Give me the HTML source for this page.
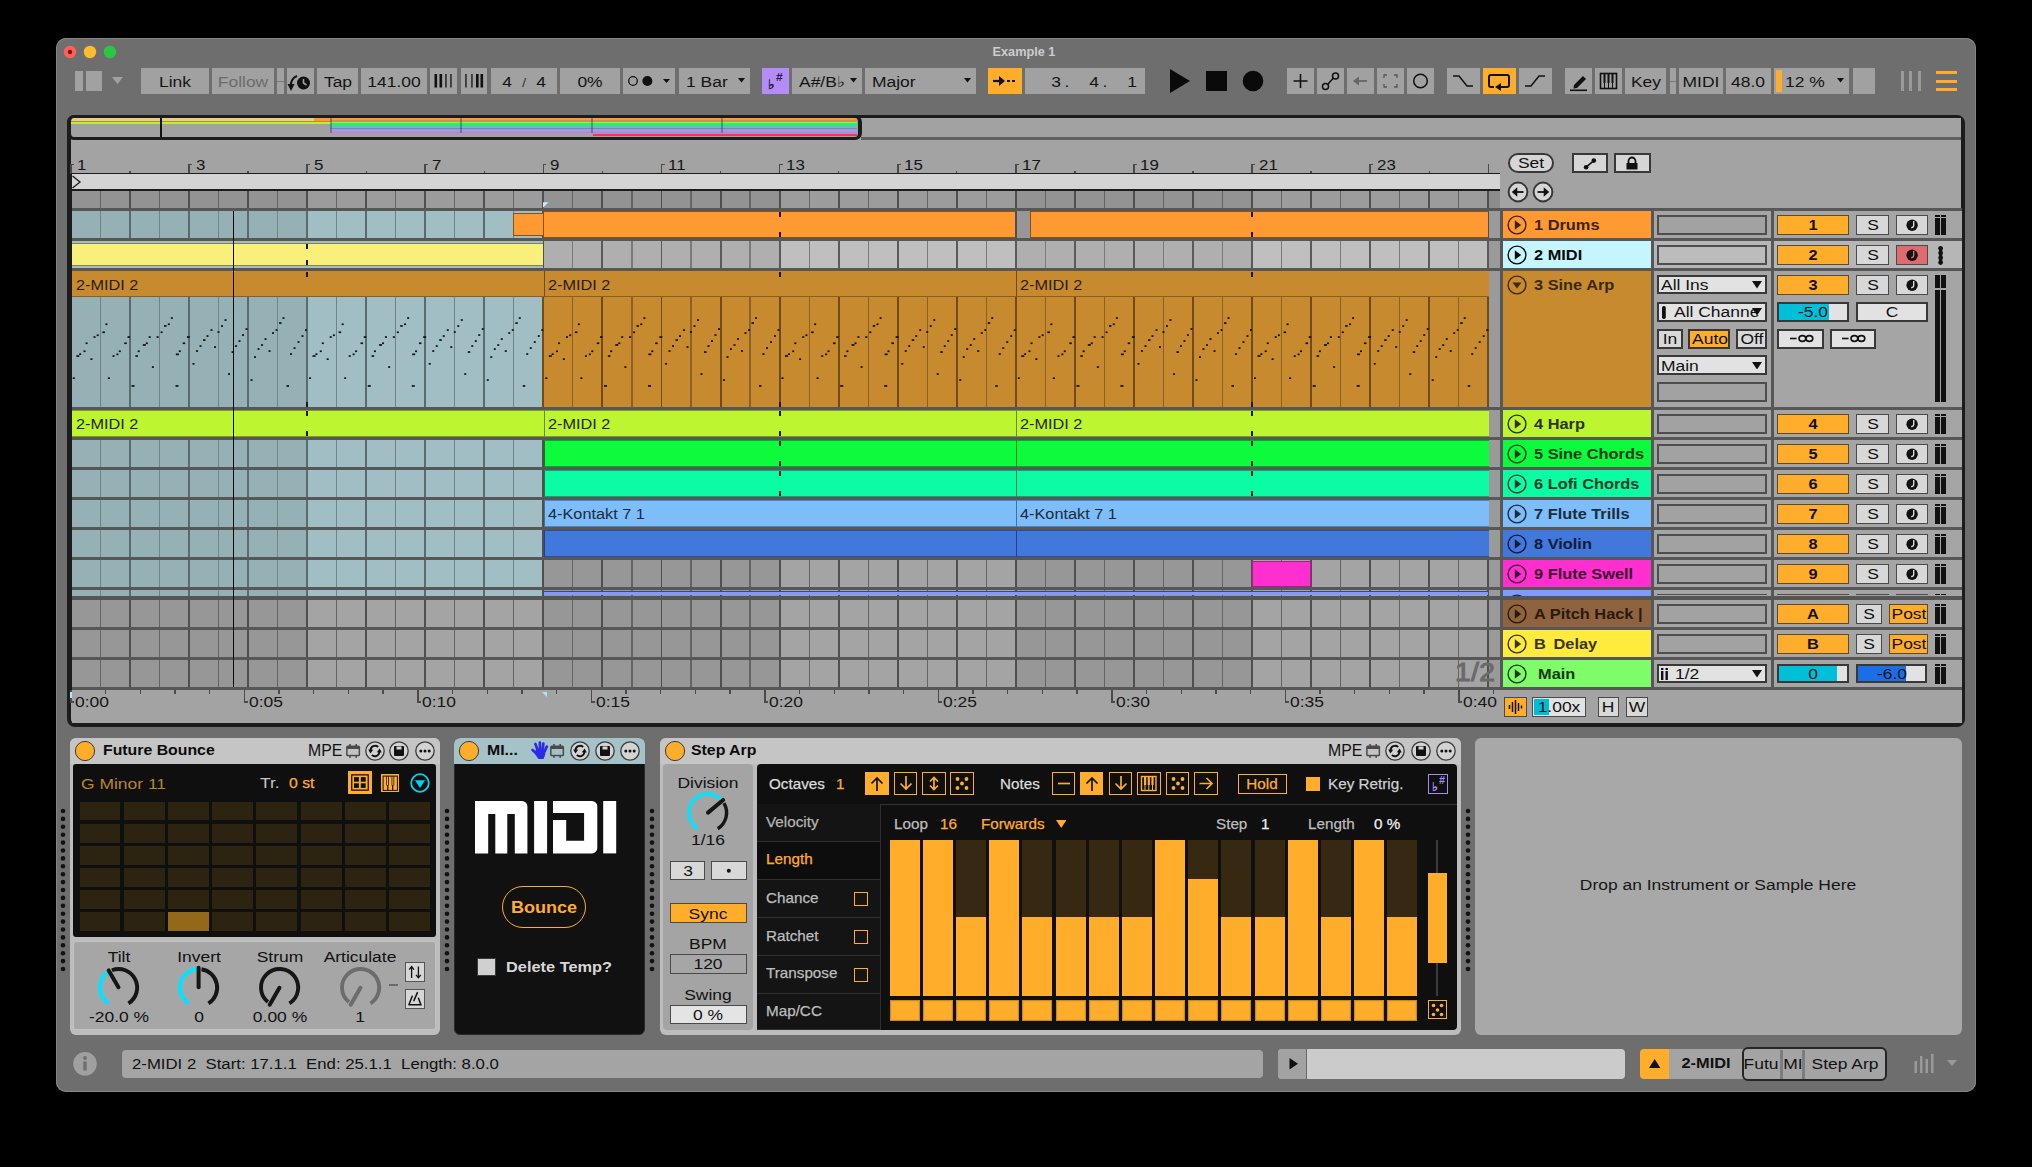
<!DOCTYPE html><html><head><meta charset="utf-8"><style>html,body{margin:0;padding:0;background:#000;width:2032px;height:1167px;overflow:hidden;}
body{position:relative;font-family:"Liberation Sans",sans-serif;}
div{position:absolute;box-sizing:border-box;}
.t{white-space:pre;}</style></head><body><div style="left:56px;top:38px;width:1920px;height:1054px;background:#6e6e6e;border-radius:10px;box-shadow:inset 0 0 0 1px #858585;"></div>
<div class="t" style="left:724.0px;top:45.17px;width:600px;font-size:13.39px;line-height:13.39px;color:#cdcdcd;font-weight:700;text-align:center;transform:scaleX(0.95);transform-origin:center 50%;">Example 1</div>
<svg style="position:absolute;left:62px;top:44px;" width="56" height="16" viewBox="0 0 56 16"><circle cx="8" cy="8" r="6.2" fill="#fe5f57"/><circle cx="8" cy="8" r="2.2" fill="#8a0b06"/><circle cx="28" cy="8" r="6.2" fill="#febc2e"/><circle cx="48" cy="8" r="6.2" fill="#28c840"/></svg>
<div style="left:75px;top:71px;width:8px;height:20px;background:#a1a1a1;"></div>
<div style="left:86px;top:71px;width:16px;height:20px;background:#a1a1a1;"></div>
<svg style="position:absolute;left:111.5px;top:77.0px;" width="11" height="7" viewBox="0 0 11 7"><polygon points="0,0 11,0 5.5,7" fill="#a1a1a1"/></svg>
<div style="left:141px;top:68px;width:68px;height:26px;background:#a1a1a1;"></div>
<div class="t" style="left:-125.0px;top:74.42px;width:600px;font-size:15.45px;line-height:15.45px;color:#141414;font-weight:400;text-align:center;transform:scaleX(1.13);transform-origin:center 50%;">Link</div>
<div style="left:212px;top:68px;width:62px;height:26px;background:#a1a1a1;"></div>
<div class="t" style="left:-57.0px;top:74.42px;width:600px;font-size:15.45px;line-height:15.45px;color:#6c6c6c;font-weight:400;text-align:center;transform:scaleX(1.13);transform-origin:center 50%;">Follow</div>
<div style="left:277px;top:68px;width:6.6px;height:26px;background:#a1a1a1;"></div>
<div style="left:277px;top:81px;width:6.6px;height:1px;background:#7a7a7a;"></div>
<div style="left:287px;top:68px;width:26.6px;height:26px;background:#a1a1a1;"></div>
<svg style="position:absolute;left:287px;top:68px;" width="27" height="26" viewBox="0 0 27 26"><path d="M10,8 A9,9 0 0 0 4,18" stroke="#111" stroke-width="2" fill="none"/><polygon points="0.5,16 7.5,16 4,23" fill="#111"/><circle cx="16.5" cy="15" r="6.5" fill="#111"/><path d="M16.5,11 L16.5,15 L19.5,17" stroke="#a1a1a1" stroke-width="1.6" fill="none"/></svg>
<div style="left:317px;top:68px;width:41px;height:26px;background:#a1a1a1;"></div>
<div class="t" style="left:37.5px;top:74.42px;width:600px;font-size:15.45px;line-height:15.45px;color:#141414;font-weight:400;text-align:center;transform:scaleX(1.13);transform-origin:center 50%;">Tap</div>
<div style="left:361px;top:68px;width:66px;height:26px;background:#a1a1a1;"></div>
<div class="t" style="left:94.0px;top:74.42px;width:600px;font-size:15.45px;line-height:15.45px;color:#141414;font-weight:400;text-align:center;transform:scaleX(1.13);transform-origin:center 50%;">141.00</div>
<div style="left:430.4px;top:68px;width:26.6px;height:26px;background:#a1a1a1;"></div>
<svg style="position:absolute;left:430.4px;top:68px;" width="27" height="26" viewBox="0 0 27 26"><rect x="4.5" y="6" width="2.6" height="13.5" fill="#111"/><rect x="9.5" y="6" width="2.6" height="13.5" fill="#111"/><rect x="15.3" y="6" width="1.3" height="13.5" fill="#111"/><rect x="20.3" y="6" width="1.3" height="13.5" fill="#111"/></svg>
<div style="left:460.5px;top:68px;width:26.8px;height:26px;background:#a1a1a1;"></div>
<svg style="position:absolute;left:460.5px;top:68px;" width="27" height="26" viewBox="0 0 27 26"><rect x="4.3" y="6" width="1.3" height="13.5" fill="#111"/><rect x="10.3" y="6" width="1.3" height="13.5" fill="#111"/><rect x="15" y="6" width="2.6" height="13.5" fill="#111"/><rect x="19.5" y="6" width="2.6" height="13.5" fill="#111"/></svg>
<div style="left:490.8px;top:68px;width:66.2px;height:26px;background:#a1a1a1;"></div>
<div class="t" style="left:206.5px;top:74.42px;width:600px;font-size:15.45px;line-height:15.45px;color:#141414;font-weight:400;text-align:center;transform:scaleX(1.13);transform-origin:center 50%;">4</div>
<div class="t" style="left:224.0px;top:76.17px;width:600px;font-size:13.39px;line-height:13.39px;color:#3a3a3a;font-weight:400;text-align:center;transform:scaleX(1.13);transform-origin:center 50%;">/</div>
<div class="t" style="left:241.0px;top:74.42px;width:600px;font-size:15.45px;line-height:15.45px;color:#141414;font-weight:400;text-align:center;transform:scaleX(1.13);transform-origin:center 50%;">4</div>
<div style="left:560px;top:68px;width:60px;height:26px;background:#a1a1a1;"></div>
<div class="t" style="left:290.0px;top:74.42px;width:600px;font-size:15.45px;line-height:15.45px;color:#141414;font-weight:400;text-align:center;transform:scaleX(1.13);transform-origin:center 50%;">0%</div>
<div style="left:623.3px;top:68px;width:51.7px;height:26px;background:#a1a1a1;"></div>
<svg style="position:absolute;left:623.3px;top:68px;" width="52" height="26" viewBox="0 0 52 26"><circle cx="10" cy="13" r="4.3" stroke="#111" stroke-width="1.3" fill="none"/><circle cx="24.4" cy="13" r="5" fill="#111"/><polygon points="40,11 47,11 43.5,15" fill="#111"/></svg>
<div style="left:679px;top:68px;width:70.6px;height:26px;background:#a1a1a1;"></div>
<div class="t" style="left:686px;top:74.42px;width:600px;font-size:15.45px;line-height:15.45px;color:#141414;font-weight:400;text-align:left;transform:scaleX(1.13);transform-origin:left 50%;">1 Bar</div>
<svg style="position:absolute;left:737.5px;top:78.25px;" width="7" height="4.5" viewBox="0 0 7 4.5"><polygon points="0,0 7,0 3.5,4.5" fill="#111"/></svg>
<div style="left:762px;top:68px;width:27px;height:26px;background:#b48cf7;"></div>
<div class="t" style="left:768px;top:77.67px;width:600px;font-size:13.39px;line-height:13.39px;color:#2a1a3a;font-weight:700;text-align:left;transform:scaleX(1.06);transform-origin:left 50%;">&#9837;</div>
<div class="t" style="left:776px;top:72.41px;width:600px;font-size:11.33px;line-height:11.33px;color:#2a1a3a;font-weight:700;text-align:left;transform:scaleX(1.06);transform-origin:left 50%;">#</div>
<div style="left:792px;top:68px;width:70px;height:26px;background:#a1a1a1;"></div>
<div class="t" style="left:799px;top:74.42px;width:600px;font-size:15.45px;line-height:15.45px;color:#141414;font-weight:400;text-align:left;transform:scaleX(1.13);transform-origin:left 50%;">A#/B&#9837;</div>
<svg style="position:absolute;left:849.5px;top:78.25px;" width="7" height="4.5" viewBox="0 0 7 4.5"><polygon points="0,0 7,0 3.5,4.5" fill="#111"/></svg>
<div style="left:865px;top:68px;width:111px;height:26px;background:#a1a1a1;"></div>
<div class="t" style="left:871.5px;top:74.42px;width:600px;font-size:15.45px;line-height:15.45px;color:#141414;font-weight:400;text-align:left;transform:scaleX(1.13);transform-origin:left 50%;">Major</div>
<svg style="position:absolute;left:963.5px;top:78.25px;" width="7" height="4.5" viewBox="0 0 7 4.5"><polygon points="0,0 7,0 3.5,4.5" fill="#111"/></svg>
<div style="left:988px;top:68px;width:34px;height:26px;background:#ffad2a;"></div>
<svg style="position:absolute;left:988px;top:68px;" width="34" height="26" viewBox="0 0 34 26"><path d="M5,13 L15,13" stroke="#111" stroke-width="2.2"/><polygon points="11,8 17,13 11,18" fill="#111"/><rect x="19" y="12" width="3" height="2" fill="#111"/><rect x="24" y="12" width="3" height="2" fill="#111"/></svg>
<div style="left:1025px;top:68px;width:120px;height:26px;background:#a1a1a1;"></div>
<div class="t" style="left:756.0px;top:74.42px;width:600px;font-size:15.45px;line-height:15.45px;color:#141414;font-weight:400;text-align:center;transform:scaleX(1.13);transform-origin:center 50%;">3</div>
<div class="t" style="left:767.0px;top:74.42px;width:600px;font-size:15.45px;line-height:15.45px;color:#141414;font-weight:400;text-align:center;transform:scaleX(1.13);transform-origin:center 50%;">.</div>
<div class="t" style="left:794.0px;top:74.42px;width:600px;font-size:15.45px;line-height:15.45px;color:#141414;font-weight:400;text-align:center;transform:scaleX(1.13);transform-origin:center 50%;">4</div>
<div class="t" style="left:805.0px;top:74.42px;width:600px;font-size:15.45px;line-height:15.45px;color:#141414;font-weight:400;text-align:center;transform:scaleX(1.13);transform-origin:center 50%;">.</div>
<div class="t" style="left:832.0px;top:74.42px;width:600px;font-size:15.45px;line-height:15.45px;color:#141414;font-weight:400;text-align:center;transform:scaleX(1.13);transform-origin:center 50%;">1</div>
<svg style="position:absolute;left:1168px;top:66px;" width="100" height="30" viewBox="0 0 100 30"><polygon points="2,3 22,15 2,27" fill="#0a0a0a"/><rect x="38" y="5" width="21" height="20" fill="#0a0a0a"/><circle cx="85" cy="15" r="10.3" fill="#0a0a0a"/></svg>
<div style="left:1287px;top:68px;width:27px;height:26px;background:#a1a1a1;"></div>
<svg style="position:absolute;left:1287px;top:68px;" width="27" height="26" viewBox="0 0 27 26"><path d="M13.5,6 V20 M6.5,13 H20.5" stroke="#111" stroke-width="1.6"/></svg>
<div style="left:1317px;top:68px;width:27px;height:26px;background:#a1a1a1;"></div>
<svg style="position:absolute;left:1317px;top:68px;" width="27" height="26" viewBox="0 0 27 26"><circle cx="8.5" cy="18.5" r="3" stroke="#111" stroke-width="1.5" fill="none"/><circle cx="18.5" cy="8" r="3" stroke="#111" stroke-width="1.5" fill="none"/><path d="M10.6,16.4 L16.4,10.1" stroke="#111" stroke-width="1.5"/></svg>
<div style="left:1347px;top:68px;width:27px;height:26px;background:#a1a1a1;"></div>
<svg style="position:absolute;left:1347px;top:68px;" width="27" height="26" viewBox="0 0 27 26"><path d="M8,13 H20" stroke="#666" stroke-width="1.8"/><polygon points="6,13 12,8.5 12,17.5" fill="#666"/></svg>
<div style="left:1377px;top:68px;width:27px;height:26px;background:#a1a1a1;"></div>
<svg style="position:absolute;left:1377px;top:68px;" width="27" height="26" viewBox="0 0 27 26"><path d="M7,10 V7 H10 M17,7 H20 V10 M20,16 V19 H17 M10,19 H7 V16" stroke="#555" stroke-width="1.3" fill="none"/></svg>
<div style="left:1407px;top:68px;width:27px;height:26px;background:#a1a1a1;"></div>
<svg style="position:absolute;left:1407px;top:68px;" width="27" height="26" viewBox="0 0 27 26"><circle cx="13.5" cy="13" r="6.8" stroke="#111" stroke-width="1.5" fill="none"/></svg>
<div style="left:1446.7px;top:68px;width:33.3px;height:26px;background:#a1a1a1;"></div>
<svg style="position:absolute;left:1446.7px;top:68px;" width="33.3" height="26" viewBox="0 0 33.3 26"><path d="M6,8 H12 L20,18 H26" stroke="#111" stroke-width="1.5" fill="none"/></svg>
<div style="left:1483px;top:68px;width:33px;height:26px;background:#ffad2a;"></div>
<svg style="position:absolute;left:1483px;top:68px;" width="33" height="26" viewBox="0 0 33 26"><path d="M11,19 H8 A2,2 0 0 1 6,17 V9 A2,2 0 0 1 8,7 H24 A2,2 0 0 1 26,9 V17 A2,2 0 0 1 24,19 H17" stroke="#111" stroke-width="2" fill="none"/><polygon points="18,15 12,19 18,23" fill="#111"/></svg>
<div style="left:1519px;top:68px;width:33px;height:26px;background:#a1a1a1;"></div>
<svg style="position:absolute;left:1519px;top:68px;" width="33" height="26" viewBox="0 0 33 26"><path d="M6,18 H12 L20,8 H26" stroke="#111" stroke-width="1.5" fill="none"/></svg>
<div style="left:1564.8px;top:68px;width:26.9px;height:26px;background:#a1a1a1;"></div>
<svg style="position:absolute;left:1564.8px;top:68px;" width="27" height="26" viewBox="0 0 27 26"><polygon points="9,17 18,8 21,11 12,20 8.5,20.5" fill="#111"/><rect x="5" y="21.5" width="17" height="1.6" fill="#111"/></svg>
<div style="left:1595px;top:68px;width:27px;height:26px;background:#a1a1a1;"></div>
<svg style="position:absolute;left:1595px;top:68px;" width="27" height="26" viewBox="0 0 27 26"><rect x="5.5" y="5.5" width="16" height="15" stroke="#111" stroke-width="1.6" fill="none"/><rect x="8.5" y="6" width="2" height="9" fill="#111"/><rect x="12.5" y="6" width="2" height="9" fill="#111"/><rect x="16.5" y="6" width="2" height="9" fill="#111"/><path d="M9.5,15 V20 M13.5,15 V20 M17.5,15 V20" stroke="#111" stroke-width="1"/></svg>
<div style="left:1625px;top:68px;width:41px;height:26px;background:#a1a1a1;"></div>
<div class="t" style="left:1345.5px;top:74.42px;width:600px;font-size:15.45px;line-height:15.45px;color:#141414;font-weight:400;text-align:center;transform:scaleX(1.13);transform-origin:center 50%;">Key</div>
<div style="left:1669.5px;top:68px;width:6.5px;height:26px;background:#a1a1a1;"></div>
<div style="left:1669.5px;top:81px;width:6.5px;height:1px;background:#7a7a7a;"></div>
<div style="left:1679px;top:68px;width:43.9px;height:26px;background:#a1a1a1;"></div>
<div class="t" style="left:1401.0px;top:74.42px;width:600px;font-size:15.45px;line-height:15.45px;color:#141414;font-weight:400;text-align:center;transform:scaleX(1.13);transform-origin:center 50%;">MIDI</div>
<div style="left:1726px;top:68px;width:44.5px;height:26px;background:#a1a1a1;"></div>
<div class="t" style="left:1448.3px;top:74.42px;width:600px;font-size:15.45px;line-height:15.45px;color:#141414;font-weight:400;text-align:center;transform:scaleX(1.13);transform-origin:center 50%;">48.0</div>
<div style="left:1774px;top:68px;width:75.4px;height:26px;background:#a1a1a1;"></div>
<div style="left:1776px;top:70px;width:6px;height:22px;background:#ffad2a;"></div>
<div class="t" style="left:1785px;top:74.42px;width:600px;font-size:15.45px;line-height:15.45px;color:#141414;font-weight:400;text-align:left;transform:scaleX(1.13);transform-origin:left 50%;">12 %</div>
<svg style="position:absolute;left:1837.0px;top:78.25px;" width="7" height="4.5" viewBox="0 0 7 4.5"><polygon points="0,0 7,0 3.5,4.5" fill="#111"/></svg>
<div style="left:1853px;top:68px;width:21.8px;height:26px;background:#a1a1a1;"></div>
<div style="left:1901px;top:71px;width:3px;height:20px;background:#9a9a9a;"></div>
<div style="left:1909.3px;top:71px;width:3.0px;height:20px;background:#9a9a9a;"></div>
<div style="left:1918px;top:71px;width:3px;height:20px;background:#9a9a9a;"></div>
<div style="left:1936px;top:70.5px;width:21px;height:3.0px;background:#ffad2a;"></div>
<div style="left:1936px;top:79.5px;width:21px;height:3.0px;background:#ffad2a;"></div>
<div style="left:1936px;top:88px;width:21px;height:3px;background:#ffad2a;"></div>
<div style="left:67px;top:115px;width:1898px;height:612px;background:#a3a3a3;border:4px solid #1c1c1c;border-top-width:3px;border-radius:8px;"></div>
<div style="left:71px;top:118px;width:1890px;height:19.5px;background:#a2a2a2;"></div>
<div style="left:861px;top:137px;width:1100px;height:2.5px;background:#5f5f5f;"></div>
<div style="left:71px;top:118px;width:260px;height:3px;background:#e4d084;"></div>
<div style="left:313.6px;top:118px;width:17.4px;height:3px;background:#ff9a32;"></div>
<div style="left:71px;top:121px;width:260px;height:0.8px;background:#c08a3a;"></div>
<div style="left:71px;top:121.8px;width:260px;height:2.3px;background:#b8f236;"></div>
<div style="left:331px;top:118px;width:526px;height:1.7px;background:#ff9a32;"></div>
<div style="left:331px;top:119.7px;width:526px;height:2.0px;background:#c49466;"></div>
<div style="left:331px;top:121.7px;width:526px;height:4.8px;background:linear-gradient(#b0f536, #20f050 50%, #18f0a0);"></div>
<div style="left:331px;top:126.5px;width:526px;height:2.6px;background:linear-gradient(#7cc0fa, #4a7ee0);"></div>
<div style="left:331px;top:130px;width:526px;height:3px;background:linear-gradient(#98a4ea, #d070e6);"></div>
<div style="left:593px;top:133.5px;width:264px;height:2.3px;background:#ff3056;"></div>
<div style="left:330.4px;top:118px;width:1.2px;height:15px;background:rgba(20,20,60,0.3);"></div>
<div style="left:460.4px;top:118px;width:1.2px;height:15px;background:rgba(20,20,60,0.3);"></div>
<div style="left:591.4px;top:118px;width:1.2px;height:15px;background:rgba(20,20,60,0.3);"></div>
<div style="left:721.4px;top:118px;width:1.2px;height:15px;background:rgba(20,20,60,0.3);"></div>
<div style="left:160px;top:118px;width:2px;height:19.5px;background:#111;"></div>
<div style="left:67px;top:115px;width:795px;height:25px;background:transparent;border:3px solid #1c1c1c;border-left-width:4px;border-right-width:4px;border-radius:7px;"></div>
<div style="left:70.1px;top:163.5px;width:1.6px;height:10.5px;background:#4a4a4a;"></div>
<div style="left:70.9px;top:163.5px;width:3.0px;height:1.5px;background:#4a4a4a;"></div>
<div class="t" style="left:77.4px;top:157.86px;width:600px;font-size:14.94px;line-height:14.94px;color:#161616;font-weight:400;text-align:left;transform:scaleX(1.13);transform-origin:left 50%;">1</div>
<div style="left:129.26px;top:170.5px;width:1.4px;height:3.5px;background:#4a4a4a;"></div>
<div style="left:188.22px;top:163.5px;width:1.6px;height:10.5px;background:#4a4a4a;"></div>
<div style="left:189.02px;top:163.5px;width:3.0px;height:1.5px;background:#4a4a4a;"></div>
<div class="t" style="left:195.52px;top:157.86px;width:600px;font-size:14.94px;line-height:14.94px;color:#161616;font-weight:400;text-align:left;transform:scaleX(1.13);transform-origin:left 50%;">3</div>
<div style="left:247.38px;top:170.5px;width:1.4px;height:3.5px;background:#4a4a4a;"></div>
<div style="left:306.34px;top:163.5px;width:1.6px;height:10.5px;background:#4a4a4a;"></div>
<div style="left:307.14px;top:163.5px;width:3.0px;height:1.5px;background:#4a4a4a;"></div>
<div class="t" style="left:313.64px;top:157.86px;width:600px;font-size:14.94px;line-height:14.94px;color:#161616;font-weight:400;text-align:left;transform:scaleX(1.13);transform-origin:left 50%;">5</div>
<div style="left:365.5px;top:170.5px;width:1.4px;height:3.5px;background:#4a4a4a;"></div>
<div style="left:424.46px;top:163.5px;width:1.6px;height:10.5px;background:#4a4a4a;"></div>
<div style="left:425.26px;top:163.5px;width:3.0px;height:1.5px;background:#4a4a4a;"></div>
<div class="t" style="left:431.76px;top:157.86px;width:600px;font-size:14.94px;line-height:14.94px;color:#161616;font-weight:400;text-align:left;transform:scaleX(1.13);transform-origin:left 50%;">7</div>
<div style="left:483.62px;top:170.5px;width:1.4px;height:3.5px;background:#4a4a4a;"></div>
<div style="left:542.58px;top:163.5px;width:1.6px;height:10.5px;background:#4a4a4a;"></div>
<div style="left:543.38px;top:163.5px;width:3.0px;height:1.5px;background:#4a4a4a;"></div>
<div class="t" style="left:549.88px;top:157.86px;width:600px;font-size:14.94px;line-height:14.94px;color:#161616;font-weight:400;text-align:left;transform:scaleX(1.13);transform-origin:left 50%;">9</div>
<div style="left:601.74px;top:170.5px;width:1.4px;height:3.5px;background:#4a4a4a;"></div>
<div style="left:660.7px;top:163.5px;width:1.6px;height:10.5px;background:#4a4a4a;"></div>
<div style="left:661.5px;top:163.5px;width:3.0px;height:1.5px;background:#4a4a4a;"></div>
<div class="t" style="left:668.0px;top:157.86px;width:600px;font-size:14.94px;line-height:14.94px;color:#161616;font-weight:400;text-align:left;transform:scaleX(1.13);transform-origin:left 50%;">11</div>
<div style="left:719.86px;top:170.5px;width:1.4px;height:3.5px;background:#4a4a4a;"></div>
<div style="left:778.82px;top:163.5px;width:1.6px;height:10.5px;background:#4a4a4a;"></div>
<div style="left:779.62px;top:163.5px;width:3.0px;height:1.5px;background:#4a4a4a;"></div>
<div class="t" style="left:786.12px;top:157.86px;width:600px;font-size:14.94px;line-height:14.94px;color:#161616;font-weight:400;text-align:left;transform:scaleX(1.13);transform-origin:left 50%;">13</div>
<div style="left:837.98px;top:170.5px;width:1.4px;height:3.5px;background:#4a4a4a;"></div>
<div style="left:896.94px;top:163.5px;width:1.6px;height:10.5px;background:#4a4a4a;"></div>
<div style="left:897.74px;top:163.5px;width:3.0px;height:1.5px;background:#4a4a4a;"></div>
<div class="t" style="left:904.24px;top:157.86px;width:600px;font-size:14.94px;line-height:14.94px;color:#161616;font-weight:400;text-align:left;transform:scaleX(1.13);transform-origin:left 50%;">15</div>
<div style="left:956.1px;top:170.5px;width:1.4px;height:3.5px;background:#4a4a4a;"></div>
<div style="left:1015.06px;top:163.5px;width:1.6px;height:10.5px;background:#4a4a4a;"></div>
<div style="left:1015.86px;top:163.5px;width:3.0px;height:1.5px;background:#4a4a4a;"></div>
<div class="t" style="left:1022.36px;top:157.86px;width:600px;font-size:14.94px;line-height:14.94px;color:#161616;font-weight:400;text-align:left;transform:scaleX(1.13);transform-origin:left 50%;">17</div>
<div style="left:1074.22px;top:170.5px;width:1.4px;height:3.5px;background:#4a4a4a;"></div>
<div style="left:1133.18px;top:163.5px;width:1.6px;height:10.5px;background:#4a4a4a;"></div>
<div style="left:1133.98px;top:163.5px;width:3.0px;height:1.5px;background:#4a4a4a;"></div>
<div class="t" style="left:1140.48px;top:157.86px;width:600px;font-size:14.94px;line-height:14.94px;color:#161616;font-weight:400;text-align:left;transform:scaleX(1.13);transform-origin:left 50%;">19</div>
<div style="left:1192.34px;top:170.5px;width:1.4px;height:3.5px;background:#4a4a4a;"></div>
<div style="left:1251.3px;top:163.5px;width:1.6px;height:10.5px;background:#4a4a4a;"></div>
<div style="left:1252.1px;top:163.5px;width:3.0px;height:1.5px;background:#4a4a4a;"></div>
<div class="t" style="left:1258.6px;top:157.86px;width:600px;font-size:14.94px;line-height:14.94px;color:#161616;font-weight:400;text-align:left;transform:scaleX(1.13);transform-origin:left 50%;">21</div>
<div style="left:1310.46px;top:170.5px;width:1.4px;height:3.5px;background:#4a4a4a;"></div>
<div style="left:1369.42px;top:163.5px;width:1.6px;height:10.5px;background:#4a4a4a;"></div>
<div style="left:1370.22px;top:163.5px;width:3.0px;height:1.5px;background:#4a4a4a;"></div>
<div class="t" style="left:1376.72px;top:157.86px;width:600px;font-size:14.94px;line-height:14.94px;color:#161616;font-weight:400;text-align:left;transform:scaleX(1.13);transform-origin:left 50%;">23</div>
<div style="left:1428.58px;top:170.5px;width:1.4px;height:3.5px;background:#4a4a4a;"></div>
<div style="left:1487.54px;top:163.5px;width:1.6px;height:10.5px;background:#4a4a4a;"></div>
<div style="left:71px;top:173.3px;width:1429px;height:17.7px;background:#d4d4d4;border-top:1.8px solid #1c1c1c;border-bottom:2px solid #1c1c1c;"></div>
<svg style="position:absolute;left:71px;top:175px;" width="12" height="15" viewBox="0 0 12 15"><polyline points="1.5,1 9,7 1.5,13" stroke="#222" stroke-width="1.4" fill="none"/></svg>
<div style="left:71.5px;top:208px;width:1890.0px;height:482px;background:#575757;"></div>
<div style="left:71.5px;top:191px;width:235.64px;height:17px;background:#939393;"></div>
<div style="left:307.14px;top:191px;width:236.24px;height:17px;background:#9c9c9c;"></div>
<div style="left:543.38px;top:191px;width:236.24px;height:17px;background:#939393;"></div>
<div style="left:779.62px;top:191px;width:236.24px;height:17px;background:#9c9c9c;"></div>
<div style="left:1015.86px;top:191px;width:236.24px;height:17px;background:#939393;"></div>
<div style="left:1252.1px;top:191px;width:236.24px;height:17px;background:#9c9c9c;"></div>
<div style="left:69.95px;top:191px;width:1.9px;height:17px;background:#4f4f4f;"></div>
<div style="left:99.83px;top:191px;width:1.2px;height:17px;background:#646464;"></div>
<div style="left:129.01px;top:191px;width:1.9px;height:17px;background:#4f4f4f;"></div>
<div style="left:158.89px;top:191px;width:1.2px;height:17px;background:#646464;"></div>
<div style="left:188.07px;top:191px;width:1.9px;height:17px;background:#4f4f4f;"></div>
<div style="left:217.95px;top:191px;width:1.2px;height:17px;background:#646464;"></div>
<div style="left:247.13px;top:191px;width:1.9px;height:17px;background:#4f4f4f;"></div>
<div style="left:277.01px;top:191px;width:1.2px;height:17px;background:#646464;"></div>
<div style="left:306.19px;top:191px;width:1.9px;height:17px;background:#4f4f4f;"></div>
<div style="left:336.07px;top:191px;width:1.2px;height:17px;background:#646464;"></div>
<div style="left:365.25px;top:191px;width:1.9px;height:17px;background:#4f4f4f;"></div>
<div style="left:395.13px;top:191px;width:1.2px;height:17px;background:#646464;"></div>
<div style="left:424.31px;top:191px;width:1.9px;height:17px;background:#4f4f4f;"></div>
<div style="left:454.19px;top:191px;width:1.2px;height:17px;background:#646464;"></div>
<div style="left:483.37px;top:191px;width:1.9px;height:17px;background:#4f4f4f;"></div>
<div style="left:513.25px;top:191px;width:1.2px;height:17px;background:#646464;"></div>
<div style="left:542.43px;top:191px;width:1.9px;height:17px;background:#4f4f4f;"></div>
<div style="left:572.31px;top:191px;width:1.2px;height:17px;background:#646464;"></div>
<div style="left:601.49px;top:191px;width:1.9px;height:17px;background:#4f4f4f;"></div>
<div style="left:631.37px;top:191px;width:1.2px;height:17px;background:#646464;"></div>
<div style="left:660.55px;top:191px;width:1.9px;height:17px;background:#4f4f4f;"></div>
<div style="left:690.43px;top:191px;width:1.2px;height:17px;background:#646464;"></div>
<div style="left:719.61px;top:191px;width:1.9px;height:17px;background:#4f4f4f;"></div>
<div style="left:749.49px;top:191px;width:1.2px;height:17px;background:#646464;"></div>
<div style="left:778.67px;top:191px;width:1.9px;height:17px;background:#4f4f4f;"></div>
<div style="left:808.55px;top:191px;width:1.2px;height:17px;background:#646464;"></div>
<div style="left:837.73px;top:191px;width:1.9px;height:17px;background:#4f4f4f;"></div>
<div style="left:867.61px;top:191px;width:1.2px;height:17px;background:#646464;"></div>
<div style="left:896.79px;top:191px;width:1.9px;height:17px;background:#4f4f4f;"></div>
<div style="left:926.67px;top:191px;width:1.2px;height:17px;background:#646464;"></div>
<div style="left:955.85px;top:191px;width:1.9px;height:17px;background:#4f4f4f;"></div>
<div style="left:985.73px;top:191px;width:1.2px;height:17px;background:#646464;"></div>
<div style="left:1014.91px;top:191px;width:1.9px;height:17px;background:#4f4f4f;"></div>
<div style="left:1044.79px;top:191px;width:1.2px;height:17px;background:#646464;"></div>
<div style="left:1073.97px;top:191px;width:1.9px;height:17px;background:#4f4f4f;"></div>
<div style="left:1103.85px;top:191px;width:1.2px;height:17px;background:#646464;"></div>
<div style="left:1133.03px;top:191px;width:1.9px;height:17px;background:#4f4f4f;"></div>
<div style="left:1162.91px;top:191px;width:1.2px;height:17px;background:#646464;"></div>
<div style="left:1192.09px;top:191px;width:1.9px;height:17px;background:#4f4f4f;"></div>
<div style="left:1221.97px;top:191px;width:1.2px;height:17px;background:#646464;"></div>
<div style="left:1251.15px;top:191px;width:1.9px;height:17px;background:#4f4f4f;"></div>
<div style="left:1281.03px;top:191px;width:1.2px;height:17px;background:#646464;"></div>
<div style="left:1310.21px;top:191px;width:1.9px;height:17px;background:#4f4f4f;"></div>
<div style="left:1340.09px;top:191px;width:1.2px;height:17px;background:#646464;"></div>
<div style="left:1369.27px;top:191px;width:1.9px;height:17px;background:#4f4f4f;"></div>
<div style="left:1399.15px;top:191px;width:1.2px;height:17px;background:#646464;"></div>
<div style="left:1428.33px;top:191px;width:1.9px;height:17px;background:#4f4f4f;"></div>
<div style="left:1458.21px;top:191px;width:1.2px;height:17px;background:#646464;"></div>
<div style="left:1487.39px;top:191px;width:1.9px;height:17px;background:#4f4f4f;"></div>
<div style="left:1489.2px;top:191px;width:11.3px;height:17px;background:#8c8c8c;"></div>
<div style="left:71.5px;top:211px;width:235.64px;height:27px;background:#95b1b6;"></div>
<div style="left:307.14px;top:211px;width:236.24px;height:27px;background:#a0bec3;"></div>
<div style="left:543.38px;top:211px;width:236.24px;height:27px;background:#979797;"></div>
<div style="left:779.62px;top:211px;width:236.24px;height:27px;background:#a4a4a4;"></div>
<div style="left:1015.86px;top:211px;width:236.24px;height:27px;background:#979797;"></div>
<div style="left:1252.1px;top:211px;width:236.24px;height:27px;background:#a4a4a4;"></div>
<div style="left:69.95px;top:211px;width:1.9px;height:27px;background:#586c6f;"></div>
<div style="left:99.83px;top:211px;width:1.2px;height:27px;background:#6d8588;"></div>
<div style="left:129.01px;top:211px;width:1.9px;height:27px;background:#586c6f;"></div>
<div style="left:158.89px;top:211px;width:1.2px;height:27px;background:#6d8588;"></div>
<div style="left:188.07px;top:211px;width:1.9px;height:27px;background:#586c6f;"></div>
<div style="left:217.95px;top:211px;width:1.2px;height:27px;background:#6d8588;"></div>
<div style="left:247.13px;top:211px;width:1.9px;height:27px;background:#586c6f;"></div>
<div style="left:277.01px;top:211px;width:1.2px;height:27px;background:#6d8588;"></div>
<div style="left:306.19px;top:211px;width:1.9px;height:27px;background:#586c6f;"></div>
<div style="left:336.07px;top:211px;width:1.2px;height:27px;background:#6d8588;"></div>
<div style="left:365.25px;top:211px;width:1.9px;height:27px;background:#586c6f;"></div>
<div style="left:395.13px;top:211px;width:1.2px;height:27px;background:#6d8588;"></div>
<div style="left:424.31px;top:211px;width:1.9px;height:27px;background:#586c6f;"></div>
<div style="left:454.19px;top:211px;width:1.2px;height:27px;background:#6d8588;"></div>
<div style="left:483.37px;top:211px;width:1.9px;height:27px;background:#586c6f;"></div>
<div style="left:513.25px;top:211px;width:1.2px;height:27px;background:#6d8588;"></div>
<div style="left:542.43px;top:211px;width:1.9px;height:27px;background:#4f4f4f;"></div>
<div style="left:572.31px;top:211px;width:1.2px;height:27px;background:#646464;"></div>
<div style="left:601.49px;top:211px;width:1.9px;height:27px;background:#4f4f4f;"></div>
<div style="left:631.37px;top:211px;width:1.2px;height:27px;background:#646464;"></div>
<div style="left:660.55px;top:211px;width:1.9px;height:27px;background:#4f4f4f;"></div>
<div style="left:690.43px;top:211px;width:1.2px;height:27px;background:#646464;"></div>
<div style="left:719.61px;top:211px;width:1.9px;height:27px;background:#4f4f4f;"></div>
<div style="left:749.49px;top:211px;width:1.2px;height:27px;background:#646464;"></div>
<div style="left:778.67px;top:211px;width:1.9px;height:27px;background:#4f4f4f;"></div>
<div style="left:808.55px;top:211px;width:1.2px;height:27px;background:#646464;"></div>
<div style="left:837.73px;top:211px;width:1.9px;height:27px;background:#4f4f4f;"></div>
<div style="left:867.61px;top:211px;width:1.2px;height:27px;background:#646464;"></div>
<div style="left:896.79px;top:211px;width:1.9px;height:27px;background:#4f4f4f;"></div>
<div style="left:926.67px;top:211px;width:1.2px;height:27px;background:#646464;"></div>
<div style="left:955.85px;top:211px;width:1.9px;height:27px;background:#4f4f4f;"></div>
<div style="left:985.73px;top:211px;width:1.2px;height:27px;background:#646464;"></div>
<div style="left:1014.91px;top:211px;width:1.9px;height:27px;background:#4f4f4f;"></div>
<div style="left:1044.79px;top:211px;width:1.2px;height:27px;background:#646464;"></div>
<div style="left:1073.97px;top:211px;width:1.9px;height:27px;background:#4f4f4f;"></div>
<div style="left:1103.85px;top:211px;width:1.2px;height:27px;background:#646464;"></div>
<div style="left:1133.03px;top:211px;width:1.9px;height:27px;background:#4f4f4f;"></div>
<div style="left:1162.91px;top:211px;width:1.2px;height:27px;background:#646464;"></div>
<div style="left:1192.09px;top:211px;width:1.9px;height:27px;background:#4f4f4f;"></div>
<div style="left:1221.97px;top:211px;width:1.2px;height:27px;background:#646464;"></div>
<div style="left:1251.15px;top:211px;width:1.9px;height:27px;background:#4f4f4f;"></div>
<div style="left:1281.03px;top:211px;width:1.2px;height:27px;background:#646464;"></div>
<div style="left:1310.21px;top:211px;width:1.9px;height:27px;background:#4f4f4f;"></div>
<div style="left:1340.09px;top:211px;width:1.2px;height:27px;background:#646464;"></div>
<div style="left:1369.27px;top:211px;width:1.9px;height:27px;background:#4f4f4f;"></div>
<div style="left:1399.15px;top:211px;width:1.2px;height:27px;background:#646464;"></div>
<div style="left:1428.33px;top:211px;width:1.9px;height:27px;background:#4f4f4f;"></div>
<div style="left:1458.21px;top:211px;width:1.2px;height:27px;background:#646464;"></div>
<div style="left:1487.39px;top:211px;width:1.9px;height:27px;background:#4f4f4f;"></div>
<div style="left:513px;top:213.2px;width:31.6px;height:23.3px;background:#ff9a32;border:1.4px solid #8a5016;"></div>
<div style="left:543.2px;top:211px;width:472.0px;height:27px;background:#ff9a32;border-top:1px solid #8a5016;border-bottom:1px solid #8a5016;border-left:1px solid #8a5016;"></div>
<div style="left:778.62px;top:212px;width:2.0px;height:5px;background:#1a1a1a;"></div>
<div style="left:778.62px;top:232px;width:2.0px;height:5px;background:#1a1a1a;"></div>
<div style="left:1029.5px;top:211px;width:458.7px;height:27px;background:#ff9a32;border-top:1px solid #8a5016;border-bottom:1px solid #8a5016;border-left:1px solid #8a5016;"></div>
<div style="left:1251.1px;top:212px;width:2.0px;height:5px;background:#1a1a1a;"></div>
<div style="left:1251.1px;top:232px;width:2.0px;height:5px;background:#1a1a1a;"></div>
<div style="left:71.5px;top:241px;width:235.64px;height:27px;background:#afafaf;"></div>
<div style="left:307.14px;top:241px;width:236.24px;height:27px;background:#bfbfbf;"></div>
<div style="left:543.38px;top:241px;width:236.24px;height:27px;background:#afafaf;"></div>
<div style="left:779.62px;top:241px;width:236.24px;height:27px;background:#bfbfbf;"></div>
<div style="left:1015.86px;top:241px;width:236.24px;height:27px;background:#afafaf;"></div>
<div style="left:1252.1px;top:241px;width:236.24px;height:27px;background:#bfbfbf;"></div>
<div style="left:69.95px;top:241px;width:1.9px;height:27px;background:#5a5a5a;"></div>
<div style="left:99.83px;top:241px;width:1.2px;height:27px;background:#7a7a7a;"></div>
<div style="left:129.01px;top:241px;width:1.9px;height:27px;background:#5a5a5a;"></div>
<div style="left:158.89px;top:241px;width:1.2px;height:27px;background:#7a7a7a;"></div>
<div style="left:188.07px;top:241px;width:1.9px;height:27px;background:#5a5a5a;"></div>
<div style="left:217.95px;top:241px;width:1.2px;height:27px;background:#7a7a7a;"></div>
<div style="left:247.13px;top:241px;width:1.9px;height:27px;background:#5a5a5a;"></div>
<div style="left:277.01px;top:241px;width:1.2px;height:27px;background:#7a7a7a;"></div>
<div style="left:306.19px;top:241px;width:1.9px;height:27px;background:#5a5a5a;"></div>
<div style="left:336.07px;top:241px;width:1.2px;height:27px;background:#7a7a7a;"></div>
<div style="left:365.25px;top:241px;width:1.9px;height:27px;background:#5a5a5a;"></div>
<div style="left:395.13px;top:241px;width:1.2px;height:27px;background:#7a7a7a;"></div>
<div style="left:424.31px;top:241px;width:1.9px;height:27px;background:#5a5a5a;"></div>
<div style="left:454.19px;top:241px;width:1.2px;height:27px;background:#7a7a7a;"></div>
<div style="left:483.37px;top:241px;width:1.9px;height:27px;background:#5a5a5a;"></div>
<div style="left:513.25px;top:241px;width:1.2px;height:27px;background:#7a7a7a;"></div>
<div style="left:542.43px;top:241px;width:1.9px;height:27px;background:#5a5a5a;"></div>
<div style="left:572.31px;top:241px;width:1.2px;height:27px;background:#7a7a7a;"></div>
<div style="left:601.49px;top:241px;width:1.9px;height:27px;background:#5a5a5a;"></div>
<div style="left:631.37px;top:241px;width:1.2px;height:27px;background:#7a7a7a;"></div>
<div style="left:660.55px;top:241px;width:1.9px;height:27px;background:#5a5a5a;"></div>
<div style="left:690.43px;top:241px;width:1.2px;height:27px;background:#7a7a7a;"></div>
<div style="left:719.61px;top:241px;width:1.9px;height:27px;background:#5a5a5a;"></div>
<div style="left:749.49px;top:241px;width:1.2px;height:27px;background:#7a7a7a;"></div>
<div style="left:778.67px;top:241px;width:1.9px;height:27px;background:#5a5a5a;"></div>
<div style="left:808.55px;top:241px;width:1.2px;height:27px;background:#7a7a7a;"></div>
<div style="left:837.73px;top:241px;width:1.9px;height:27px;background:#5a5a5a;"></div>
<div style="left:867.61px;top:241px;width:1.2px;height:27px;background:#7a7a7a;"></div>
<div style="left:896.79px;top:241px;width:1.9px;height:27px;background:#5a5a5a;"></div>
<div style="left:926.67px;top:241px;width:1.2px;height:27px;background:#7a7a7a;"></div>
<div style="left:955.85px;top:241px;width:1.9px;height:27px;background:#5a5a5a;"></div>
<div style="left:985.73px;top:241px;width:1.2px;height:27px;background:#7a7a7a;"></div>
<div style="left:1014.91px;top:241px;width:1.9px;height:27px;background:#5a5a5a;"></div>
<div style="left:1044.79px;top:241px;width:1.2px;height:27px;background:#7a7a7a;"></div>
<div style="left:1073.97px;top:241px;width:1.9px;height:27px;background:#5a5a5a;"></div>
<div style="left:1103.85px;top:241px;width:1.2px;height:27px;background:#7a7a7a;"></div>
<div style="left:1133.03px;top:241px;width:1.9px;height:27px;background:#5a5a5a;"></div>
<div style="left:1162.91px;top:241px;width:1.2px;height:27px;background:#7a7a7a;"></div>
<div style="left:1192.09px;top:241px;width:1.9px;height:27px;background:#5a5a5a;"></div>
<div style="left:1221.97px;top:241px;width:1.2px;height:27px;background:#7a7a7a;"></div>
<div style="left:1251.15px;top:241px;width:1.9px;height:27px;background:#5a5a5a;"></div>
<div style="left:1281.03px;top:241px;width:1.2px;height:27px;background:#7a7a7a;"></div>
<div style="left:1310.21px;top:241px;width:1.9px;height:27px;background:#5a5a5a;"></div>
<div style="left:1340.09px;top:241px;width:1.2px;height:27px;background:#7a7a7a;"></div>
<div style="left:1369.27px;top:241px;width:1.9px;height:27px;background:#5a5a5a;"></div>
<div style="left:1399.15px;top:241px;width:1.2px;height:27px;background:#7a7a7a;"></div>
<div style="left:1428.33px;top:241px;width:1.9px;height:27px;background:#5a5a5a;"></div>
<div style="left:1458.21px;top:241px;width:1.2px;height:27px;background:#7a7a7a;"></div>
<div style="left:1487.39px;top:241px;width:1.9px;height:27px;background:#5a5a5a;"></div>
<div style="left:71.5px;top:241px;width:471.3px;height:27px;background:#a0bec3;"></div>
<div style="left:71.5px;top:243px;width:471.8px;height:23.3px;background:#f9ef7b;border-top:1.2px solid #8a8248;border-bottom:1.2px solid #8a8248;"></div>
<div style="left:542.6px;top:241px;width:1.7px;height:27px;background:#4f4f4f;"></div>
<div style="left:306.14px;top:244px;width:2.0px;height:5px;background:#1a1a1a;"></div>
<div style="left:306.14px;top:260px;width:2.0px;height:5px;background:#1a1a1a;"></div>
<div style="left:71.5px;top:271px;width:472.0px;height:26px;background:#c88a2f;border-bottom:1px solid #8a5f22;"></div>
<div class="t" style="left:75.5px;top:277.79px;width:600px;font-size:14.42px;line-height:14.42px;color:#2a1e0c;font-weight:400;text-align:left;transform:scaleX(1.13);transform-origin:left 50%;">2-MIDI 2</div>
<div style="left:306.14px;top:272px;width:2.0px;height:5px;background:#1a1a1a;"></div>
<div style="left:543.5px;top:271px;width:472.5px;height:26px;background:#c88a2f;border-bottom:1px solid #8a5f22;border-left:1.5px solid #6d4a1a;"></div>
<div class="t" style="left:547.5px;top:277.79px;width:600px;font-size:14.42px;line-height:14.42px;color:#2a1e0c;font-weight:400;text-align:left;transform:scaleX(1.13);transform-origin:left 50%;">2-MIDI 2</div>
<div style="left:778.62px;top:272px;width:2.0px;height:5px;background:#1a1a1a;"></div>
<div style="left:1016px;top:271px;width:472.5px;height:26px;background:#c88a2f;border-bottom:1px solid #8a5f22;border-left:1.5px solid #6d4a1a;"></div>
<div class="t" style="left:1020px;top:277.79px;width:600px;font-size:14.42px;line-height:14.42px;color:#2a1e0c;font-weight:400;text-align:left;transform:scaleX(1.13);transform-origin:left 50%;">2-MIDI 2</div>
<div style="left:1251.1px;top:272px;width:2.0px;height:5px;background:#1a1a1a;"></div>
<div style="left:71.5px;top:297px;width:235.64px;height:110px;background:#95b1b6;"></div>
<div style="left:307.14px;top:297px;width:236.24px;height:110px;background:#a0bec3;"></div>
<div style="left:543.38px;top:297px;width:236.24px;height:110px;background:#979797;"></div>
<div style="left:779.62px;top:297px;width:236.24px;height:110px;background:#a4a4a4;"></div>
<div style="left:1015.86px;top:297px;width:236.24px;height:110px;background:#979797;"></div>
<div style="left:1252.1px;top:297px;width:236.24px;height:110px;background:#a4a4a4;"></div>
<div style="left:543.5px;top:297px;width:945.0px;height:110px;background:#c88a2f;"></div>
<div style="left:69.95px;top:297px;width:1.9px;height:110px;background:#586c6f;"></div>
<div style="left:99.83px;top:297px;width:1.2px;height:110px;background:#6d8588;"></div>
<div style="left:129.01px;top:297px;width:1.9px;height:110px;background:#586c6f;"></div>
<div style="left:158.89px;top:297px;width:1.2px;height:110px;background:#6d8588;"></div>
<div style="left:188.07px;top:297px;width:1.9px;height:110px;background:#586c6f;"></div>
<div style="left:217.95px;top:297px;width:1.2px;height:110px;background:#6d8588;"></div>
<div style="left:247.13px;top:297px;width:1.9px;height:110px;background:#586c6f;"></div>
<div style="left:277.01px;top:297px;width:1.2px;height:110px;background:#6d8588;"></div>
<div style="left:306.19px;top:297px;width:1.9px;height:110px;background:#586c6f;"></div>
<div style="left:336.07px;top:297px;width:1.2px;height:110px;background:#6d8588;"></div>
<div style="left:365.25px;top:297px;width:1.9px;height:110px;background:#586c6f;"></div>
<div style="left:395.13px;top:297px;width:1.2px;height:110px;background:#6d8588;"></div>
<div style="left:424.31px;top:297px;width:1.9px;height:110px;background:#586c6f;"></div>
<div style="left:454.19px;top:297px;width:1.2px;height:110px;background:#6d8588;"></div>
<div style="left:483.37px;top:297px;width:1.9px;height:110px;background:#586c6f;"></div>
<div style="left:513.25px;top:297px;width:1.2px;height:110px;background:#6d8588;"></div>
<div style="left:542.43px;top:297px;width:1.9px;height:110px;background:#6e4c1d;"></div>
<div style="left:572.31px;top:297px;width:1.2px;height:110px;background:#8a6128;"></div>
<div style="left:601.49px;top:297px;width:1.9px;height:110px;background:#6e4c1d;"></div>
<div style="left:631.37px;top:297px;width:1.2px;height:110px;background:#8a6128;"></div>
<div style="left:660.55px;top:297px;width:1.9px;height:110px;background:#6e4c1d;"></div>
<div style="left:690.43px;top:297px;width:1.2px;height:110px;background:#8a6128;"></div>
<div style="left:719.61px;top:297px;width:1.9px;height:110px;background:#6e4c1d;"></div>
<div style="left:749.49px;top:297px;width:1.2px;height:110px;background:#8a6128;"></div>
<div style="left:778.67px;top:297px;width:1.9px;height:110px;background:#6e4c1d;"></div>
<div style="left:808.55px;top:297px;width:1.2px;height:110px;background:#8a6128;"></div>
<div style="left:837.73px;top:297px;width:1.9px;height:110px;background:#6e4c1d;"></div>
<div style="left:867.61px;top:297px;width:1.2px;height:110px;background:#8a6128;"></div>
<div style="left:896.79px;top:297px;width:1.9px;height:110px;background:#6e4c1d;"></div>
<div style="left:926.67px;top:297px;width:1.2px;height:110px;background:#8a6128;"></div>
<div style="left:955.85px;top:297px;width:1.9px;height:110px;background:#6e4c1d;"></div>
<div style="left:985.73px;top:297px;width:1.2px;height:110px;background:#8a6128;"></div>
<div style="left:1014.91px;top:297px;width:1.9px;height:110px;background:#6e4c1d;"></div>
<div style="left:1044.79px;top:297px;width:1.2px;height:110px;background:#8a6128;"></div>
<div style="left:1073.97px;top:297px;width:1.9px;height:110px;background:#6e4c1d;"></div>
<div style="left:1103.85px;top:297px;width:1.2px;height:110px;background:#8a6128;"></div>
<div style="left:1133.03px;top:297px;width:1.9px;height:110px;background:#6e4c1d;"></div>
<div style="left:1162.91px;top:297px;width:1.2px;height:110px;background:#8a6128;"></div>
<div style="left:1192.09px;top:297px;width:1.9px;height:110px;background:#6e4c1d;"></div>
<div style="left:1221.97px;top:297px;width:1.2px;height:110px;background:#8a6128;"></div>
<div style="left:1251.15px;top:297px;width:1.9px;height:110px;background:#6e4c1d;"></div>
<div style="left:1281.03px;top:297px;width:1.2px;height:110px;background:#8a6128;"></div>
<div style="left:1310.21px;top:297px;width:1.9px;height:110px;background:#6e4c1d;"></div>
<div style="left:1340.09px;top:297px;width:1.2px;height:110px;background:#8a6128;"></div>
<div style="left:1369.27px;top:297px;width:1.9px;height:110px;background:#6e4c1d;"></div>
<div style="left:1399.15px;top:297px;width:1.2px;height:110px;background:#8a6128;"></div>
<div style="left:1428.33px;top:297px;width:1.9px;height:110px;background:#6e4c1d;"></div>
<div style="left:1458.21px;top:297px;width:1.2px;height:110px;background:#8a6128;"></div>
<div style="left:1487.39px;top:297px;width:1.9px;height:110px;background:#6e4c1d;"></div>
<div style="left:306.14px;top:402px;width:2.0px;height:5px;background:#1a1a1a;"></div>
<div style="left:778.62px;top:402px;width:2.0px;height:5px;background:#1a1a1a;"></div>
<div style="left:1251.1px;top:402px;width:2.0px;height:5px;background:#1a1a1a;"></div>
<svg style="position:absolute;left:71.5px;top:297px;" width="1417" height="110" viewBox="0 0 1417 110"><g fill="#111"><rect x="0.8" y="80.3" width="2" height="1.7"/><rect x="4.3" y="58.2" width="3" height="1.7"/><rect x="7.2" y="56.3" width="2" height="1.7"/><rect x="11.5" y="53.4" width="2" height="1.7"/><rect x="13.6" y="45.4" width="2" height="1.7"/><rect x="18.4" y="61.3" width="2" height="1.7"/><rect x="21.5" y="39.2" width="2" height="1.7"/><rect x="24.7" y="37.4" width="2" height="1.7"/><rect x="30.4" y="34.4" width="2.5" height="1.7"/><rect x="33.4" y="26.4" width="2" height="1.7"/><rect x="35.9" y="80.3" width="2" height="1.7"/><rect x="40.5" y="58.2" width="2" height="1.7"/><rect x="44.4" y="56.5" width="2" height="1.7"/><rect x="46.8" y="53.4" width="2" height="1.7"/><rect x="52.3" y="45.4" width="2.5" height="1.7"/><rect x="55.5" y="39.2" width="2.5" height="1.7"/><rect x="59.5" y="88.1" width="3" height="1.7"/><rect x="63.4" y="58.2" width="2.5" height="1.7"/><rect x="65.7" y="53.4" width="2" height="1.7"/><rect x="70.8" y="47.1" width="3" height="1.7"/><rect x="73.8" y="45.4" width="2" height="1.7"/><rect x="76.7" y="39.2" width="2" height="1.7"/><rect x="79.9" y="69.2" width="2" height="1.7"/><rect x="84.6" y="39.2" width="2" height="1.7"/><rect x="88.6" y="34.4" width="2" height="1.7"/><rect x="92.0" y="28.1" width="2.5" height="1.7"/><rect x="95.8" y="26.4" width="2" height="1.7"/><rect x="98.9" y="20.2" width="2" height="1.7"/><rect x="103.5" y="88.1" width="3" height="1.7"/><rect x="103.9" y="56.5" width="3" height="1.7"/><rect x="106.8" y="53.4" width="2" height="1.7"/><rect x="110.7" y="45.4" width="2.5" height="1.7"/><rect x="114.9" y="39.2" width="3" height="1.7"/><rect x="120.52" y="66.0" width="2" height="1.7"/><rect x="124.02" y="53.2" width="2" height="1.7"/><rect x="127.52" y="48.2" width="2" height="1.7"/><rect x="131.02" y="42.2" width="2.5" height="1.7"/><rect x="134.52" y="38.2" width="2" height="1.7"/><rect x="138.52" y="32.2" width="2" height="1.7"/><rect x="142.02" y="49.2" width="2" height="1.7"/><rect x="145.52" y="34.2" width="2" height="1.7"/><rect x="149.02" y="28.2" width="2" height="1.7"/><rect x="152.52" y="22.2" width="2" height="1.7"/><rect x="156.02" y="76.2" width="2" height="1.7"/><rect x="159.52" y="54.2" width="2.5" height="1.7"/><rect x="163.02" y="48.2" width="2" height="1.7"/><rect x="166.52" y="43.2" width="2" height="1.7"/><rect x="170.02" y="37.2" width="2" height="1.7"/><rect x="173.52" y="31.2" width="2" height="1.7"/><rect x="178.52" y="82.2" width="2" height="1.7"/><rect x="182.02" y="59.2" width="2" height="1.7"/><rect x="185.52" y="51.2" width="2" height="1.7"/><rect x="189.02" y="47.2" width="2" height="1.7"/><rect x="192.52" y="41.2" width="2" height="1.7"/><rect x="196.52" y="53.2" width="2" height="1.7"/><rect x="200.02" y="35.2" width="2" height="1.7"/><rect x="203.52" y="32.2" width="2" height="1.7"/><rect x="207.02" y="25.2" width="2.5" height="1.7"/><rect x="210.52" y="20.2" width="2" height="1.7"/><rect x="214.52" y="88.1" width="2.5" height="1.7"/><rect x="218.02" y="56.2" width="2" height="1.7"/><rect x="221.52" y="50.2" width="2" height="1.7"/><rect x="225.52" y="44.2" width="2" height="1.7"/><rect x="229.52" y="38.2" width="2" height="1.7"/><rect x="233.02" y="32.2" width="2" height="1.7"/><rect x="237.04" y="80.3" width="2" height="1.7"/><rect x="240.54" y="58.2" width="3" height="1.7"/><rect x="243.44" y="56.3" width="2" height="1.7"/><rect x="247.74" y="53.4" width="2" height="1.7"/><rect x="249.84" y="45.4" width="2" height="1.7"/><rect x="254.64" y="61.3" width="2" height="1.7"/><rect x="257.74" y="39.2" width="2" height="1.7"/><rect x="260.94" y="37.4" width="2" height="1.7"/><rect x="266.64" y="34.4" width="2.5" height="1.7"/><rect x="269.64" y="26.4" width="2" height="1.7"/><rect x="272.14" y="80.3" width="2" height="1.7"/><rect x="276.74" y="58.2" width="2" height="1.7"/><rect x="280.64" y="56.5" width="2" height="1.7"/><rect x="283.04" y="53.4" width="2" height="1.7"/><rect x="288.54" y="45.4" width="2.5" height="1.7"/><rect x="291.74" y="39.2" width="2.5" height="1.7"/><rect x="295.74" y="88.1" width="3" height="1.7"/><rect x="299.64" y="58.2" width="2.5" height="1.7"/><rect x="301.94" y="53.4" width="2" height="1.7"/><rect x="307.04" y="47.1" width="3" height="1.7"/><rect x="310.04" y="45.4" width="2" height="1.7"/><rect x="312.94" y="39.2" width="2" height="1.7"/><rect x="316.14" y="69.2" width="2" height="1.7"/><rect x="320.84" y="39.2" width="2" height="1.7"/><rect x="324.84" y="34.4" width="2" height="1.7"/><rect x="328.24" y="28.1" width="2.5" height="1.7"/><rect x="332.04" y="26.4" width="2" height="1.7"/><rect x="335.14" y="20.2" width="2" height="1.7"/><rect x="339.74" y="88.1" width="3" height="1.7"/><rect x="340.14" y="56.5" width="3" height="1.7"/><rect x="343.04" y="53.4" width="2" height="1.7"/><rect x="346.94" y="45.4" width="2.5" height="1.7"/><rect x="351.14" y="39.2" width="3" height="1.7"/><rect x="356.76" y="66.0" width="2" height="1.7"/><rect x="360.26" y="53.2" width="2" height="1.7"/><rect x="363.76" y="48.2" width="2" height="1.7"/><rect x="367.26" y="42.2" width="2.5" height="1.7"/><rect x="370.76" y="38.2" width="2" height="1.7"/><rect x="374.76" y="32.2" width="2" height="1.7"/><rect x="378.26" y="49.2" width="2" height="1.7"/><rect x="381.76" y="34.2" width="2" height="1.7"/><rect x="385.26" y="28.2" width="2" height="1.7"/><rect x="388.76" y="22.2" width="2" height="1.7"/><rect x="392.26" y="76.2" width="2" height="1.7"/><rect x="395.76" y="54.2" width="2.5" height="1.7"/><rect x="399.26" y="48.2" width="2" height="1.7"/><rect x="402.76" y="43.2" width="2" height="1.7"/><rect x="406.26" y="37.2" width="2" height="1.7"/><rect x="409.76" y="31.2" width="2" height="1.7"/><rect x="414.76" y="82.2" width="2" height="1.7"/><rect x="418.26" y="59.2" width="2" height="1.7"/><rect x="421.76" y="51.2" width="2" height="1.7"/><rect x="425.26" y="47.2" width="2" height="1.7"/><rect x="428.76" y="41.2" width="2" height="1.7"/><rect x="432.76" y="53.2" width="2" height="1.7"/><rect x="436.26" y="35.2" width="2" height="1.7"/><rect x="439.76" y="32.2" width="2" height="1.7"/><rect x="443.26" y="25.2" width="2.5" height="1.7"/><rect x="446.76" y="20.2" width="2" height="1.7"/><rect x="450.76" y="88.1" width="2.5" height="1.7"/><rect x="454.26" y="56.2" width="2" height="1.7"/><rect x="457.76" y="50.2" width="2" height="1.7"/><rect x="461.76" y="44.2" width="2" height="1.7"/><rect x="465.76" y="38.2" width="2" height="1.7"/><rect x="469.26" y="32.2" width="2" height="1.7"/><rect x="473.28" y="80.3" width="2" height="1.7"/><rect x="476.78" y="58.2" width="3" height="1.7"/><rect x="479.68" y="56.3" width="2" height="1.7"/><rect x="483.98" y="53.4" width="2" height="1.7"/><rect x="486.08" y="45.4" width="2" height="1.7"/><rect x="490.88" y="61.3" width="2" height="1.7"/><rect x="493.98" y="39.2" width="2" height="1.7"/><rect x="497.18" y="37.4" width="2" height="1.7"/><rect x="502.88" y="34.4" width="2.5" height="1.7"/><rect x="505.88" y="26.4" width="2" height="1.7"/><rect x="508.38" y="80.3" width="2" height="1.7"/><rect x="512.98" y="58.2" width="2" height="1.7"/><rect x="516.88" y="56.5" width="2" height="1.7"/><rect x="519.28" y="53.4" width="2" height="1.7"/><rect x="524.78" y="45.4" width="2.5" height="1.7"/><rect x="527.98" y="39.2" width="2.5" height="1.7"/><rect x="531.98" y="88.1" width="3" height="1.7"/><rect x="535.88" y="58.2" width="2.5" height="1.7"/><rect x="538.18" y="53.4" width="2" height="1.7"/><rect x="543.28" y="47.1" width="3" height="1.7"/><rect x="546.28" y="45.4" width="2" height="1.7"/><rect x="549.18" y="39.2" width="2" height="1.7"/><rect x="552.38" y="69.2" width="2" height="1.7"/><rect x="557.08" y="39.2" width="2" height="1.7"/><rect x="561.08" y="34.4" width="2" height="1.7"/><rect x="564.48" y="28.1" width="2.5" height="1.7"/><rect x="568.28" y="26.4" width="2" height="1.7"/><rect x="571.38" y="20.2" width="2" height="1.7"/><rect x="575.98" y="88.1" width="3" height="1.7"/><rect x="576.38" y="56.5" width="3" height="1.7"/><rect x="579.28" y="53.4" width="2" height="1.7"/><rect x="583.18" y="45.4" width="2.5" height="1.7"/><rect x="587.38" y="39.2" width="3" height="1.7"/><rect x="593.0" y="66.0" width="2" height="1.7"/><rect x="596.5" y="53.2" width="2" height="1.7"/><rect x="600.0" y="48.2" width="2" height="1.7"/><rect x="603.5" y="42.2" width="2.5" height="1.7"/><rect x="607.0" y="38.2" width="2" height="1.7"/><rect x="611.0" y="32.2" width="2" height="1.7"/><rect x="614.5" y="49.2" width="2" height="1.7"/><rect x="618.0" y="34.2" width="2" height="1.7"/><rect x="621.5" y="28.2" width="2" height="1.7"/><rect x="625.0" y="22.2" width="2" height="1.7"/><rect x="628.5" y="76.2" width="2" height="1.7"/><rect x="632.0" y="54.2" width="2.5" height="1.7"/><rect x="635.5" y="48.2" width="2" height="1.7"/><rect x="639.0" y="43.2" width="2" height="1.7"/><rect x="642.5" y="37.2" width="2" height="1.7"/><rect x="646.0" y="31.2" width="2" height="1.7"/><rect x="651.0" y="82.2" width="2" height="1.7"/><rect x="654.5" y="59.2" width="2" height="1.7"/><rect x="658.0" y="51.2" width="2" height="1.7"/><rect x="661.5" y="47.2" width="2" height="1.7"/><rect x="665.0" y="41.2" width="2" height="1.7"/><rect x="669.0" y="53.2" width="2" height="1.7"/><rect x="672.5" y="35.2" width="2" height="1.7"/><rect x="676.0" y="32.2" width="2" height="1.7"/><rect x="679.5" y="25.2" width="2.5" height="1.7"/><rect x="683.0" y="20.2" width="2" height="1.7"/><rect x="687.0" y="88.1" width="2.5" height="1.7"/><rect x="690.5" y="56.2" width="2" height="1.7"/><rect x="694.0" y="50.2" width="2" height="1.7"/><rect x="698.0" y="44.2" width="2" height="1.7"/><rect x="702.0" y="38.2" width="2" height="1.7"/><rect x="705.5" y="32.2" width="2" height="1.7"/><rect x="709.52" y="80.3" width="2" height="1.7"/><rect x="713.02" y="58.2" width="3" height="1.7"/><rect x="715.92" y="56.3" width="2" height="1.7"/><rect x="720.22" y="53.4" width="2" height="1.7"/><rect x="722.32" y="45.4" width="2" height="1.7"/><rect x="727.12" y="61.3" width="2" height="1.7"/><rect x="730.22" y="39.2" width="2" height="1.7"/><rect x="733.42" y="37.4" width="2" height="1.7"/><rect x="739.12" y="34.4" width="2.5" height="1.7"/><rect x="742.12" y="26.4" width="2" height="1.7"/><rect x="744.62" y="80.3" width="2" height="1.7"/><rect x="749.22" y="58.2" width="2" height="1.7"/><rect x="753.12" y="56.5" width="2" height="1.7"/><rect x="755.52" y="53.4" width="2" height="1.7"/><rect x="761.02" y="45.4" width="2.5" height="1.7"/><rect x="764.22" y="39.2" width="2.5" height="1.7"/><rect x="768.22" y="88.1" width="3" height="1.7"/><rect x="772.12" y="58.2" width="2.5" height="1.7"/><rect x="774.42" y="53.4" width="2" height="1.7"/><rect x="779.52" y="47.1" width="3" height="1.7"/><rect x="782.52" y="45.4" width="2" height="1.7"/><rect x="785.42" y="39.2" width="2" height="1.7"/><rect x="788.62" y="69.2" width="2" height="1.7"/><rect x="793.32" y="39.2" width="2" height="1.7"/><rect x="797.32" y="34.4" width="2" height="1.7"/><rect x="800.72" y="28.1" width="2.5" height="1.7"/><rect x="804.52" y="26.4" width="2" height="1.7"/><rect x="807.62" y="20.2" width="2" height="1.7"/><rect x="812.22" y="88.1" width="3" height="1.7"/><rect x="812.62" y="56.5" width="3" height="1.7"/><rect x="815.52" y="53.4" width="2" height="1.7"/><rect x="819.42" y="45.4" width="2.5" height="1.7"/><rect x="823.62" y="39.2" width="3" height="1.7"/><rect x="829.24" y="66.0" width="2" height="1.7"/><rect x="832.74" y="53.2" width="2" height="1.7"/><rect x="836.24" y="48.2" width="2" height="1.7"/><rect x="839.74" y="42.2" width="2.5" height="1.7"/><rect x="843.24" y="38.2" width="2" height="1.7"/><rect x="847.24" y="32.2" width="2" height="1.7"/><rect x="850.74" y="49.2" width="2" height="1.7"/><rect x="854.24" y="34.2" width="2" height="1.7"/><rect x="857.74" y="28.2" width="2" height="1.7"/><rect x="861.24" y="22.2" width="2" height="1.7"/><rect x="864.74" y="76.2" width="2" height="1.7"/><rect x="868.24" y="54.2" width="2.5" height="1.7"/><rect x="871.74" y="48.2" width="2" height="1.7"/><rect x="875.24" y="43.2" width="2" height="1.7"/><rect x="878.74" y="37.2" width="2" height="1.7"/><rect x="882.24" y="31.2" width="2" height="1.7"/><rect x="887.24" y="82.2" width="2" height="1.7"/><rect x="890.74" y="59.2" width="2" height="1.7"/><rect x="894.24" y="51.2" width="2" height="1.7"/><rect x="897.74" y="47.2" width="2" height="1.7"/><rect x="901.24" y="41.2" width="2" height="1.7"/><rect x="905.24" y="53.2" width="2" height="1.7"/><rect x="908.74" y="35.2" width="2" height="1.7"/><rect x="912.24" y="32.2" width="2" height="1.7"/><rect x="915.74" y="25.2" width="2.5" height="1.7"/><rect x="919.24" y="20.2" width="2" height="1.7"/><rect x="923.24" y="88.1" width="2.5" height="1.7"/><rect x="926.74" y="56.2" width="2" height="1.7"/><rect x="930.24" y="50.2" width="2" height="1.7"/><rect x="934.24" y="44.2" width="2" height="1.7"/><rect x="938.24" y="38.2" width="2" height="1.7"/><rect x="941.74" y="32.2" width="2" height="1.7"/><rect x="945.76" y="80.3" width="2" height="1.7"/><rect x="949.26" y="58.2" width="3" height="1.7"/><rect x="952.16" y="56.3" width="2" height="1.7"/><rect x="956.46" y="53.4" width="2" height="1.7"/><rect x="958.56" y="45.4" width="2" height="1.7"/><rect x="963.36" y="61.3" width="2" height="1.7"/><rect x="966.46" y="39.2" width="2" height="1.7"/><rect x="969.66" y="37.4" width="2" height="1.7"/><rect x="975.36" y="34.4" width="2.5" height="1.7"/><rect x="978.36" y="26.4" width="2" height="1.7"/><rect x="980.86" y="80.3" width="2" height="1.7"/><rect x="985.46" y="58.2" width="2" height="1.7"/><rect x="989.36" y="56.5" width="2" height="1.7"/><rect x="991.76" y="53.4" width="2" height="1.7"/><rect x="997.26" y="45.4" width="2.5" height="1.7"/><rect x="1000.46" y="39.2" width="2.5" height="1.7"/><rect x="1004.46" y="88.1" width="3" height="1.7"/><rect x="1008.36" y="58.2" width="2.5" height="1.7"/><rect x="1010.66" y="53.4" width="2" height="1.7"/><rect x="1015.76" y="47.1" width="3" height="1.7"/><rect x="1018.76" y="45.4" width="2" height="1.7"/><rect x="1021.66" y="39.2" width="2" height="1.7"/><rect x="1024.86" y="69.2" width="2" height="1.7"/><rect x="1029.56" y="39.2" width="2" height="1.7"/><rect x="1033.56" y="34.4" width="2" height="1.7"/><rect x="1036.96" y="28.1" width="2.5" height="1.7"/><rect x="1040.76" y="26.4" width="2" height="1.7"/><rect x="1043.86" y="20.2" width="2" height="1.7"/><rect x="1048.46" y="88.1" width="3" height="1.7"/><rect x="1048.86" y="56.5" width="3" height="1.7"/><rect x="1051.76" y="53.4" width="2" height="1.7"/><rect x="1055.66" y="45.4" width="2.5" height="1.7"/><rect x="1059.86" y="39.2" width="3" height="1.7"/><rect x="1065.48" y="66.0" width="2" height="1.7"/><rect x="1068.98" y="53.2" width="2" height="1.7"/><rect x="1072.48" y="48.2" width="2" height="1.7"/><rect x="1075.98" y="42.2" width="2.5" height="1.7"/><rect x="1079.48" y="38.2" width="2" height="1.7"/><rect x="1083.48" y="32.2" width="2" height="1.7"/><rect x="1086.98" y="49.2" width="2" height="1.7"/><rect x="1090.48" y="34.2" width="2" height="1.7"/><rect x="1093.98" y="28.2" width="2" height="1.7"/><rect x="1097.48" y="22.2" width="2" height="1.7"/><rect x="1100.98" y="76.2" width="2" height="1.7"/><rect x="1104.48" y="54.2" width="2.5" height="1.7"/><rect x="1107.98" y="48.2" width="2" height="1.7"/><rect x="1111.48" y="43.2" width="2" height="1.7"/><rect x="1114.98" y="37.2" width="2" height="1.7"/><rect x="1118.48" y="31.2" width="2" height="1.7"/><rect x="1123.48" y="82.2" width="2" height="1.7"/><rect x="1126.98" y="59.2" width="2" height="1.7"/><rect x="1130.48" y="51.2" width="2" height="1.7"/><rect x="1133.98" y="47.2" width="2" height="1.7"/><rect x="1137.48" y="41.2" width="2" height="1.7"/><rect x="1141.48" y="53.2" width="2" height="1.7"/><rect x="1144.98" y="35.2" width="2" height="1.7"/><rect x="1148.48" y="32.2" width="2" height="1.7"/><rect x="1151.98" y="25.2" width="2.5" height="1.7"/><rect x="1155.48" y="20.2" width="2" height="1.7"/><rect x="1159.48" y="88.1" width="2.5" height="1.7"/><rect x="1162.98" y="56.2" width="2" height="1.7"/><rect x="1166.48" y="50.2" width="2" height="1.7"/><rect x="1170.48" y="44.2" width="2" height="1.7"/><rect x="1174.48" y="38.2" width="2" height="1.7"/><rect x="1177.98" y="32.2" width="2" height="1.7"/><rect x="1182.0" y="80.3" width="2" height="1.7"/><rect x="1185.5" y="58.2" width="3" height="1.7"/><rect x="1188.4" y="56.3" width="2" height="1.7"/><rect x="1192.7" y="53.4" width="2" height="1.7"/><rect x="1194.8" y="45.4" width="2" height="1.7"/><rect x="1199.6" y="61.3" width="2" height="1.7"/><rect x="1202.7" y="39.2" width="2" height="1.7"/><rect x="1205.9" y="37.4" width="2" height="1.7"/><rect x="1211.6" y="34.4" width="2.5" height="1.7"/><rect x="1214.6" y="26.4" width="2" height="1.7"/><rect x="1217.1" y="80.3" width="2" height="1.7"/><rect x="1221.7" y="58.2" width="2" height="1.7"/><rect x="1225.6" y="56.5" width="2" height="1.7"/><rect x="1228.0" y="53.4" width="2" height="1.7"/><rect x="1233.5" y="45.4" width="2.5" height="1.7"/><rect x="1236.7" y="39.2" width="2.5" height="1.7"/><rect x="1240.7" y="88.1" width="3" height="1.7"/><rect x="1244.6" y="58.2" width="2.5" height="1.7"/><rect x="1246.9" y="53.4" width="2" height="1.7"/><rect x="1252.0" y="47.1" width="3" height="1.7"/><rect x="1255.0" y="45.4" width="2" height="1.7"/><rect x="1257.9" y="39.2" width="2" height="1.7"/><rect x="1261.1" y="69.2" width="2" height="1.7"/><rect x="1265.8" y="39.2" width="2" height="1.7"/><rect x="1269.8" y="34.4" width="2" height="1.7"/><rect x="1273.2" y="28.1" width="2.5" height="1.7"/><rect x="1277.0" y="26.4" width="2" height="1.7"/><rect x="1280.1" y="20.2" width="2" height="1.7"/><rect x="1284.7" y="88.1" width="3" height="1.7"/><rect x="1285.1" y="56.5" width="3" height="1.7"/><rect x="1288.0" y="53.4" width="2" height="1.7"/><rect x="1291.9" y="45.4" width="2.5" height="1.7"/><rect x="1296.1" y="39.2" width="3" height="1.7"/><rect x="1301.72" y="66.0" width="2" height="1.7"/><rect x="1305.22" y="53.2" width="2" height="1.7"/><rect x="1308.72" y="48.2" width="2" height="1.7"/><rect x="1312.22" y="42.2" width="2.5" height="1.7"/><rect x="1315.72" y="38.2" width="2" height="1.7"/><rect x="1319.72" y="32.2" width="2" height="1.7"/><rect x="1323.22" y="49.2" width="2" height="1.7"/><rect x="1326.72" y="34.2" width="2" height="1.7"/><rect x="1330.22" y="28.2" width="2" height="1.7"/><rect x="1333.72" y="22.2" width="2" height="1.7"/><rect x="1337.22" y="76.2" width="2" height="1.7"/><rect x="1340.72" y="54.2" width="2.5" height="1.7"/><rect x="1344.22" y="48.2" width="2" height="1.7"/><rect x="1347.72" y="43.2" width="2" height="1.7"/><rect x="1351.22" y="37.2" width="2" height="1.7"/><rect x="1354.72" y="31.2" width="2" height="1.7"/><rect x="1359.72" y="82.2" width="2" height="1.7"/><rect x="1363.22" y="59.2" width="2" height="1.7"/><rect x="1366.72" y="51.2" width="2" height="1.7"/><rect x="1370.22" y="47.2" width="2" height="1.7"/><rect x="1373.72" y="41.2" width="2" height="1.7"/><rect x="1377.72" y="53.2" width="2" height="1.7"/><rect x="1381.22" y="35.2" width="2" height="1.7"/><rect x="1384.72" y="32.2" width="2" height="1.7"/><rect x="1388.22" y="25.2" width="2.5" height="1.7"/><rect x="1391.72" y="20.2" width="2" height="1.7"/><rect x="1395.72" y="88.1" width="2.5" height="1.7"/><rect x="1399.22" y="56.2" width="2" height="1.7"/><rect x="1402.72" y="50.2" width="2" height="1.7"/><rect x="1406.72" y="44.2" width="2" height="1.7"/><rect x="1410.72" y="38.2" width="2" height="1.7"/><rect x="1414.22" y="32.2" width="2" height="1.7"/></g></svg>
<div style="left:71.5px;top:410px;width:235.64px;height:27px;background:#95b1b6;"></div>
<div style="left:307.14px;top:410px;width:236.24px;height:27px;background:#a0bec3;"></div>
<div style="left:543.38px;top:410px;width:236.24px;height:27px;background:#979797;"></div>
<div style="left:779.62px;top:410px;width:236.24px;height:27px;background:#a4a4a4;"></div>
<div style="left:1015.86px;top:410px;width:236.24px;height:27px;background:#979797;"></div>
<div style="left:1252.1px;top:410px;width:236.24px;height:27px;background:#a4a4a4;"></div>
<div style="left:69.95px;top:410px;width:1.9px;height:27px;background:#586c6f;"></div>
<div style="left:99.83px;top:410px;width:1.2px;height:27px;background:#6d8588;"></div>
<div style="left:129.01px;top:410px;width:1.9px;height:27px;background:#586c6f;"></div>
<div style="left:158.89px;top:410px;width:1.2px;height:27px;background:#6d8588;"></div>
<div style="left:188.07px;top:410px;width:1.9px;height:27px;background:#586c6f;"></div>
<div style="left:217.95px;top:410px;width:1.2px;height:27px;background:#6d8588;"></div>
<div style="left:247.13px;top:410px;width:1.9px;height:27px;background:#586c6f;"></div>
<div style="left:277.01px;top:410px;width:1.2px;height:27px;background:#6d8588;"></div>
<div style="left:306.19px;top:410px;width:1.9px;height:27px;background:#586c6f;"></div>
<div style="left:336.07px;top:410px;width:1.2px;height:27px;background:#6d8588;"></div>
<div style="left:365.25px;top:410px;width:1.9px;height:27px;background:#586c6f;"></div>
<div style="left:395.13px;top:410px;width:1.2px;height:27px;background:#6d8588;"></div>
<div style="left:424.31px;top:410px;width:1.9px;height:27px;background:#586c6f;"></div>
<div style="left:454.19px;top:410px;width:1.2px;height:27px;background:#6d8588;"></div>
<div style="left:483.37px;top:410px;width:1.9px;height:27px;background:#586c6f;"></div>
<div style="left:513.25px;top:410px;width:1.2px;height:27px;background:#6d8588;"></div>
<div style="left:542.43px;top:410px;width:1.9px;height:27px;background:#4f4f4f;"></div>
<div style="left:572.31px;top:410px;width:1.2px;height:27px;background:#646464;"></div>
<div style="left:601.49px;top:410px;width:1.9px;height:27px;background:#4f4f4f;"></div>
<div style="left:631.37px;top:410px;width:1.2px;height:27px;background:#646464;"></div>
<div style="left:660.55px;top:410px;width:1.9px;height:27px;background:#4f4f4f;"></div>
<div style="left:690.43px;top:410px;width:1.2px;height:27px;background:#646464;"></div>
<div style="left:719.61px;top:410px;width:1.9px;height:27px;background:#4f4f4f;"></div>
<div style="left:749.49px;top:410px;width:1.2px;height:27px;background:#646464;"></div>
<div style="left:778.67px;top:410px;width:1.9px;height:27px;background:#4f4f4f;"></div>
<div style="left:808.55px;top:410px;width:1.2px;height:27px;background:#646464;"></div>
<div style="left:837.73px;top:410px;width:1.9px;height:27px;background:#4f4f4f;"></div>
<div style="left:867.61px;top:410px;width:1.2px;height:27px;background:#646464;"></div>
<div style="left:896.79px;top:410px;width:1.9px;height:27px;background:#4f4f4f;"></div>
<div style="left:926.67px;top:410px;width:1.2px;height:27px;background:#646464;"></div>
<div style="left:955.85px;top:410px;width:1.9px;height:27px;background:#4f4f4f;"></div>
<div style="left:985.73px;top:410px;width:1.2px;height:27px;background:#646464;"></div>
<div style="left:1014.91px;top:410px;width:1.9px;height:27px;background:#4f4f4f;"></div>
<div style="left:1044.79px;top:410px;width:1.2px;height:27px;background:#646464;"></div>
<div style="left:1073.97px;top:410px;width:1.9px;height:27px;background:#4f4f4f;"></div>
<div style="left:1103.85px;top:410px;width:1.2px;height:27px;background:#646464;"></div>
<div style="left:1133.03px;top:410px;width:1.9px;height:27px;background:#4f4f4f;"></div>
<div style="left:1162.91px;top:410px;width:1.2px;height:27px;background:#646464;"></div>
<div style="left:1192.09px;top:410px;width:1.9px;height:27px;background:#4f4f4f;"></div>
<div style="left:1221.97px;top:410px;width:1.2px;height:27px;background:#646464;"></div>
<div style="left:1251.15px;top:410px;width:1.9px;height:27px;background:#4f4f4f;"></div>
<div style="left:1281.03px;top:410px;width:1.2px;height:27px;background:#646464;"></div>
<div style="left:1310.21px;top:410px;width:1.9px;height:27px;background:#4f4f4f;"></div>
<div style="left:1340.09px;top:410px;width:1.2px;height:27px;background:#646464;"></div>
<div style="left:1369.27px;top:410px;width:1.9px;height:27px;background:#4f4f4f;"></div>
<div style="left:1399.15px;top:410px;width:1.2px;height:27px;background:#646464;"></div>
<div style="left:1428.33px;top:410px;width:1.9px;height:27px;background:#4f4f4f;"></div>
<div style="left:1458.21px;top:410px;width:1.2px;height:27px;background:#646464;"></div>
<div style="left:1487.39px;top:410px;width:1.9px;height:27px;background:#4f4f4f;"></div>
<div style="left:71.5px;top:410px;width:472.0px;height:27px;background:#bdf531;border-top:1px solid #7d9e20;border-bottom:1px solid #7d9e20;"></div>
<div class="t" style="left:75.5px;top:416.79px;width:600px;font-size:14.42px;line-height:14.42px;color:#22280c;font-weight:400;text-align:left;transform:scaleX(1.13);transform-origin:left 50%;">2-MIDI 2</div>
<div style="left:543.5px;top:410px;width:472.5px;height:27px;background:#bdf531;border-top:1px solid #7d9e20;border-bottom:1px solid #7d9e20;border-left:1.5px solid #6a8a1a;"></div>
<div class="t" style="left:547.5px;top:416.79px;width:600px;font-size:14.42px;line-height:14.42px;color:#22280c;font-weight:400;text-align:left;transform:scaleX(1.13);transform-origin:left 50%;">2-MIDI 2</div>
<div style="left:1016px;top:410px;width:472.5px;height:27px;background:#bdf531;border-top:1px solid #7d9e20;border-bottom:1px solid #7d9e20;border-left:1.5px solid #6a8a1a;"></div>
<div class="t" style="left:1020px;top:416.79px;width:600px;font-size:14.42px;line-height:14.42px;color:#22280c;font-weight:400;text-align:left;transform:scaleX(1.13);transform-origin:left 50%;">2-MIDI 2</div>
<div style="left:306.14px;top:411px;width:2.0px;height:5px;background:#1a1a1a;"></div>
<div style="left:306.14px;top:431px;width:2.0px;height:5px;background:#1a1a1a;"></div>
<div style="left:778.62px;top:411px;width:2.0px;height:5px;background:#1a1a1a;"></div>
<div style="left:778.62px;top:431px;width:2.0px;height:5px;background:#1a1a1a;"></div>
<div style="left:1251.1px;top:411px;width:2.0px;height:5px;background:#1a1a1a;"></div>
<div style="left:1251.1px;top:431px;width:2.0px;height:5px;background:#1a1a1a;"></div>
<div style="left:71.5px;top:440px;width:235.64px;height:27px;background:#95b1b6;"></div>
<div style="left:307.14px;top:440px;width:236.24px;height:27px;background:#a0bec3;"></div>
<div style="left:543.38px;top:440px;width:236.24px;height:27px;background:#979797;"></div>
<div style="left:779.62px;top:440px;width:236.24px;height:27px;background:#a4a4a4;"></div>
<div style="left:1015.86px;top:440px;width:236.24px;height:27px;background:#979797;"></div>
<div style="left:1252.1px;top:440px;width:236.24px;height:27px;background:#a4a4a4;"></div>
<div style="left:69.95px;top:440px;width:1.9px;height:27px;background:#586c6f;"></div>
<div style="left:99.83px;top:440px;width:1.2px;height:27px;background:#6d8588;"></div>
<div style="left:129.01px;top:440px;width:1.9px;height:27px;background:#586c6f;"></div>
<div style="left:158.89px;top:440px;width:1.2px;height:27px;background:#6d8588;"></div>
<div style="left:188.07px;top:440px;width:1.9px;height:27px;background:#586c6f;"></div>
<div style="left:217.95px;top:440px;width:1.2px;height:27px;background:#6d8588;"></div>
<div style="left:247.13px;top:440px;width:1.9px;height:27px;background:#586c6f;"></div>
<div style="left:277.01px;top:440px;width:1.2px;height:27px;background:#6d8588;"></div>
<div style="left:306.19px;top:440px;width:1.9px;height:27px;background:#586c6f;"></div>
<div style="left:336.07px;top:440px;width:1.2px;height:27px;background:#6d8588;"></div>
<div style="left:365.25px;top:440px;width:1.9px;height:27px;background:#586c6f;"></div>
<div style="left:395.13px;top:440px;width:1.2px;height:27px;background:#6d8588;"></div>
<div style="left:424.31px;top:440px;width:1.9px;height:27px;background:#586c6f;"></div>
<div style="left:454.19px;top:440px;width:1.2px;height:27px;background:#6d8588;"></div>
<div style="left:483.37px;top:440px;width:1.9px;height:27px;background:#586c6f;"></div>
<div style="left:513.25px;top:440px;width:1.2px;height:27px;background:#6d8588;"></div>
<div style="left:542.43px;top:440px;width:1.9px;height:27px;background:#4f4f4f;"></div>
<div style="left:572.31px;top:440px;width:1.2px;height:27px;background:#646464;"></div>
<div style="left:601.49px;top:440px;width:1.9px;height:27px;background:#4f4f4f;"></div>
<div style="left:631.37px;top:440px;width:1.2px;height:27px;background:#646464;"></div>
<div style="left:660.55px;top:440px;width:1.9px;height:27px;background:#4f4f4f;"></div>
<div style="left:690.43px;top:440px;width:1.2px;height:27px;background:#646464;"></div>
<div style="left:719.61px;top:440px;width:1.9px;height:27px;background:#4f4f4f;"></div>
<div style="left:749.49px;top:440px;width:1.2px;height:27px;background:#646464;"></div>
<div style="left:778.67px;top:440px;width:1.9px;height:27px;background:#4f4f4f;"></div>
<div style="left:808.55px;top:440px;width:1.2px;height:27px;background:#646464;"></div>
<div style="left:837.73px;top:440px;width:1.9px;height:27px;background:#4f4f4f;"></div>
<div style="left:867.61px;top:440px;width:1.2px;height:27px;background:#646464;"></div>
<div style="left:896.79px;top:440px;width:1.9px;height:27px;background:#4f4f4f;"></div>
<div style="left:926.67px;top:440px;width:1.2px;height:27px;background:#646464;"></div>
<div style="left:955.85px;top:440px;width:1.9px;height:27px;background:#4f4f4f;"></div>
<div style="left:985.73px;top:440px;width:1.2px;height:27px;background:#646464;"></div>
<div style="left:1014.91px;top:440px;width:1.9px;height:27px;background:#4f4f4f;"></div>
<div style="left:1044.79px;top:440px;width:1.2px;height:27px;background:#646464;"></div>
<div style="left:1073.97px;top:440px;width:1.9px;height:27px;background:#4f4f4f;"></div>
<div style="left:1103.85px;top:440px;width:1.2px;height:27px;background:#646464;"></div>
<div style="left:1133.03px;top:440px;width:1.9px;height:27px;background:#4f4f4f;"></div>
<div style="left:1162.91px;top:440px;width:1.2px;height:27px;background:#646464;"></div>
<div style="left:1192.09px;top:440px;width:1.9px;height:27px;background:#4f4f4f;"></div>
<div style="left:1221.97px;top:440px;width:1.2px;height:27px;background:#646464;"></div>
<div style="left:1251.15px;top:440px;width:1.9px;height:27px;background:#4f4f4f;"></div>
<div style="left:1281.03px;top:440px;width:1.2px;height:27px;background:#646464;"></div>
<div style="left:1310.21px;top:440px;width:1.9px;height:27px;background:#4f4f4f;"></div>
<div style="left:1340.09px;top:440px;width:1.2px;height:27px;background:#646464;"></div>
<div style="left:1369.27px;top:440px;width:1.9px;height:27px;background:#4f4f4f;"></div>
<div style="left:1399.15px;top:440px;width:1.2px;height:27px;background:#646464;"></div>
<div style="left:1428.33px;top:440px;width:1.9px;height:27px;background:#4f4f4f;"></div>
<div style="left:1458.21px;top:440px;width:1.2px;height:27px;background:#646464;"></div>
<div style="left:1487.39px;top:440px;width:1.9px;height:27px;background:#4f4f4f;"></div>
<div style="left:543.5px;top:440px;width:472.5px;height:27px;background:#0cfb3c;border-top:1px solid #08a82a;border-bottom:1px solid #08a82a;border-left:1.5px solid #06801e;"></div>
<div style="left:1016px;top:440px;width:472.5px;height:27px;background:#0cfb3c;border-top:1px solid #08a82a;border-bottom:1px solid #08a82a;border-left:1.5px solid #06801e;"></div>
<div style="left:778.62px;top:441px;width:2.0px;height:5px;background:#1a1a1a;"></div>
<div style="left:778.62px;top:461px;width:2.0px;height:5px;background:#1a1a1a;"></div>
<div style="left:1251.1px;top:441px;width:2.0px;height:5px;background:#1a1a1a;"></div>
<div style="left:1251.1px;top:461px;width:2.0px;height:5px;background:#1a1a1a;"></div>
<div style="left:71.5px;top:470px;width:235.64px;height:27px;background:#95b1b6;"></div>
<div style="left:307.14px;top:470px;width:236.24px;height:27px;background:#a0bec3;"></div>
<div style="left:543.38px;top:470px;width:236.24px;height:27px;background:#979797;"></div>
<div style="left:779.62px;top:470px;width:236.24px;height:27px;background:#a4a4a4;"></div>
<div style="left:1015.86px;top:470px;width:236.24px;height:27px;background:#979797;"></div>
<div style="left:1252.1px;top:470px;width:236.24px;height:27px;background:#a4a4a4;"></div>
<div style="left:69.95px;top:470px;width:1.9px;height:27px;background:#586c6f;"></div>
<div style="left:99.83px;top:470px;width:1.2px;height:27px;background:#6d8588;"></div>
<div style="left:129.01px;top:470px;width:1.9px;height:27px;background:#586c6f;"></div>
<div style="left:158.89px;top:470px;width:1.2px;height:27px;background:#6d8588;"></div>
<div style="left:188.07px;top:470px;width:1.9px;height:27px;background:#586c6f;"></div>
<div style="left:217.95px;top:470px;width:1.2px;height:27px;background:#6d8588;"></div>
<div style="left:247.13px;top:470px;width:1.9px;height:27px;background:#586c6f;"></div>
<div style="left:277.01px;top:470px;width:1.2px;height:27px;background:#6d8588;"></div>
<div style="left:306.19px;top:470px;width:1.9px;height:27px;background:#586c6f;"></div>
<div style="left:336.07px;top:470px;width:1.2px;height:27px;background:#6d8588;"></div>
<div style="left:365.25px;top:470px;width:1.9px;height:27px;background:#586c6f;"></div>
<div style="left:395.13px;top:470px;width:1.2px;height:27px;background:#6d8588;"></div>
<div style="left:424.31px;top:470px;width:1.9px;height:27px;background:#586c6f;"></div>
<div style="left:454.19px;top:470px;width:1.2px;height:27px;background:#6d8588;"></div>
<div style="left:483.37px;top:470px;width:1.9px;height:27px;background:#586c6f;"></div>
<div style="left:513.25px;top:470px;width:1.2px;height:27px;background:#6d8588;"></div>
<div style="left:542.43px;top:470px;width:1.9px;height:27px;background:#4f4f4f;"></div>
<div style="left:572.31px;top:470px;width:1.2px;height:27px;background:#646464;"></div>
<div style="left:601.49px;top:470px;width:1.9px;height:27px;background:#4f4f4f;"></div>
<div style="left:631.37px;top:470px;width:1.2px;height:27px;background:#646464;"></div>
<div style="left:660.55px;top:470px;width:1.9px;height:27px;background:#4f4f4f;"></div>
<div style="left:690.43px;top:470px;width:1.2px;height:27px;background:#646464;"></div>
<div style="left:719.61px;top:470px;width:1.9px;height:27px;background:#4f4f4f;"></div>
<div style="left:749.49px;top:470px;width:1.2px;height:27px;background:#646464;"></div>
<div style="left:778.67px;top:470px;width:1.9px;height:27px;background:#4f4f4f;"></div>
<div style="left:808.55px;top:470px;width:1.2px;height:27px;background:#646464;"></div>
<div style="left:837.73px;top:470px;width:1.9px;height:27px;background:#4f4f4f;"></div>
<div style="left:867.61px;top:470px;width:1.2px;height:27px;background:#646464;"></div>
<div style="left:896.79px;top:470px;width:1.9px;height:27px;background:#4f4f4f;"></div>
<div style="left:926.67px;top:470px;width:1.2px;height:27px;background:#646464;"></div>
<div style="left:955.85px;top:470px;width:1.9px;height:27px;background:#4f4f4f;"></div>
<div style="left:985.73px;top:470px;width:1.2px;height:27px;background:#646464;"></div>
<div style="left:1014.91px;top:470px;width:1.9px;height:27px;background:#4f4f4f;"></div>
<div style="left:1044.79px;top:470px;width:1.2px;height:27px;background:#646464;"></div>
<div style="left:1073.97px;top:470px;width:1.9px;height:27px;background:#4f4f4f;"></div>
<div style="left:1103.85px;top:470px;width:1.2px;height:27px;background:#646464;"></div>
<div style="left:1133.03px;top:470px;width:1.9px;height:27px;background:#4f4f4f;"></div>
<div style="left:1162.91px;top:470px;width:1.2px;height:27px;background:#646464;"></div>
<div style="left:1192.09px;top:470px;width:1.9px;height:27px;background:#4f4f4f;"></div>
<div style="left:1221.97px;top:470px;width:1.2px;height:27px;background:#646464;"></div>
<div style="left:1251.15px;top:470px;width:1.9px;height:27px;background:#4f4f4f;"></div>
<div style="left:1281.03px;top:470px;width:1.2px;height:27px;background:#646464;"></div>
<div style="left:1310.21px;top:470px;width:1.9px;height:27px;background:#4f4f4f;"></div>
<div style="left:1340.09px;top:470px;width:1.2px;height:27px;background:#646464;"></div>
<div style="left:1369.27px;top:470px;width:1.9px;height:27px;background:#4f4f4f;"></div>
<div style="left:1399.15px;top:470px;width:1.2px;height:27px;background:#646464;"></div>
<div style="left:1428.33px;top:470px;width:1.9px;height:27px;background:#4f4f4f;"></div>
<div style="left:1458.21px;top:470px;width:1.2px;height:27px;background:#646464;"></div>
<div style="left:1487.39px;top:470px;width:1.9px;height:27px;background:#4f4f4f;"></div>
<div style="left:543.5px;top:470px;width:472.5px;height:27px;background:#0bfca3;border-top:1px solid #08a870;border-bottom:1px solid #08a870;border-left:1.5px solid #068055;"></div>
<div style="left:1016px;top:470px;width:472.5px;height:27px;background:#0bfca3;border-top:1px solid #08a870;border-bottom:1px solid #08a870;border-left:1.5px solid #068055;"></div>
<div style="left:778.62px;top:471px;width:2.0px;height:5px;background:#1a1a1a;"></div>
<div style="left:778.62px;top:491px;width:2.0px;height:5px;background:#1a1a1a;"></div>
<div style="left:1251.1px;top:471px;width:2.0px;height:5px;background:#1a1a1a;"></div>
<div style="left:1251.1px;top:491px;width:2.0px;height:5px;background:#1a1a1a;"></div>
<div style="left:71.5px;top:500px;width:235.64px;height:27px;background:#95b1b6;"></div>
<div style="left:307.14px;top:500px;width:236.24px;height:27px;background:#a0bec3;"></div>
<div style="left:543.38px;top:500px;width:236.24px;height:27px;background:#979797;"></div>
<div style="left:779.62px;top:500px;width:236.24px;height:27px;background:#a4a4a4;"></div>
<div style="left:1015.86px;top:500px;width:236.24px;height:27px;background:#979797;"></div>
<div style="left:1252.1px;top:500px;width:236.24px;height:27px;background:#a4a4a4;"></div>
<div style="left:69.95px;top:500px;width:1.9px;height:27px;background:#586c6f;"></div>
<div style="left:99.83px;top:500px;width:1.2px;height:27px;background:#6d8588;"></div>
<div style="left:129.01px;top:500px;width:1.9px;height:27px;background:#586c6f;"></div>
<div style="left:158.89px;top:500px;width:1.2px;height:27px;background:#6d8588;"></div>
<div style="left:188.07px;top:500px;width:1.9px;height:27px;background:#586c6f;"></div>
<div style="left:217.95px;top:500px;width:1.2px;height:27px;background:#6d8588;"></div>
<div style="left:247.13px;top:500px;width:1.9px;height:27px;background:#586c6f;"></div>
<div style="left:277.01px;top:500px;width:1.2px;height:27px;background:#6d8588;"></div>
<div style="left:306.19px;top:500px;width:1.9px;height:27px;background:#586c6f;"></div>
<div style="left:336.07px;top:500px;width:1.2px;height:27px;background:#6d8588;"></div>
<div style="left:365.25px;top:500px;width:1.9px;height:27px;background:#586c6f;"></div>
<div style="left:395.13px;top:500px;width:1.2px;height:27px;background:#6d8588;"></div>
<div style="left:424.31px;top:500px;width:1.9px;height:27px;background:#586c6f;"></div>
<div style="left:454.19px;top:500px;width:1.2px;height:27px;background:#6d8588;"></div>
<div style="left:483.37px;top:500px;width:1.9px;height:27px;background:#586c6f;"></div>
<div style="left:513.25px;top:500px;width:1.2px;height:27px;background:#6d8588;"></div>
<div style="left:542.43px;top:500px;width:1.9px;height:27px;background:#4f4f4f;"></div>
<div style="left:572.31px;top:500px;width:1.2px;height:27px;background:#646464;"></div>
<div style="left:601.49px;top:500px;width:1.9px;height:27px;background:#4f4f4f;"></div>
<div style="left:631.37px;top:500px;width:1.2px;height:27px;background:#646464;"></div>
<div style="left:660.55px;top:500px;width:1.9px;height:27px;background:#4f4f4f;"></div>
<div style="left:690.43px;top:500px;width:1.2px;height:27px;background:#646464;"></div>
<div style="left:719.61px;top:500px;width:1.9px;height:27px;background:#4f4f4f;"></div>
<div style="left:749.49px;top:500px;width:1.2px;height:27px;background:#646464;"></div>
<div style="left:778.67px;top:500px;width:1.9px;height:27px;background:#4f4f4f;"></div>
<div style="left:808.55px;top:500px;width:1.2px;height:27px;background:#646464;"></div>
<div style="left:837.73px;top:500px;width:1.9px;height:27px;background:#4f4f4f;"></div>
<div style="left:867.61px;top:500px;width:1.2px;height:27px;background:#646464;"></div>
<div style="left:896.79px;top:500px;width:1.9px;height:27px;background:#4f4f4f;"></div>
<div style="left:926.67px;top:500px;width:1.2px;height:27px;background:#646464;"></div>
<div style="left:955.85px;top:500px;width:1.9px;height:27px;background:#4f4f4f;"></div>
<div style="left:985.73px;top:500px;width:1.2px;height:27px;background:#646464;"></div>
<div style="left:1014.91px;top:500px;width:1.9px;height:27px;background:#4f4f4f;"></div>
<div style="left:1044.79px;top:500px;width:1.2px;height:27px;background:#646464;"></div>
<div style="left:1073.97px;top:500px;width:1.9px;height:27px;background:#4f4f4f;"></div>
<div style="left:1103.85px;top:500px;width:1.2px;height:27px;background:#646464;"></div>
<div style="left:1133.03px;top:500px;width:1.9px;height:27px;background:#4f4f4f;"></div>
<div style="left:1162.91px;top:500px;width:1.2px;height:27px;background:#646464;"></div>
<div style="left:1192.09px;top:500px;width:1.9px;height:27px;background:#4f4f4f;"></div>
<div style="left:1221.97px;top:500px;width:1.2px;height:27px;background:#646464;"></div>
<div style="left:1251.15px;top:500px;width:1.9px;height:27px;background:#4f4f4f;"></div>
<div style="left:1281.03px;top:500px;width:1.2px;height:27px;background:#646464;"></div>
<div style="left:1310.21px;top:500px;width:1.9px;height:27px;background:#4f4f4f;"></div>
<div style="left:1340.09px;top:500px;width:1.2px;height:27px;background:#646464;"></div>
<div style="left:1369.27px;top:500px;width:1.9px;height:27px;background:#4f4f4f;"></div>
<div style="left:1399.15px;top:500px;width:1.2px;height:27px;background:#646464;"></div>
<div style="left:1428.33px;top:500px;width:1.9px;height:27px;background:#4f4f4f;"></div>
<div style="left:1458.21px;top:500px;width:1.2px;height:27px;background:#646464;"></div>
<div style="left:1487.39px;top:500px;width:1.9px;height:27px;background:#4f4f4f;"></div>
<div style="left:543.5px;top:500px;width:472.5px;height:27px;background:#7dbdf9;border-top:1px solid #4e86bd;border-bottom:1px solid #4e86bd;border-left:1.5px solid #40709e;"></div>
<div class="t" style="left:547.5px;top:506.79px;width:600px;font-size:14.42px;line-height:14.42px;color:#1e2a36;font-weight:400;text-align:left;transform:scaleX(1.13);transform-origin:left 50%;">4-Kontakt 7 1</div>
<div style="left:1016px;top:500px;width:472.5px;height:27px;background:#7dbdf9;border-top:1px solid #4e86bd;border-bottom:1px solid #4e86bd;border-left:1.5px solid #40709e;"></div>
<div class="t" style="left:1020px;top:506.79px;width:600px;font-size:14.42px;line-height:14.42px;color:#1e2a36;font-weight:400;text-align:left;transform:scaleX(1.13);transform-origin:left 50%;">4-Kontakt 7 1</div>
<div style="left:71.5px;top:530px;width:235.64px;height:27px;background:#95b1b6;"></div>
<div style="left:307.14px;top:530px;width:236.24px;height:27px;background:#a0bec3;"></div>
<div style="left:543.38px;top:530px;width:236.24px;height:27px;background:#979797;"></div>
<div style="left:779.62px;top:530px;width:236.24px;height:27px;background:#a4a4a4;"></div>
<div style="left:1015.86px;top:530px;width:236.24px;height:27px;background:#979797;"></div>
<div style="left:1252.1px;top:530px;width:236.24px;height:27px;background:#a4a4a4;"></div>
<div style="left:69.95px;top:530px;width:1.9px;height:27px;background:#586c6f;"></div>
<div style="left:99.83px;top:530px;width:1.2px;height:27px;background:#6d8588;"></div>
<div style="left:129.01px;top:530px;width:1.9px;height:27px;background:#586c6f;"></div>
<div style="left:158.89px;top:530px;width:1.2px;height:27px;background:#6d8588;"></div>
<div style="left:188.07px;top:530px;width:1.9px;height:27px;background:#586c6f;"></div>
<div style="left:217.95px;top:530px;width:1.2px;height:27px;background:#6d8588;"></div>
<div style="left:247.13px;top:530px;width:1.9px;height:27px;background:#586c6f;"></div>
<div style="left:277.01px;top:530px;width:1.2px;height:27px;background:#6d8588;"></div>
<div style="left:306.19px;top:530px;width:1.9px;height:27px;background:#586c6f;"></div>
<div style="left:336.07px;top:530px;width:1.2px;height:27px;background:#6d8588;"></div>
<div style="left:365.25px;top:530px;width:1.9px;height:27px;background:#586c6f;"></div>
<div style="left:395.13px;top:530px;width:1.2px;height:27px;background:#6d8588;"></div>
<div style="left:424.31px;top:530px;width:1.9px;height:27px;background:#586c6f;"></div>
<div style="left:454.19px;top:530px;width:1.2px;height:27px;background:#6d8588;"></div>
<div style="left:483.37px;top:530px;width:1.9px;height:27px;background:#586c6f;"></div>
<div style="left:513.25px;top:530px;width:1.2px;height:27px;background:#6d8588;"></div>
<div style="left:542.43px;top:530px;width:1.9px;height:27px;background:#4f4f4f;"></div>
<div style="left:572.31px;top:530px;width:1.2px;height:27px;background:#646464;"></div>
<div style="left:601.49px;top:530px;width:1.9px;height:27px;background:#4f4f4f;"></div>
<div style="left:631.37px;top:530px;width:1.2px;height:27px;background:#646464;"></div>
<div style="left:660.55px;top:530px;width:1.9px;height:27px;background:#4f4f4f;"></div>
<div style="left:690.43px;top:530px;width:1.2px;height:27px;background:#646464;"></div>
<div style="left:719.61px;top:530px;width:1.9px;height:27px;background:#4f4f4f;"></div>
<div style="left:749.49px;top:530px;width:1.2px;height:27px;background:#646464;"></div>
<div style="left:778.67px;top:530px;width:1.9px;height:27px;background:#4f4f4f;"></div>
<div style="left:808.55px;top:530px;width:1.2px;height:27px;background:#646464;"></div>
<div style="left:837.73px;top:530px;width:1.9px;height:27px;background:#4f4f4f;"></div>
<div style="left:867.61px;top:530px;width:1.2px;height:27px;background:#646464;"></div>
<div style="left:896.79px;top:530px;width:1.9px;height:27px;background:#4f4f4f;"></div>
<div style="left:926.67px;top:530px;width:1.2px;height:27px;background:#646464;"></div>
<div style="left:955.85px;top:530px;width:1.9px;height:27px;background:#4f4f4f;"></div>
<div style="left:985.73px;top:530px;width:1.2px;height:27px;background:#646464;"></div>
<div style="left:1014.91px;top:530px;width:1.9px;height:27px;background:#4f4f4f;"></div>
<div style="left:1044.79px;top:530px;width:1.2px;height:27px;background:#646464;"></div>
<div style="left:1073.97px;top:530px;width:1.9px;height:27px;background:#4f4f4f;"></div>
<div style="left:1103.85px;top:530px;width:1.2px;height:27px;background:#646464;"></div>
<div style="left:1133.03px;top:530px;width:1.9px;height:27px;background:#4f4f4f;"></div>
<div style="left:1162.91px;top:530px;width:1.2px;height:27px;background:#646464;"></div>
<div style="left:1192.09px;top:530px;width:1.9px;height:27px;background:#4f4f4f;"></div>
<div style="left:1221.97px;top:530px;width:1.2px;height:27px;background:#646464;"></div>
<div style="left:1251.15px;top:530px;width:1.9px;height:27px;background:#4f4f4f;"></div>
<div style="left:1281.03px;top:530px;width:1.2px;height:27px;background:#646464;"></div>
<div style="left:1310.21px;top:530px;width:1.9px;height:27px;background:#4f4f4f;"></div>
<div style="left:1340.09px;top:530px;width:1.2px;height:27px;background:#646464;"></div>
<div style="left:1369.27px;top:530px;width:1.9px;height:27px;background:#4f4f4f;"></div>
<div style="left:1399.15px;top:530px;width:1.2px;height:27px;background:#646464;"></div>
<div style="left:1428.33px;top:530px;width:1.9px;height:27px;background:#4f4f4f;"></div>
<div style="left:1458.21px;top:530px;width:1.2px;height:27px;background:#646464;"></div>
<div style="left:1487.39px;top:530px;width:1.9px;height:27px;background:#4f4f4f;"></div>
<div style="left:543.5px;top:530px;width:472.5px;height:27px;background:#4277db;border-top:1px solid #2a4f99;border-bottom:1px solid #2a4f99;border-left:1.5px solid #23427f;"></div>
<div style="left:1016px;top:530px;width:472.5px;height:27px;background:#4277db;border-top:1px solid #2a4f99;border-bottom:1px solid #2a4f99;border-left:1.5px solid #23427f;"></div>
<div style="left:71.5px;top:560px;width:235.64px;height:27px;background:#95b1b6;"></div>
<div style="left:307.14px;top:560px;width:236.24px;height:27px;background:#a0bec3;"></div>
<div style="left:543.38px;top:560px;width:236.24px;height:27px;background:#979797;"></div>
<div style="left:779.62px;top:560px;width:236.24px;height:27px;background:#a4a4a4;"></div>
<div style="left:1015.86px;top:560px;width:236.24px;height:27px;background:#979797;"></div>
<div style="left:1252.1px;top:560px;width:236.24px;height:27px;background:#a4a4a4;"></div>
<div style="left:69.95px;top:560px;width:1.9px;height:27px;background:#586c6f;"></div>
<div style="left:99.83px;top:560px;width:1.2px;height:27px;background:#6d8588;"></div>
<div style="left:129.01px;top:560px;width:1.9px;height:27px;background:#586c6f;"></div>
<div style="left:158.89px;top:560px;width:1.2px;height:27px;background:#6d8588;"></div>
<div style="left:188.07px;top:560px;width:1.9px;height:27px;background:#586c6f;"></div>
<div style="left:217.95px;top:560px;width:1.2px;height:27px;background:#6d8588;"></div>
<div style="left:247.13px;top:560px;width:1.9px;height:27px;background:#586c6f;"></div>
<div style="left:277.01px;top:560px;width:1.2px;height:27px;background:#6d8588;"></div>
<div style="left:306.19px;top:560px;width:1.9px;height:27px;background:#586c6f;"></div>
<div style="left:336.07px;top:560px;width:1.2px;height:27px;background:#6d8588;"></div>
<div style="left:365.25px;top:560px;width:1.9px;height:27px;background:#586c6f;"></div>
<div style="left:395.13px;top:560px;width:1.2px;height:27px;background:#6d8588;"></div>
<div style="left:424.31px;top:560px;width:1.9px;height:27px;background:#586c6f;"></div>
<div style="left:454.19px;top:560px;width:1.2px;height:27px;background:#6d8588;"></div>
<div style="left:483.37px;top:560px;width:1.9px;height:27px;background:#586c6f;"></div>
<div style="left:513.25px;top:560px;width:1.2px;height:27px;background:#6d8588;"></div>
<div style="left:542.43px;top:560px;width:1.9px;height:27px;background:#4f4f4f;"></div>
<div style="left:572.31px;top:560px;width:1.2px;height:27px;background:#646464;"></div>
<div style="left:601.49px;top:560px;width:1.9px;height:27px;background:#4f4f4f;"></div>
<div style="left:631.37px;top:560px;width:1.2px;height:27px;background:#646464;"></div>
<div style="left:660.55px;top:560px;width:1.9px;height:27px;background:#4f4f4f;"></div>
<div style="left:690.43px;top:560px;width:1.2px;height:27px;background:#646464;"></div>
<div style="left:719.61px;top:560px;width:1.9px;height:27px;background:#4f4f4f;"></div>
<div style="left:749.49px;top:560px;width:1.2px;height:27px;background:#646464;"></div>
<div style="left:778.67px;top:560px;width:1.9px;height:27px;background:#4f4f4f;"></div>
<div style="left:808.55px;top:560px;width:1.2px;height:27px;background:#646464;"></div>
<div style="left:837.73px;top:560px;width:1.9px;height:27px;background:#4f4f4f;"></div>
<div style="left:867.61px;top:560px;width:1.2px;height:27px;background:#646464;"></div>
<div style="left:896.79px;top:560px;width:1.9px;height:27px;background:#4f4f4f;"></div>
<div style="left:926.67px;top:560px;width:1.2px;height:27px;background:#646464;"></div>
<div style="left:955.85px;top:560px;width:1.9px;height:27px;background:#4f4f4f;"></div>
<div style="left:985.73px;top:560px;width:1.2px;height:27px;background:#646464;"></div>
<div style="left:1014.91px;top:560px;width:1.9px;height:27px;background:#4f4f4f;"></div>
<div style="left:1044.79px;top:560px;width:1.2px;height:27px;background:#646464;"></div>
<div style="left:1073.97px;top:560px;width:1.9px;height:27px;background:#4f4f4f;"></div>
<div style="left:1103.85px;top:560px;width:1.2px;height:27px;background:#646464;"></div>
<div style="left:1133.03px;top:560px;width:1.9px;height:27px;background:#4f4f4f;"></div>
<div style="left:1162.91px;top:560px;width:1.2px;height:27px;background:#646464;"></div>
<div style="left:1192.09px;top:560px;width:1.9px;height:27px;background:#4f4f4f;"></div>
<div style="left:1221.97px;top:560px;width:1.2px;height:27px;background:#646464;"></div>
<div style="left:1251.15px;top:560px;width:1.9px;height:27px;background:#4f4f4f;"></div>
<div style="left:1281.03px;top:560px;width:1.2px;height:27px;background:#646464;"></div>
<div style="left:1310.21px;top:560px;width:1.9px;height:27px;background:#4f4f4f;"></div>
<div style="left:1340.09px;top:560px;width:1.2px;height:27px;background:#646464;"></div>
<div style="left:1369.27px;top:560px;width:1.9px;height:27px;background:#4f4f4f;"></div>
<div style="left:1399.15px;top:560px;width:1.2px;height:27px;background:#646464;"></div>
<div style="left:1428.33px;top:560px;width:1.9px;height:27px;background:#4f4f4f;"></div>
<div style="left:1458.21px;top:560px;width:1.2px;height:27px;background:#646464;"></div>
<div style="left:1487.39px;top:560px;width:1.9px;height:27px;background:#4f4f4f;"></div>
<div style="left:1251.5px;top:561px;width:59.0px;height:25.5px;background:#ff2fcf;border:1px solid #a8208a;"></div>
<div style="left:71.5px;top:590px;width:235.64px;height:5.5px;background:#95b1b6;"></div>
<div style="left:307.14px;top:590px;width:236.24px;height:5.5px;background:#a0bec3;"></div>
<div style="left:543.38px;top:590px;width:236.24px;height:5.5px;background:#979797;"></div>
<div style="left:779.62px;top:590px;width:236.24px;height:5.5px;background:#a4a4a4;"></div>
<div style="left:1015.86px;top:590px;width:236.24px;height:5.5px;background:#979797;"></div>
<div style="left:1252.1px;top:590px;width:236.24px;height:5.5px;background:#a4a4a4;"></div>
<div style="left:69.95px;top:590px;width:1.9px;height:5.5px;background:#586c6f;"></div>
<div style="left:99.83px;top:590px;width:1.2px;height:5.5px;background:#6d8588;"></div>
<div style="left:129.01px;top:590px;width:1.9px;height:5.5px;background:#586c6f;"></div>
<div style="left:158.89px;top:590px;width:1.2px;height:5.5px;background:#6d8588;"></div>
<div style="left:188.07px;top:590px;width:1.9px;height:5.5px;background:#586c6f;"></div>
<div style="left:217.95px;top:590px;width:1.2px;height:5.5px;background:#6d8588;"></div>
<div style="left:247.13px;top:590px;width:1.9px;height:5.5px;background:#586c6f;"></div>
<div style="left:277.01px;top:590px;width:1.2px;height:5.5px;background:#6d8588;"></div>
<div style="left:306.19px;top:590px;width:1.9px;height:5.5px;background:#586c6f;"></div>
<div style="left:336.07px;top:590px;width:1.2px;height:5.5px;background:#6d8588;"></div>
<div style="left:365.25px;top:590px;width:1.9px;height:5.5px;background:#586c6f;"></div>
<div style="left:395.13px;top:590px;width:1.2px;height:5.5px;background:#6d8588;"></div>
<div style="left:424.31px;top:590px;width:1.9px;height:5.5px;background:#586c6f;"></div>
<div style="left:454.19px;top:590px;width:1.2px;height:5.5px;background:#6d8588;"></div>
<div style="left:483.37px;top:590px;width:1.9px;height:5.5px;background:#586c6f;"></div>
<div style="left:513.25px;top:590px;width:1.2px;height:5.5px;background:#6d8588;"></div>
<div style="left:542.43px;top:590px;width:1.9px;height:5.5px;background:#4f4f4f;"></div>
<div style="left:572.31px;top:590px;width:1.2px;height:5.5px;background:#646464;"></div>
<div style="left:601.49px;top:590px;width:1.9px;height:5.5px;background:#4f4f4f;"></div>
<div style="left:631.37px;top:590px;width:1.2px;height:5.5px;background:#646464;"></div>
<div style="left:660.55px;top:590px;width:1.9px;height:5.5px;background:#4f4f4f;"></div>
<div style="left:690.43px;top:590px;width:1.2px;height:5.5px;background:#646464;"></div>
<div style="left:719.61px;top:590px;width:1.9px;height:5.5px;background:#4f4f4f;"></div>
<div style="left:749.49px;top:590px;width:1.2px;height:5.5px;background:#646464;"></div>
<div style="left:778.67px;top:590px;width:1.9px;height:5.5px;background:#4f4f4f;"></div>
<div style="left:808.55px;top:590px;width:1.2px;height:5.5px;background:#646464;"></div>
<div style="left:837.73px;top:590px;width:1.9px;height:5.5px;background:#4f4f4f;"></div>
<div style="left:867.61px;top:590px;width:1.2px;height:5.5px;background:#646464;"></div>
<div style="left:896.79px;top:590px;width:1.9px;height:5.5px;background:#4f4f4f;"></div>
<div style="left:926.67px;top:590px;width:1.2px;height:5.5px;background:#646464;"></div>
<div style="left:955.85px;top:590px;width:1.9px;height:5.5px;background:#4f4f4f;"></div>
<div style="left:985.73px;top:590px;width:1.2px;height:5.5px;background:#646464;"></div>
<div style="left:1014.91px;top:590px;width:1.9px;height:5.5px;background:#4f4f4f;"></div>
<div style="left:1044.79px;top:590px;width:1.2px;height:5.5px;background:#646464;"></div>
<div style="left:1073.97px;top:590px;width:1.9px;height:5.5px;background:#4f4f4f;"></div>
<div style="left:1103.85px;top:590px;width:1.2px;height:5.5px;background:#646464;"></div>
<div style="left:1133.03px;top:590px;width:1.9px;height:5.5px;background:#4f4f4f;"></div>
<div style="left:1162.91px;top:590px;width:1.2px;height:5.5px;background:#646464;"></div>
<div style="left:1192.09px;top:590px;width:1.9px;height:5.5px;background:#4f4f4f;"></div>
<div style="left:1221.97px;top:590px;width:1.2px;height:5.5px;background:#646464;"></div>
<div style="left:1251.15px;top:590px;width:1.9px;height:5.5px;background:#4f4f4f;"></div>
<div style="left:1281.03px;top:590px;width:1.2px;height:5.5px;background:#646464;"></div>
<div style="left:1310.21px;top:590px;width:1.9px;height:5.5px;background:#4f4f4f;"></div>
<div style="left:1340.09px;top:590px;width:1.2px;height:5.5px;background:#646464;"></div>
<div style="left:1369.27px;top:590px;width:1.9px;height:5.5px;background:#4f4f4f;"></div>
<div style="left:1399.15px;top:590px;width:1.2px;height:5.5px;background:#646464;"></div>
<div style="left:1428.33px;top:590px;width:1.9px;height:5.5px;background:#4f4f4f;"></div>
<div style="left:1458.21px;top:590px;width:1.2px;height:5.5px;background:#646464;"></div>
<div style="left:1487.39px;top:590px;width:1.9px;height:5.5px;background:#4f4f4f;"></div>
<div style="left:543.5px;top:590.9px;width:944.8px;height:4.2px;background:#809aff;border-top:1px solid #3a4a7a;"></div>
<div style="left:71.5px;top:595.5px;width:1890.0px;height:4.5px;background:#555;"></div>
<div style="left:71.5px;top:600px;width:235.64px;height:27px;background:#979797;"></div>
<div style="left:307.14px;top:600px;width:236.24px;height:27px;background:#a4a4a4;"></div>
<div style="left:543.38px;top:600px;width:236.24px;height:27px;background:#979797;"></div>
<div style="left:779.62px;top:600px;width:236.24px;height:27px;background:#a4a4a4;"></div>
<div style="left:1015.86px;top:600px;width:236.24px;height:27px;background:#979797;"></div>
<div style="left:1252.1px;top:600px;width:236.24px;height:27px;background:#a4a4a4;"></div>
<div style="left:69.95px;top:600px;width:1.9px;height:27px;background:#4f4f4f;"></div>
<div style="left:99.83px;top:600px;width:1.2px;height:27px;background:#646464;"></div>
<div style="left:129.01px;top:600px;width:1.9px;height:27px;background:#4f4f4f;"></div>
<div style="left:158.89px;top:600px;width:1.2px;height:27px;background:#646464;"></div>
<div style="left:188.07px;top:600px;width:1.9px;height:27px;background:#4f4f4f;"></div>
<div style="left:217.95px;top:600px;width:1.2px;height:27px;background:#646464;"></div>
<div style="left:247.13px;top:600px;width:1.9px;height:27px;background:#4f4f4f;"></div>
<div style="left:277.01px;top:600px;width:1.2px;height:27px;background:#646464;"></div>
<div style="left:306.19px;top:600px;width:1.9px;height:27px;background:#4f4f4f;"></div>
<div style="left:336.07px;top:600px;width:1.2px;height:27px;background:#646464;"></div>
<div style="left:365.25px;top:600px;width:1.9px;height:27px;background:#4f4f4f;"></div>
<div style="left:395.13px;top:600px;width:1.2px;height:27px;background:#646464;"></div>
<div style="left:424.31px;top:600px;width:1.9px;height:27px;background:#4f4f4f;"></div>
<div style="left:454.19px;top:600px;width:1.2px;height:27px;background:#646464;"></div>
<div style="left:483.37px;top:600px;width:1.9px;height:27px;background:#4f4f4f;"></div>
<div style="left:513.25px;top:600px;width:1.2px;height:27px;background:#646464;"></div>
<div style="left:542.43px;top:600px;width:1.9px;height:27px;background:#4f4f4f;"></div>
<div style="left:572.31px;top:600px;width:1.2px;height:27px;background:#646464;"></div>
<div style="left:601.49px;top:600px;width:1.9px;height:27px;background:#4f4f4f;"></div>
<div style="left:631.37px;top:600px;width:1.2px;height:27px;background:#646464;"></div>
<div style="left:660.55px;top:600px;width:1.9px;height:27px;background:#4f4f4f;"></div>
<div style="left:690.43px;top:600px;width:1.2px;height:27px;background:#646464;"></div>
<div style="left:719.61px;top:600px;width:1.9px;height:27px;background:#4f4f4f;"></div>
<div style="left:749.49px;top:600px;width:1.2px;height:27px;background:#646464;"></div>
<div style="left:778.67px;top:600px;width:1.9px;height:27px;background:#4f4f4f;"></div>
<div style="left:808.55px;top:600px;width:1.2px;height:27px;background:#646464;"></div>
<div style="left:837.73px;top:600px;width:1.9px;height:27px;background:#4f4f4f;"></div>
<div style="left:867.61px;top:600px;width:1.2px;height:27px;background:#646464;"></div>
<div style="left:896.79px;top:600px;width:1.9px;height:27px;background:#4f4f4f;"></div>
<div style="left:926.67px;top:600px;width:1.2px;height:27px;background:#646464;"></div>
<div style="left:955.85px;top:600px;width:1.9px;height:27px;background:#4f4f4f;"></div>
<div style="left:985.73px;top:600px;width:1.2px;height:27px;background:#646464;"></div>
<div style="left:1014.91px;top:600px;width:1.9px;height:27px;background:#4f4f4f;"></div>
<div style="left:1044.79px;top:600px;width:1.2px;height:27px;background:#646464;"></div>
<div style="left:1073.97px;top:600px;width:1.9px;height:27px;background:#4f4f4f;"></div>
<div style="left:1103.85px;top:600px;width:1.2px;height:27px;background:#646464;"></div>
<div style="left:1133.03px;top:600px;width:1.9px;height:27px;background:#4f4f4f;"></div>
<div style="left:1162.91px;top:600px;width:1.2px;height:27px;background:#646464;"></div>
<div style="left:1192.09px;top:600px;width:1.9px;height:27px;background:#4f4f4f;"></div>
<div style="left:1221.97px;top:600px;width:1.2px;height:27px;background:#646464;"></div>
<div style="left:1251.15px;top:600px;width:1.9px;height:27px;background:#4f4f4f;"></div>
<div style="left:1281.03px;top:600px;width:1.2px;height:27px;background:#646464;"></div>
<div style="left:1310.21px;top:600px;width:1.9px;height:27px;background:#4f4f4f;"></div>
<div style="left:1340.09px;top:600px;width:1.2px;height:27px;background:#646464;"></div>
<div style="left:1369.27px;top:600px;width:1.9px;height:27px;background:#4f4f4f;"></div>
<div style="left:1399.15px;top:600px;width:1.2px;height:27px;background:#646464;"></div>
<div style="left:1428.33px;top:600px;width:1.9px;height:27px;background:#4f4f4f;"></div>
<div style="left:1458.21px;top:600px;width:1.2px;height:27px;background:#646464;"></div>
<div style="left:1487.39px;top:600px;width:1.9px;height:27px;background:#4f4f4f;"></div>
<div style="left:71.5px;top:630px;width:235.64px;height:27px;background:#979797;"></div>
<div style="left:307.14px;top:630px;width:236.24px;height:27px;background:#a4a4a4;"></div>
<div style="left:543.38px;top:630px;width:236.24px;height:27px;background:#979797;"></div>
<div style="left:779.62px;top:630px;width:236.24px;height:27px;background:#a4a4a4;"></div>
<div style="left:1015.86px;top:630px;width:236.24px;height:27px;background:#979797;"></div>
<div style="left:1252.1px;top:630px;width:236.24px;height:27px;background:#a4a4a4;"></div>
<div style="left:69.95px;top:630px;width:1.9px;height:27px;background:#4f4f4f;"></div>
<div style="left:99.83px;top:630px;width:1.2px;height:27px;background:#646464;"></div>
<div style="left:129.01px;top:630px;width:1.9px;height:27px;background:#4f4f4f;"></div>
<div style="left:158.89px;top:630px;width:1.2px;height:27px;background:#646464;"></div>
<div style="left:188.07px;top:630px;width:1.9px;height:27px;background:#4f4f4f;"></div>
<div style="left:217.95px;top:630px;width:1.2px;height:27px;background:#646464;"></div>
<div style="left:247.13px;top:630px;width:1.9px;height:27px;background:#4f4f4f;"></div>
<div style="left:277.01px;top:630px;width:1.2px;height:27px;background:#646464;"></div>
<div style="left:306.19px;top:630px;width:1.9px;height:27px;background:#4f4f4f;"></div>
<div style="left:336.07px;top:630px;width:1.2px;height:27px;background:#646464;"></div>
<div style="left:365.25px;top:630px;width:1.9px;height:27px;background:#4f4f4f;"></div>
<div style="left:395.13px;top:630px;width:1.2px;height:27px;background:#646464;"></div>
<div style="left:424.31px;top:630px;width:1.9px;height:27px;background:#4f4f4f;"></div>
<div style="left:454.19px;top:630px;width:1.2px;height:27px;background:#646464;"></div>
<div style="left:483.37px;top:630px;width:1.9px;height:27px;background:#4f4f4f;"></div>
<div style="left:513.25px;top:630px;width:1.2px;height:27px;background:#646464;"></div>
<div style="left:542.43px;top:630px;width:1.9px;height:27px;background:#4f4f4f;"></div>
<div style="left:572.31px;top:630px;width:1.2px;height:27px;background:#646464;"></div>
<div style="left:601.49px;top:630px;width:1.9px;height:27px;background:#4f4f4f;"></div>
<div style="left:631.37px;top:630px;width:1.2px;height:27px;background:#646464;"></div>
<div style="left:660.55px;top:630px;width:1.9px;height:27px;background:#4f4f4f;"></div>
<div style="left:690.43px;top:630px;width:1.2px;height:27px;background:#646464;"></div>
<div style="left:719.61px;top:630px;width:1.9px;height:27px;background:#4f4f4f;"></div>
<div style="left:749.49px;top:630px;width:1.2px;height:27px;background:#646464;"></div>
<div style="left:778.67px;top:630px;width:1.9px;height:27px;background:#4f4f4f;"></div>
<div style="left:808.55px;top:630px;width:1.2px;height:27px;background:#646464;"></div>
<div style="left:837.73px;top:630px;width:1.9px;height:27px;background:#4f4f4f;"></div>
<div style="left:867.61px;top:630px;width:1.2px;height:27px;background:#646464;"></div>
<div style="left:896.79px;top:630px;width:1.9px;height:27px;background:#4f4f4f;"></div>
<div style="left:926.67px;top:630px;width:1.2px;height:27px;background:#646464;"></div>
<div style="left:955.85px;top:630px;width:1.9px;height:27px;background:#4f4f4f;"></div>
<div style="left:985.73px;top:630px;width:1.2px;height:27px;background:#646464;"></div>
<div style="left:1014.91px;top:630px;width:1.9px;height:27px;background:#4f4f4f;"></div>
<div style="left:1044.79px;top:630px;width:1.2px;height:27px;background:#646464;"></div>
<div style="left:1073.97px;top:630px;width:1.9px;height:27px;background:#4f4f4f;"></div>
<div style="left:1103.85px;top:630px;width:1.2px;height:27px;background:#646464;"></div>
<div style="left:1133.03px;top:630px;width:1.9px;height:27px;background:#4f4f4f;"></div>
<div style="left:1162.91px;top:630px;width:1.2px;height:27px;background:#646464;"></div>
<div style="left:1192.09px;top:630px;width:1.9px;height:27px;background:#4f4f4f;"></div>
<div style="left:1221.97px;top:630px;width:1.2px;height:27px;background:#646464;"></div>
<div style="left:1251.15px;top:630px;width:1.9px;height:27px;background:#4f4f4f;"></div>
<div style="left:1281.03px;top:630px;width:1.2px;height:27px;background:#646464;"></div>
<div style="left:1310.21px;top:630px;width:1.9px;height:27px;background:#4f4f4f;"></div>
<div style="left:1340.09px;top:630px;width:1.2px;height:27px;background:#646464;"></div>
<div style="left:1369.27px;top:630px;width:1.9px;height:27px;background:#4f4f4f;"></div>
<div style="left:1399.15px;top:630px;width:1.2px;height:27px;background:#646464;"></div>
<div style="left:1428.33px;top:630px;width:1.9px;height:27px;background:#4f4f4f;"></div>
<div style="left:1458.21px;top:630px;width:1.2px;height:27px;background:#646464;"></div>
<div style="left:1487.39px;top:630px;width:1.9px;height:27px;background:#4f4f4f;"></div>
<div style="left:71.5px;top:660px;width:235.64px;height:27px;background:#979797;"></div>
<div style="left:307.14px;top:660px;width:236.24px;height:27px;background:#a4a4a4;"></div>
<div style="left:543.38px;top:660px;width:236.24px;height:27px;background:#979797;"></div>
<div style="left:779.62px;top:660px;width:236.24px;height:27px;background:#a4a4a4;"></div>
<div style="left:1015.86px;top:660px;width:236.24px;height:27px;background:#979797;"></div>
<div style="left:1252.1px;top:660px;width:236.24px;height:27px;background:#a4a4a4;"></div>
<div style="left:69.95px;top:660px;width:1.9px;height:27px;background:#4f4f4f;"></div>
<div style="left:99.83px;top:660px;width:1.2px;height:27px;background:#646464;"></div>
<div style="left:129.01px;top:660px;width:1.9px;height:27px;background:#4f4f4f;"></div>
<div style="left:158.89px;top:660px;width:1.2px;height:27px;background:#646464;"></div>
<div style="left:188.07px;top:660px;width:1.9px;height:27px;background:#4f4f4f;"></div>
<div style="left:217.95px;top:660px;width:1.2px;height:27px;background:#646464;"></div>
<div style="left:247.13px;top:660px;width:1.9px;height:27px;background:#4f4f4f;"></div>
<div style="left:277.01px;top:660px;width:1.2px;height:27px;background:#646464;"></div>
<div style="left:306.19px;top:660px;width:1.9px;height:27px;background:#4f4f4f;"></div>
<div style="left:336.07px;top:660px;width:1.2px;height:27px;background:#646464;"></div>
<div style="left:365.25px;top:660px;width:1.9px;height:27px;background:#4f4f4f;"></div>
<div style="left:395.13px;top:660px;width:1.2px;height:27px;background:#646464;"></div>
<div style="left:424.31px;top:660px;width:1.9px;height:27px;background:#4f4f4f;"></div>
<div style="left:454.19px;top:660px;width:1.2px;height:27px;background:#646464;"></div>
<div style="left:483.37px;top:660px;width:1.9px;height:27px;background:#4f4f4f;"></div>
<div style="left:513.25px;top:660px;width:1.2px;height:27px;background:#646464;"></div>
<div style="left:542.43px;top:660px;width:1.9px;height:27px;background:#4f4f4f;"></div>
<div style="left:572.31px;top:660px;width:1.2px;height:27px;background:#646464;"></div>
<div style="left:601.49px;top:660px;width:1.9px;height:27px;background:#4f4f4f;"></div>
<div style="left:631.37px;top:660px;width:1.2px;height:27px;background:#646464;"></div>
<div style="left:660.55px;top:660px;width:1.9px;height:27px;background:#4f4f4f;"></div>
<div style="left:690.43px;top:660px;width:1.2px;height:27px;background:#646464;"></div>
<div style="left:719.61px;top:660px;width:1.9px;height:27px;background:#4f4f4f;"></div>
<div style="left:749.49px;top:660px;width:1.2px;height:27px;background:#646464;"></div>
<div style="left:778.67px;top:660px;width:1.9px;height:27px;background:#4f4f4f;"></div>
<div style="left:808.55px;top:660px;width:1.2px;height:27px;background:#646464;"></div>
<div style="left:837.73px;top:660px;width:1.9px;height:27px;background:#4f4f4f;"></div>
<div style="left:867.61px;top:660px;width:1.2px;height:27px;background:#646464;"></div>
<div style="left:896.79px;top:660px;width:1.9px;height:27px;background:#4f4f4f;"></div>
<div style="left:926.67px;top:660px;width:1.2px;height:27px;background:#646464;"></div>
<div style="left:955.85px;top:660px;width:1.9px;height:27px;background:#4f4f4f;"></div>
<div style="left:985.73px;top:660px;width:1.2px;height:27px;background:#646464;"></div>
<div style="left:1014.91px;top:660px;width:1.9px;height:27px;background:#4f4f4f;"></div>
<div style="left:1044.79px;top:660px;width:1.2px;height:27px;background:#646464;"></div>
<div style="left:1073.97px;top:660px;width:1.9px;height:27px;background:#4f4f4f;"></div>
<div style="left:1103.85px;top:660px;width:1.2px;height:27px;background:#646464;"></div>
<div style="left:1133.03px;top:660px;width:1.9px;height:27px;background:#4f4f4f;"></div>
<div style="left:1162.91px;top:660px;width:1.2px;height:27px;background:#646464;"></div>
<div style="left:1192.09px;top:660px;width:1.9px;height:27px;background:#4f4f4f;"></div>
<div style="left:1221.97px;top:660px;width:1.2px;height:27px;background:#646464;"></div>
<div style="left:1251.15px;top:660px;width:1.9px;height:27px;background:#4f4f4f;"></div>
<div style="left:1281.03px;top:660px;width:1.2px;height:27px;background:#646464;"></div>
<div style="left:1310.21px;top:660px;width:1.9px;height:27px;background:#4f4f4f;"></div>
<div style="left:1340.09px;top:660px;width:1.2px;height:27px;background:#646464;"></div>
<div style="left:1369.27px;top:660px;width:1.9px;height:27px;background:#4f4f4f;"></div>
<div style="left:1399.15px;top:660px;width:1.2px;height:27px;background:#646464;"></div>
<div style="left:1428.33px;top:660px;width:1.9px;height:27px;background:#4f4f4f;"></div>
<div style="left:1458.21px;top:660px;width:1.2px;height:27px;background:#646464;"></div>
<div style="left:1487.39px;top:660px;width:1.9px;height:27px;background:#4f4f4f;"></div>
<div style="left:232.8px;top:211px;width:1.5px;height:476px;background:#0a0a0a;"></div>
<svg style="position:absolute;left:542px;top:201px;" width="10" height="8" viewBox="0 0 10 8"><polygon points="1,1.2 6.5,1.2 1,6.8" fill="#bff2fb"/></svg>
<div style="left:1489.2px;top:211px;width:11.3px;height:27px;background:#9a9a9a;"></div>
<div style="left:1489.2px;top:241px;width:11.3px;height:27px;background:#9a9a9a;"></div>
<div style="left:1489.2px;top:271px;width:11.3px;height:136px;background:#9a9a9a;"></div>
<div style="left:1489.2px;top:410px;width:11.3px;height:27px;background:#9a9a9a;"></div>
<div style="left:1489.2px;top:440px;width:11.3px;height:27px;background:#9a9a9a;"></div>
<div style="left:1489.2px;top:470px;width:11.3px;height:27px;background:#9a9a9a;"></div>
<div style="left:1489.2px;top:500px;width:11.3px;height:27px;background:#9a9a9a;"></div>
<div style="left:1489.2px;top:530px;width:11.3px;height:27px;background:#9a9a9a;"></div>
<div style="left:1489.2px;top:560px;width:11.3px;height:27px;background:#9a9a9a;"></div>
<div style="left:1489.2px;top:590px;width:11.3px;height:5.5px;background:#9a9a9a;"></div>
<div style="left:1489.2px;top:600px;width:11.3px;height:27px;background:#9a9a9a;"></div>
<div style="left:1489.2px;top:630px;width:11.3px;height:27px;background:#9a9a9a;"></div>
<div style="left:1489.2px;top:660px;width:11.3px;height:27px;background:#9a9a9a;"></div>
<div style="left:1500.5px;top:208px;width:2.7px;height:482px;background:#575757;"></div>
<div class="t" style="left:895px;top:658.77px;width:600px;font-size:26.27px;line-height:26.27px;color:#6a6a6a;font-weight:400;text-align:right;letter-spacing:0px;transform:scaleX(1.1);transform-origin:right 50%;-webkit-text-stroke:0.9px #6a6a6a;">1/2</div>
<div style="left:67px;top:174px;width:5px;height:516px;background:#1c1c1c;"></div>
<div style="left:71.5px;top:690px;width:1890.0px;height:33px;background:#a3a3a3;"></div>
<div style="left:70.1px;top:690px;width:1.6px;height:12.5px;background:#4a4a4a;"></div>
<div style="left:70.9px;top:701px;width:3.5px;height:1.5px;background:#4a4a4a;"></div>
<div class="t" style="left:75.4px;top:693.72px;width:600px;font-size:15.45px;line-height:15.45px;color:#161616;font-weight:400;text-align:left;transform:scaleX(1.13);transform-origin:left 50%;">0:00</div>
<div style="left:104.9px;top:690px;width:1.4px;height:3.5px;background:#4a4a4a;"></div>
<div style="left:139.6px;top:690px;width:1.4px;height:3.5px;background:#4a4a4a;"></div>
<div style="left:174.29px;top:690px;width:1.4px;height:3.5px;background:#4a4a4a;"></div>
<div style="left:208.99px;top:690px;width:1.4px;height:3.5px;background:#4a4a4a;"></div>
<div style="left:243.59px;top:690px;width:1.6px;height:12.5px;background:#4a4a4a;"></div>
<div style="left:244.39px;top:701px;width:3.5px;height:1.5px;background:#4a4a4a;"></div>
<div class="t" style="left:248.89px;top:693.72px;width:600px;font-size:15.45px;line-height:15.45px;color:#161616;font-weight:400;text-align:left;transform:scaleX(1.13);transform-origin:left 50%;">0:05</div>
<div style="left:278.39px;top:690px;width:1.4px;height:3.5px;background:#4a4a4a;"></div>
<div style="left:313.08px;top:690px;width:1.4px;height:3.5px;background:#4a4a4a;"></div>
<div style="left:347.78px;top:690px;width:1.4px;height:3.5px;background:#4a4a4a;"></div>
<div style="left:382.48px;top:690px;width:1.4px;height:3.5px;background:#4a4a4a;"></div>
<div style="left:417.08px;top:690px;width:1.6px;height:12.5px;background:#4a4a4a;"></div>
<div style="left:417.88px;top:701px;width:3.5px;height:1.5px;background:#4a4a4a;"></div>
<div class="t" style="left:422.38px;top:693.72px;width:600px;font-size:15.45px;line-height:15.45px;color:#161616;font-weight:400;text-align:left;transform:scaleX(1.13);transform-origin:left 50%;">0:10</div>
<div style="left:451.88px;top:690px;width:1.4px;height:3.5px;background:#4a4a4a;"></div>
<div style="left:486.57px;top:690px;width:1.4px;height:3.5px;background:#4a4a4a;"></div>
<div style="left:521.27px;top:690px;width:1.4px;height:3.5px;background:#4a4a4a;"></div>
<div style="left:555.97px;top:690px;width:1.4px;height:3.5px;background:#4a4a4a;"></div>
<div style="left:590.57px;top:690px;width:1.6px;height:12.5px;background:#4a4a4a;"></div>
<div style="left:591.37px;top:701px;width:3.5px;height:1.5px;background:#4a4a4a;"></div>
<div class="t" style="left:595.87px;top:693.72px;width:600px;font-size:15.45px;line-height:15.45px;color:#161616;font-weight:400;text-align:left;transform:scaleX(1.13);transform-origin:left 50%;">0:15</div>
<div style="left:625.36px;top:690px;width:1.4px;height:3.5px;background:#4a4a4a;"></div>
<div style="left:660.06px;top:690px;width:1.4px;height:3.5px;background:#4a4a4a;"></div>
<div style="left:694.76px;top:690px;width:1.4px;height:3.5px;background:#4a4a4a;"></div>
<div style="left:729.46px;top:690px;width:1.4px;height:3.5px;background:#4a4a4a;"></div>
<div style="left:764.05px;top:690px;width:1.6px;height:12.5px;background:#4a4a4a;"></div>
<div style="left:764.85px;top:701px;width:3.5px;height:1.5px;background:#4a4a4a;"></div>
<div class="t" style="left:769.35px;top:693.72px;width:600px;font-size:15.45px;line-height:15.45px;color:#161616;font-weight:400;text-align:left;transform:scaleX(1.13);transform-origin:left 50%;">0:20</div>
<div style="left:798.85px;top:690px;width:1.4px;height:3.5px;background:#4a4a4a;"></div>
<div style="left:833.55px;top:690px;width:1.4px;height:3.5px;background:#4a4a4a;"></div>
<div style="left:868.25px;top:690px;width:1.4px;height:3.5px;background:#4a4a4a;"></div>
<div style="left:902.95px;top:690px;width:1.4px;height:3.5px;background:#4a4a4a;"></div>
<div style="left:937.54px;top:690px;width:1.6px;height:12.5px;background:#4a4a4a;"></div>
<div style="left:938.34px;top:701px;width:3.5px;height:1.5px;background:#4a4a4a;"></div>
<div class="t" style="left:942.84px;top:693.72px;width:600px;font-size:15.45px;line-height:15.45px;color:#161616;font-weight:400;text-align:left;transform:scaleX(1.13);transform-origin:left 50%;">0:25</div>
<div style="left:972.34px;top:690px;width:1.4px;height:3.5px;background:#4a4a4a;"></div>
<div style="left:1007.04px;top:690px;width:1.4px;height:3.5px;background:#4a4a4a;"></div>
<div style="left:1041.74px;top:690px;width:1.4px;height:3.5px;background:#4a4a4a;"></div>
<div style="left:1076.43px;top:690px;width:1.4px;height:3.5px;background:#4a4a4a;"></div>
<div style="left:1111.03px;top:690px;width:1.6px;height:12.5px;background:#4a4a4a;"></div>
<div style="left:1111.83px;top:701px;width:3.5px;height:1.5px;background:#4a4a4a;"></div>
<div class="t" style="left:1116.33px;top:693.72px;width:600px;font-size:15.45px;line-height:15.45px;color:#161616;font-weight:400;text-align:left;transform:scaleX(1.13);transform-origin:left 50%;">0:30</div>
<div style="left:1145.83px;top:690px;width:1.4px;height:3.5px;background:#4a4a4a;"></div>
<div style="left:1180.53px;top:690px;width:1.4px;height:3.5px;background:#4a4a4a;"></div>
<div style="left:1215.23px;top:690px;width:1.4px;height:3.5px;background:#4a4a4a;"></div>
<div style="left:1249.92px;top:690px;width:1.4px;height:3.5px;background:#4a4a4a;"></div>
<div style="left:1284.52px;top:690px;width:1.6px;height:12.5px;background:#4a4a4a;"></div>
<div style="left:1285.32px;top:701px;width:3.5px;height:1.5px;background:#4a4a4a;"></div>
<div class="t" style="left:1289.82px;top:693.72px;width:600px;font-size:15.45px;line-height:15.45px;color:#161616;font-weight:400;text-align:left;transform:scaleX(1.13);transform-origin:left 50%;">0:35</div>
<div style="left:1319.32px;top:690px;width:1.4px;height:3.5px;background:#4a4a4a;"></div>
<div style="left:1354.02px;top:690px;width:1.4px;height:3.5px;background:#4a4a4a;"></div>
<div style="left:1388.71px;top:690px;width:1.4px;height:3.5px;background:#4a4a4a;"></div>
<div style="left:1423.41px;top:690px;width:1.4px;height:3.5px;background:#4a4a4a;"></div>
<div style="left:1458.01px;top:690px;width:1.6px;height:12.5px;background:#4a4a4a;"></div>
<div style="left:1458.81px;top:701px;width:3.5px;height:1.5px;background:#4a4a4a;"></div>
<div class="t" style="left:1463.31px;top:693.72px;width:600px;font-size:15.45px;line-height:15.45px;color:#161616;font-weight:400;text-align:left;transform:scaleX(1.13);transform-origin:left 50%;">0:40</div>
<div style="left:1492.81px;top:690px;width:1.4px;height:3.5px;background:#4a4a4a;"></div>
<div style="left:70px;top:691.5px;width:2.2px;height:6.0px;background:#aee9f5;"></div>
<svg style="position:absolute;left:541px;top:691px;" width="8" height="8" viewBox="0 0 8 8"><polygon points="1,1 6,1 6,6" fill="#aee6f5"/></svg>
<div style="left:1508px;top:153px;width:45.5px;height:20px;background:#d6d6d6;border:2px solid #383838;border-radius:10px;"></div>
<div class="t" style="left:1230.7px;top:155.42px;width:600px;font-size:15.45px;line-height:15.45px;color:#111;font-weight:400;text-align:center;transform:scaleX(1.13);transform-origin:center 50%;">Set</div>
<div style="left:1571.5px;top:153px;width:36.5px;height:20.3px;background:#d6d6d6;border:2px solid #383838;"></div>
<svg style="position:absolute;left:1572px;top:153.5px;" width="36" height="19.5" viewBox="0 0 36 19.5"><circle cx="14.1" cy="13.2" r="2.3" fill="#111"/><circle cx="21.8" cy="6.6" r="2.3" fill="#111"/><path d="M14.1,13.2 L21.8,6.6" stroke="#111" stroke-width="1.6"/></svg>
<div style="left:1614px;top:153px;width:36.5px;height:20.3px;background:#d6d6d6;border:2px solid #383838;"></div>
<svg style="position:absolute;left:1614px;top:153.5px;" width="36" height="19.5" viewBox="0 0 36 19.5"><path d="M14.5,9 V7 A3.5,3.5 0 0 1 21.5,7 V9" stroke="#111" stroke-width="1.8" fill="none"/><rect x="12.5" y="9" width="11" height="6.5" fill="#111"/></svg>
<svg style="position:absolute;left:1507.3px;top:180.5px;" width="22" height="22" viewBox="0 0 22 22"><circle cx="11" cy="11" r="9.4" fill="#d6d6d6" stroke="#383838" stroke-width="2"/><path d="M8,11 H16.5" stroke="#111" stroke-width="1.8"/><polygon points="4.8,11 10.3,6.3 10.3,15.7" fill="#111"/></svg>
<svg style="position:absolute;left:1532.4px;top:180.5px;" width="22" height="22" viewBox="0 0 22 22"><circle cx="11" cy="11" r="9.4" fill="#d6d6d6" stroke="#383838" stroke-width="2"/><path d="M5.5,11 H14" stroke="#111" stroke-width="1.8"/><polygon points="17.2,11 11.7,6.3 11.7,15.7" fill="#111"/></svg>
<div style="left:1503.2px;top:208px;width:458.3px;height:482px;background:#575757;"></div>
<div style="left:1503.2px;top:211px;width:147.8px;height:27px;background:#ff9a32;"></div>
<svg style="position:absolute;left:1507px;top:214.5px;" width="20" height="20" viewBox="0 0 20 20"><circle cx="10" cy="10" r="8.9" stroke="#3a2410" stroke-width="1.4" fill="none"/><polygon points="7.8,5.2 14.2,10 7.8,14.8" fill="#3a2410"/></svg>
<div class="t" style="left:1533.5px;top:217.22px;width:600px;font-size:15.45px;line-height:15.45px;color:#3a2410;font-weight:700;text-align:left;transform:scaleX(1.06);transform-origin:left 50%;">1 Drums</div>
<div style="left:1654px;top:211px;width:117px;height:27px;background:#a5a5a5;"></div>
<div style="left:1774px;top:211px;width:187.5px;height:27px;background:#a5a5a5;"></div>
<div style="left:1657px;top:215px;width:110px;height:19.5px;background:#a2a2a2;border:2px solid #4e4e4e;"></div>
<div style="left:1777px;top:215px;width:72px;height:19.5px;background:#ffad2a;border:1.5px solid #5a4a30;"></div>
<div class="t" style="left:1513.0px;top:217.42px;width:600px;font-size:15.45px;line-height:15.45px;color:#111;font-weight:700;text-align:center;transform:scaleX(1.06);transform-origin:center 50%;">1</div>
<div style="left:1856.2px;top:215px;width:32.6px;height:19.5px;background:#d8d8d8;border:1.5px solid #4a4a4a;"></div>
<div class="t" style="left:1572.5px;top:217.42px;width:600px;font-size:15.45px;line-height:15.45px;color:#111;font-weight:400;text-align:center;transform:scaleX(1.13);transform-origin:center 50%;">S</div>
<div style="left:1895.9px;top:215px;width:32.3px;height:19.5px;background:#d8d8d8;border:1.5px solid #4a4a4a;"></div>
<svg style="position:absolute;left:1905px;top:217.5px;" width="14" height="14" viewBox="0 0 14 14"><circle cx="7.1" cy="7.2" r="5.7" fill="#111"/><path d="M8.7,3 V7.6 Q8.7,9.4 6.2,9.8" stroke="#d8d8d8" stroke-width="1.4" fill="none"/></svg>
<div style="left:1935px;top:215px;width:4.8px;height:19.5px;background:#111;"></div>
<div style="left:1941.2px;top:215px;width:4.8px;height:19.5px;background:#111;"></div>
<div style="left:1935px;top:216.5px;width:11.5px;height:1.7px;background:#a5a5a5;"></div>
<div style="left:1503.2px;top:241px;width:147.8px;height:27px;background:#c6f6fd;"></div>
<svg style="position:absolute;left:1507px;top:244.5px;" width="20" height="20" viewBox="0 0 20 20"><circle cx="10" cy="10" r="8.9" stroke="#0a0a0a" stroke-width="1.4" fill="none"/><polygon points="7.8,5.2 14.2,10 7.8,14.8" fill="#0a0a0a"/></svg>
<div class="t" style="left:1533.5px;top:247.22px;width:600px;font-size:15.45px;line-height:15.45px;color:#0a0a0a;font-weight:700;text-align:left;transform:scaleX(1.06);transform-origin:left 50%;">2 MIDI</div>
<div style="left:1654px;top:241px;width:117px;height:27px;background:#b6b6b6;"></div>
<div style="left:1774px;top:241px;width:187.5px;height:27px;background:#b6b6b6;"></div>
<div style="left:1657px;top:245px;width:110px;height:19.5px;background:#bcbcbc;border:2px solid #4e4e4e;"></div>
<div style="left:1777px;top:245px;width:72px;height:19.5px;background:#ffad2a;border:1.5px solid #5a4a30;"></div>
<div class="t" style="left:1513.0px;top:247.42px;width:600px;font-size:15.45px;line-height:15.45px;color:#111;font-weight:700;text-align:center;transform:scaleX(1.06);transform-origin:center 50%;">2</div>
<div style="left:1856.2px;top:245px;width:32.6px;height:19.5px;background:#d8d8d8;border:1.5px solid #4a4a4a;"></div>
<div class="t" style="left:1572.5px;top:247.42px;width:600px;font-size:15.45px;line-height:15.45px;color:#111;font-weight:400;text-align:center;transform:scaleX(1.13);transform-origin:center 50%;">S</div>
<div style="left:1895.9px;top:245px;width:32.3px;height:19.5px;background:#df6b70;border:1.5px solid #4a4a4a;"></div>
<svg style="position:absolute;left:1905px;top:247.5px;" width="14" height="14" viewBox="0 0 14 14"><circle cx="7.1" cy="7.2" r="5.7" fill="#111"/><path d="M8.7,3 V7.6 Q8.7,9.4 6.2,9.8" stroke="#df6b70" stroke-width="1.4" fill="none"/></svg>
<svg style="position:absolute;left:1936px;top:245px;" width="10" height="20" viewBox="0 0 10 20"><circle cx="4.6" cy="3.3" r="2.4" fill="#111"/><circle cx="4.6" cy="8.1" r="2.4" fill="#111"/><circle cx="4.6" cy="12.8" r="2.4" fill="#111"/><circle cx="4.6" cy="17.6" r="2.4" fill="#111"/><rect x="3" y="3" width="3.2" height="14" fill="#111"/></svg>
<div style="left:1503.2px;top:271px;width:147.8px;height:136px;background:#c88a2f;"></div>
<svg style="position:absolute;left:1507px;top:274.5px;" width="20" height="20" viewBox="0 0 20 20"><circle cx="10" cy="10" r="8.9" stroke="#3a2a10" stroke-width="1.4" fill="none"/><polygon points="5.5,7.5 14.5,7.5 10,13.5" fill="#3a2a10"/></svg>
<div class="t" style="left:1533.5px;top:277.22px;width:600px;font-size:15.45px;line-height:15.45px;color:#3a2a10;font-weight:700;text-align:left;transform:scaleX(1.06);transform-origin:left 50%;">3 Sine Arp</div>
<div style="left:1654px;top:271px;width:117px;height:136px;background:#a5a5a5;"></div>
<div style="left:1774px;top:271px;width:187.5px;height:136px;background:#a5a5a5;"></div>
<div style="left:1777px;top:275px;width:72px;height:19.5px;background:#ffad2a;border:1.5px solid #5a4a30;"></div>
<div class="t" style="left:1513.0px;top:277.42px;width:600px;font-size:15.45px;line-height:15.45px;color:#111;font-weight:700;text-align:center;transform:scaleX(1.06);transform-origin:center 50%;">3</div>
<div style="left:1856.2px;top:275px;width:32.6px;height:19.5px;background:#d8d8d8;border:1.5px solid #4a4a4a;"></div>
<div class="t" style="left:1572.5px;top:277.42px;width:600px;font-size:15.45px;line-height:15.45px;color:#111;font-weight:400;text-align:center;transform:scaleX(1.13);transform-origin:center 50%;">S</div>
<div style="left:1895.9px;top:275px;width:32.3px;height:19.5px;background:#d8d8d8;border:1.5px solid #4a4a4a;"></div>
<svg style="position:absolute;left:1905px;top:277.5px;" width="14" height="14" viewBox="0 0 14 14"><circle cx="7.1" cy="7.2" r="5.7" fill="#111"/><path d="M8.7,3 V7.6 Q8.7,9.4 6.2,9.8" stroke="#d8d8d8" stroke-width="1.4" fill="none"/></svg>
<div style="left:1935px;top:275px;width:4.8px;height:127px;background:#111;"></div>
<div style="left:1941.2px;top:275px;width:4.8px;height:127px;background:#111;"></div>
<div style="left:1935px;top:288px;width:11.5px;height:1.5px;background:#a5a5a5;"></div>
<div style="left:1503.2px;top:410px;width:147.8px;height:27px;background:#bdf531;"></div>
<svg style="position:absolute;left:1507px;top:413.5px;" width="20" height="20" viewBox="0 0 20 20"><circle cx="10" cy="10" r="8.9" stroke="#2a3210" stroke-width="1.4" fill="none"/><polygon points="7.8,5.2 14.2,10 7.8,14.8" fill="#2a3210"/></svg>
<div class="t" style="left:1533.5px;top:416.22px;width:600px;font-size:15.45px;line-height:15.45px;color:#2a3210;font-weight:700;text-align:left;transform:scaleX(1.06);transform-origin:left 50%;">4 Harp</div>
<div style="left:1654px;top:410px;width:117px;height:27px;background:#a5a5a5;"></div>
<div style="left:1774px;top:410px;width:187.5px;height:27px;background:#a5a5a5;"></div>
<div style="left:1657px;top:414px;width:110px;height:19.5px;background:#a2a2a2;border:2px solid #4e4e4e;"></div>
<div style="left:1777px;top:414px;width:72px;height:19.5px;background:#ffad2a;border:1.5px solid #5a4a30;"></div>
<div class="t" style="left:1513.0px;top:416.42px;width:600px;font-size:15.45px;line-height:15.45px;color:#111;font-weight:700;text-align:center;transform:scaleX(1.06);transform-origin:center 50%;">4</div>
<div style="left:1856.2px;top:414px;width:32.6px;height:19.5px;background:#d8d8d8;border:1.5px solid #4a4a4a;"></div>
<div class="t" style="left:1572.5px;top:416.42px;width:600px;font-size:15.45px;line-height:15.45px;color:#111;font-weight:400;text-align:center;transform:scaleX(1.13);transform-origin:center 50%;">S</div>
<div style="left:1895.9px;top:414px;width:32.3px;height:19.5px;background:#d8d8d8;border:1.5px solid #4a4a4a;"></div>
<svg style="position:absolute;left:1905px;top:416.5px;" width="14" height="14" viewBox="0 0 14 14"><circle cx="7.1" cy="7.2" r="5.7" fill="#111"/><path d="M8.7,3 V7.6 Q8.7,9.4 6.2,9.8" stroke="#d8d8d8" stroke-width="1.4" fill="none"/></svg>
<div style="left:1935px;top:414px;width:4.8px;height:19.5px;background:#111;"></div>
<div style="left:1941.2px;top:414px;width:4.8px;height:19.5px;background:#111;"></div>
<div style="left:1935px;top:415.5px;width:11.5px;height:1.7px;background:#a5a5a5;"></div>
<div style="left:1503.2px;top:440px;width:147.8px;height:27px;background:#0cfb3c;"></div>
<svg style="position:absolute;left:1507px;top:443.5px;" width="20" height="20" viewBox="0 0 20 20"><circle cx="10" cy="10" r="8.9" stroke="#0e3a18" stroke-width="1.4" fill="none"/><polygon points="7.8,5.2 14.2,10 7.8,14.8" fill="#0e3a18"/></svg>
<div class="t" style="left:1533.5px;top:446.22px;width:600px;font-size:15.45px;line-height:15.45px;color:#0e3a18;font-weight:700;text-align:left;transform:scaleX(1.06);transform-origin:left 50%;">5 Sine Chords</div>
<div style="left:1654px;top:440px;width:117px;height:27px;background:#a5a5a5;"></div>
<div style="left:1774px;top:440px;width:187.5px;height:27px;background:#a5a5a5;"></div>
<div style="left:1657px;top:444px;width:110px;height:19.5px;background:#a2a2a2;border:2px solid #4e4e4e;"></div>
<div style="left:1777px;top:444px;width:72px;height:19.5px;background:#ffad2a;border:1.5px solid #5a4a30;"></div>
<div class="t" style="left:1513.0px;top:446.42px;width:600px;font-size:15.45px;line-height:15.45px;color:#111;font-weight:700;text-align:center;transform:scaleX(1.06);transform-origin:center 50%;">5</div>
<div style="left:1856.2px;top:444px;width:32.6px;height:19.5px;background:#d8d8d8;border:1.5px solid #4a4a4a;"></div>
<div class="t" style="left:1572.5px;top:446.42px;width:600px;font-size:15.45px;line-height:15.45px;color:#111;font-weight:400;text-align:center;transform:scaleX(1.13);transform-origin:center 50%;">S</div>
<div style="left:1895.9px;top:444px;width:32.3px;height:19.5px;background:#d8d8d8;border:1.5px solid #4a4a4a;"></div>
<svg style="position:absolute;left:1905px;top:446.5px;" width="14" height="14" viewBox="0 0 14 14"><circle cx="7.1" cy="7.2" r="5.7" fill="#111"/><path d="M8.7,3 V7.6 Q8.7,9.4 6.2,9.8" stroke="#d8d8d8" stroke-width="1.4" fill="none"/></svg>
<div style="left:1935px;top:444px;width:4.8px;height:19.5px;background:#111;"></div>
<div style="left:1941.2px;top:444px;width:4.8px;height:19.5px;background:#111;"></div>
<div style="left:1935px;top:445.5px;width:11.5px;height:1.7px;background:#a5a5a5;"></div>
<div style="left:1503.2px;top:470px;width:147.8px;height:27px;background:#0bfca3;"></div>
<svg style="position:absolute;left:1507px;top:473.5px;" width="20" height="20" viewBox="0 0 20 20"><circle cx="10" cy="10" r="8.9" stroke="#0e3a2a" stroke-width="1.4" fill="none"/><polygon points="7.8,5.2 14.2,10 7.8,14.8" fill="#0e3a2a"/></svg>
<div class="t" style="left:1533.5px;top:476.22px;width:600px;font-size:15.45px;line-height:15.45px;color:#0e3a2a;font-weight:700;text-align:left;transform:scaleX(1.06);transform-origin:left 50%;">6 Lofi Chords</div>
<div style="left:1654px;top:470px;width:117px;height:27px;background:#a5a5a5;"></div>
<div style="left:1774px;top:470px;width:187.5px;height:27px;background:#a5a5a5;"></div>
<div style="left:1657px;top:474px;width:110px;height:19.5px;background:#a2a2a2;border:2px solid #4e4e4e;"></div>
<div style="left:1777px;top:474px;width:72px;height:19.5px;background:#ffad2a;border:1.5px solid #5a4a30;"></div>
<div class="t" style="left:1513.0px;top:476.42px;width:600px;font-size:15.45px;line-height:15.45px;color:#111;font-weight:700;text-align:center;transform:scaleX(1.06);transform-origin:center 50%;">6</div>
<div style="left:1856.2px;top:474px;width:32.6px;height:19.5px;background:#d8d8d8;border:1.5px solid #4a4a4a;"></div>
<div class="t" style="left:1572.5px;top:476.42px;width:600px;font-size:15.45px;line-height:15.45px;color:#111;font-weight:400;text-align:center;transform:scaleX(1.13);transform-origin:center 50%;">S</div>
<div style="left:1895.9px;top:474px;width:32.3px;height:19.5px;background:#d8d8d8;border:1.5px solid #4a4a4a;"></div>
<svg style="position:absolute;left:1905px;top:476.5px;" width="14" height="14" viewBox="0 0 14 14"><circle cx="7.1" cy="7.2" r="5.7" fill="#111"/><path d="M8.7,3 V7.6 Q8.7,9.4 6.2,9.8" stroke="#d8d8d8" stroke-width="1.4" fill="none"/></svg>
<div style="left:1935px;top:474px;width:4.8px;height:19.5px;background:#111;"></div>
<div style="left:1941.2px;top:474px;width:4.8px;height:19.5px;background:#111;"></div>
<div style="left:1935px;top:475.5px;width:11.5px;height:1.7px;background:#a5a5a5;"></div>
<div style="left:1503.2px;top:500px;width:147.8px;height:27px;background:#7dbdf9;"></div>
<svg style="position:absolute;left:1507px;top:503.5px;" width="20" height="20" viewBox="0 0 20 20"><circle cx="10" cy="10" r="8.9" stroke="#1c2c3a" stroke-width="1.4" fill="none"/><polygon points="7.8,5.2 14.2,10 7.8,14.8" fill="#1c2c3a"/></svg>
<div class="t" style="left:1533.5px;top:506.22px;width:600px;font-size:15.45px;line-height:15.45px;color:#1c2c3a;font-weight:700;text-align:left;transform:scaleX(1.06);transform-origin:left 50%;">7 Flute Trills</div>
<div style="left:1654px;top:500px;width:117px;height:27px;background:#a5a5a5;"></div>
<div style="left:1774px;top:500px;width:187.5px;height:27px;background:#a5a5a5;"></div>
<div style="left:1657px;top:504px;width:110px;height:19.5px;background:#a2a2a2;border:2px solid #4e4e4e;"></div>
<div style="left:1777px;top:504px;width:72px;height:19.5px;background:#ffad2a;border:1.5px solid #5a4a30;"></div>
<div class="t" style="left:1513.0px;top:506.42px;width:600px;font-size:15.45px;line-height:15.45px;color:#111;font-weight:700;text-align:center;transform:scaleX(1.06);transform-origin:center 50%;">7</div>
<div style="left:1856.2px;top:504px;width:32.6px;height:19.5px;background:#d8d8d8;border:1.5px solid #4a4a4a;"></div>
<div class="t" style="left:1572.5px;top:506.42px;width:600px;font-size:15.45px;line-height:15.45px;color:#111;font-weight:400;text-align:center;transform:scaleX(1.13);transform-origin:center 50%;">S</div>
<div style="left:1895.9px;top:504px;width:32.3px;height:19.5px;background:#d8d8d8;border:1.5px solid #4a4a4a;"></div>
<svg style="position:absolute;left:1905px;top:506.5px;" width="14" height="14" viewBox="0 0 14 14"><circle cx="7.1" cy="7.2" r="5.7" fill="#111"/><path d="M8.7,3 V7.6 Q8.7,9.4 6.2,9.8" stroke="#d8d8d8" stroke-width="1.4" fill="none"/></svg>
<div style="left:1935px;top:504px;width:4.8px;height:19.5px;background:#111;"></div>
<div style="left:1941.2px;top:504px;width:4.8px;height:19.5px;background:#111;"></div>
<div style="left:1935px;top:505.5px;width:11.5px;height:1.7px;background:#a5a5a5;"></div>
<div style="left:1503.2px;top:530px;width:147.8px;height:27px;background:#4277db;"></div>
<svg style="position:absolute;left:1507px;top:533.5px;" width="20" height="20" viewBox="0 0 20 20"><circle cx="10" cy="10" r="8.9" stroke="#101c36" stroke-width="1.4" fill="none"/><polygon points="7.8,5.2 14.2,10 7.8,14.8" fill="#101c36"/></svg>
<div class="t" style="left:1533.5px;top:536.22px;width:600px;font-size:15.45px;line-height:15.45px;color:#101c36;font-weight:700;text-align:left;transform:scaleX(1.06);transform-origin:left 50%;">8 Violin</div>
<div style="left:1654px;top:530px;width:117px;height:27px;background:#a5a5a5;"></div>
<div style="left:1774px;top:530px;width:187.5px;height:27px;background:#a5a5a5;"></div>
<div style="left:1657px;top:534px;width:110px;height:19.5px;background:#a2a2a2;border:2px solid #4e4e4e;"></div>
<div style="left:1777px;top:534px;width:72px;height:19.5px;background:#ffad2a;border:1.5px solid #5a4a30;"></div>
<div class="t" style="left:1513.0px;top:536.42px;width:600px;font-size:15.45px;line-height:15.45px;color:#111;font-weight:700;text-align:center;transform:scaleX(1.06);transform-origin:center 50%;">8</div>
<div style="left:1856.2px;top:534px;width:32.6px;height:19.5px;background:#d8d8d8;border:1.5px solid #4a4a4a;"></div>
<div class="t" style="left:1572.5px;top:536.42px;width:600px;font-size:15.45px;line-height:15.45px;color:#111;font-weight:400;text-align:center;transform:scaleX(1.13);transform-origin:center 50%;">S</div>
<div style="left:1895.9px;top:534px;width:32.3px;height:19.5px;background:#d8d8d8;border:1.5px solid #4a4a4a;"></div>
<svg style="position:absolute;left:1905px;top:536.5px;" width="14" height="14" viewBox="0 0 14 14"><circle cx="7.1" cy="7.2" r="5.7" fill="#111"/><path d="M8.7,3 V7.6 Q8.7,9.4 6.2,9.8" stroke="#d8d8d8" stroke-width="1.4" fill="none"/></svg>
<div style="left:1935px;top:534px;width:4.8px;height:19.5px;background:#111;"></div>
<div style="left:1941.2px;top:534px;width:4.8px;height:19.5px;background:#111;"></div>
<div style="left:1935px;top:535.5px;width:11.5px;height:1.7px;background:#a5a5a5;"></div>
<div style="left:1503.2px;top:560px;width:147.8px;height:27px;background:#ff2fcf;"></div>
<svg style="position:absolute;left:1507px;top:563.5px;" width="20" height="20" viewBox="0 0 20 20"><circle cx="10" cy="10" r="8.9" stroke="#3a0c30" stroke-width="1.4" fill="none"/><polygon points="7.8,5.2 14.2,10 7.8,14.8" fill="#3a0c30"/></svg>
<div class="t" style="left:1533.5px;top:566.22px;width:600px;font-size:15.45px;line-height:15.45px;color:#3a0c30;font-weight:700;text-align:left;transform:scaleX(1.06);transform-origin:left 50%;">9 Flute Swell</div>
<div style="left:1654px;top:560px;width:117px;height:27px;background:#a5a5a5;"></div>
<div style="left:1774px;top:560px;width:187.5px;height:27px;background:#a5a5a5;"></div>
<div style="left:1657px;top:564px;width:110px;height:19.5px;background:#a2a2a2;border:2px solid #4e4e4e;"></div>
<div style="left:1777px;top:564px;width:72px;height:19.5px;background:#ffad2a;border:1.5px solid #5a4a30;"></div>
<div class="t" style="left:1513.0px;top:566.42px;width:600px;font-size:15.45px;line-height:15.45px;color:#111;font-weight:700;text-align:center;transform:scaleX(1.06);transform-origin:center 50%;">9</div>
<div style="left:1856.2px;top:564px;width:32.6px;height:19.5px;background:#d8d8d8;border:1.5px solid #4a4a4a;"></div>
<div class="t" style="left:1572.5px;top:566.42px;width:600px;font-size:15.45px;line-height:15.45px;color:#111;font-weight:400;text-align:center;transform:scaleX(1.13);transform-origin:center 50%;">S</div>
<div style="left:1895.9px;top:564px;width:32.3px;height:19.5px;background:#d8d8d8;border:1.5px solid #4a4a4a;"></div>
<svg style="position:absolute;left:1905px;top:566.5px;" width="14" height="14" viewBox="0 0 14 14"><circle cx="7.1" cy="7.2" r="5.7" fill="#111"/><path d="M8.7,3 V7.6 Q8.7,9.4 6.2,9.8" stroke="#d8d8d8" stroke-width="1.4" fill="none"/></svg>
<div style="left:1935px;top:564px;width:4.8px;height:19.5px;background:#111;"></div>
<div style="left:1941.2px;top:564px;width:4.8px;height:19.5px;background:#111;"></div>
<div style="left:1935px;top:565.5px;width:11.5px;height:1.7px;background:#a5a5a5;"></div>
<div style="left:1503.2px;top:600px;width:147.8px;height:27px;background:#8f633f;"></div>
<svg style="position:absolute;left:1507px;top:603.5px;" width="20" height="20" viewBox="0 0 20 20"><circle cx="10" cy="10" r="8.9" stroke="#2a1a0c" stroke-width="1.4" fill="none"/><polygon points="7.8,5.2 14.2,10 7.8,14.8" fill="#2a1a0c"/></svg>
<div class="t" style="left:1533.5px;top:606.22px;width:600px;font-size:15.45px;line-height:15.45px;color:#2a1a0c;font-weight:700;text-align:left;transform:scaleX(1.06);transform-origin:left 50%;">A Pitch Hack |</div>
<div style="left:1654px;top:600px;width:117px;height:27px;background:#a5a5a5;"></div>
<div style="left:1774px;top:600px;width:187.5px;height:27px;background:#a5a5a5;"></div>
<div style="left:1657px;top:604px;width:110px;height:19.5px;background:#a2a2a2;border:2px solid #4e4e4e;"></div>
<div style="left:1777px;top:604px;width:72px;height:19.5px;background:#ffad2a;border:1.5px solid #5a4a30;"></div>
<div class="t" style="left:1513.0px;top:606.42px;width:600px;font-size:15.45px;line-height:15.45px;color:#111;font-weight:700;text-align:center;transform:scaleX(1.06);transform-origin:center 50%;">A</div>
<div style="left:1856.3px;top:604px;width:25.7px;height:19.5px;background:#d8d8d8;border:1.5px solid #4a4a4a;"></div>
<div class="t" style="left:1569.2px;top:606.42px;width:600px;font-size:15.45px;line-height:15.45px;color:#111;font-weight:400;text-align:center;transform:scaleX(1.13);transform-origin:center 50%;">S</div>
<div style="left:1889.2px;top:604px;width:39.1px;height:19.5px;background:#ffad2a;border:1.5px solid #5a4a30;"></div>
<div class="t" style="left:1608.8px;top:606.42px;width:600px;font-size:15.45px;line-height:15.45px;color:#111;font-weight:400;text-align:center;transform:scaleX(1.13);transform-origin:center 50%;">Post</div>
<div style="left:1935px;top:604px;width:4.8px;height:19.5px;background:#111;"></div>
<div style="left:1941.2px;top:604px;width:4.8px;height:19.5px;background:#111;"></div>
<div style="left:1935px;top:605.5px;width:11.5px;height:1.7px;background:#a5a5a5;"></div>
<div style="left:1503.2px;top:630px;width:147.8px;height:27px;background:#ffea3e;"></div>
<svg style="position:absolute;left:1507px;top:633.5px;" width="20" height="20" viewBox="0 0 20 20"><circle cx="10" cy="10" r="8.9" stroke="#3a3410" stroke-width="1.4" fill="none"/><polygon points="7.8,5.2 14.2,10 7.8,14.8" fill="#3a3410"/></svg>
<div class="t" style="left:1533.5px;top:636.22px;width:600px;font-size:15.45px;line-height:15.45px;color:#3a3410;font-weight:700;text-align:left;transform:scaleX(1.06);transform-origin:left 50%;word-spacing:3px;">B Delay</div>
<div style="left:1654px;top:630px;width:117px;height:27px;background:#a5a5a5;"></div>
<div style="left:1774px;top:630px;width:187.5px;height:27px;background:#a5a5a5;"></div>
<div style="left:1657px;top:634px;width:110px;height:19.5px;background:#a2a2a2;border:2px solid #4e4e4e;"></div>
<div style="left:1777px;top:634px;width:72px;height:19.5px;background:#ffad2a;border:1.5px solid #5a4a30;"></div>
<div class="t" style="left:1513.0px;top:636.42px;width:600px;font-size:15.45px;line-height:15.45px;color:#111;font-weight:700;text-align:center;transform:scaleX(1.06);transform-origin:center 50%;">B</div>
<div style="left:1856.3px;top:634px;width:25.7px;height:19.5px;background:#d8d8d8;border:1.5px solid #4a4a4a;"></div>
<div class="t" style="left:1569.2px;top:636.42px;width:600px;font-size:15.45px;line-height:15.45px;color:#111;font-weight:400;text-align:center;transform:scaleX(1.13);transform-origin:center 50%;">S</div>
<div style="left:1889.2px;top:634px;width:39.1px;height:19.5px;background:#ffad2a;border:1.5px solid #5a4a30;"></div>
<div class="t" style="left:1608.8px;top:636.42px;width:600px;font-size:15.45px;line-height:15.45px;color:#111;font-weight:400;text-align:center;transform:scaleX(1.13);transform-origin:center 50%;">Post</div>
<div style="left:1935px;top:634px;width:4.8px;height:19.5px;background:#111;"></div>
<div style="left:1941.2px;top:634px;width:4.8px;height:19.5px;background:#111;"></div>
<div style="left:1935px;top:635.5px;width:11.5px;height:1.7px;background:#a5a5a5;"></div>
<div style="left:1503.2px;top:660px;width:147.8px;height:27px;background:#7efc6a;"></div>
<svg style="position:absolute;left:1507px;top:663.5px;" width="20" height="20" viewBox="0 0 20 20"><circle cx="10" cy="10" r="8.9" stroke="#173a14" stroke-width="1.4" fill="none"/><polygon points="7.8,5.2 14.2,10 7.8,14.8" fill="#173a14"/></svg>
<div class="t" style="left:1537.5px;top:666.22px;width:600px;font-size:15.45px;line-height:15.45px;color:#173a14;font-weight:700;text-align:left;transform:scaleX(1.06);transform-origin:left 50%;">Main</div>
<div style="left:1654px;top:660px;width:117px;height:27px;background:#a5a5a5;"></div>
<div style="left:1774px;top:660px;width:187.5px;height:27px;background:#a5a5a5;"></div>
<div style="left:1657px;top:664.4px;width:109.5px;height:18.8px;background:#e2e2e2;border:2px solid #383838;"></div>
<svg style="position:absolute;left:1660px;top:667px;" width="12" height="14" viewBox="0 0 12 14"><rect x="1" y="4" width="2.4" height="9" fill="#111"/><rect x="5.5" y="4" width="2.4" height="9" fill="#111"/><rect x="1" y="1" width="2.4" height="2" fill="#111"/><rect x="5.5" y="1" width="2.4" height="2" fill="#111"/></svg>
<div class="t" style="left:1675px;top:666.42px;width:600px;font-size:15.45px;line-height:15.45px;color:#111;font-weight:400;text-align:left;transform:scaleX(1.13);transform-origin:left 50%;">1/2</div>
<svg style="position:absolute;left:1752.0px;top:670.05px;" width="10" height="7.5" viewBox="0 0 10 7.5"><polygon points="0,0 10,0 5.0,7.5" fill="#111"/></svg>
<div style="left:1777px;top:664.4px;width:72px;height:18.8px;background:#e2e2e2;border:2px solid #383838;"></div>
<div style="left:1779px;top:666.4px;width:58px;height:14.8px;background:#00bfd8;"></div>
<div class="t" style="left:1513.0px;top:666.42px;width:600px;font-size:15.45px;line-height:15.45px;color:#111;font-weight:400;text-align:center;transform:scaleX(1.13);transform-origin:center 50%;">0</div>
<div style="left:1856.3px;top:664.4px;width:70.7px;height:18.8px;background:#e2e2e2;border:2px solid #383838;"></div>
<div style="left:1858.3px;top:666.4px;width:48.2px;height:14.8px;background:#1a6fe8;"></div>
<div class="t" style="left:1591.6px;top:666.42px;width:600px;font-size:15.45px;line-height:15.45px;color:#111;font-weight:400;text-align:center;transform:scaleX(1.13);transform-origin:center 50%;">-6.0</div>
<div style="left:1935px;top:664px;width:4.8px;height:19.5px;background:#111;"></div>
<div style="left:1941.2px;top:664px;width:4.8px;height:19.5px;background:#111;"></div>
<div style="left:1935px;top:665.5px;width:11.5px;height:1.7px;background:#a5a5a5;"></div>
<div style="left:1657.3px;top:275.1px;width:109.6px;height:19.4px;background:#e2e2e2;border:2px solid #383838;"></div>
<div class="t" style="left:1661.3px;top:276.92px;width:600px;font-size:15.45px;line-height:15.45px;color:#111;font-weight:400;text-align:left;transform:scaleX(1.13);transform-origin:left 50%;white-space:nowrap;">All Ins</div>
<svg style="position:absolute;left:1751.9px;top:281.35px;" width="10" height="7.5" viewBox="0 0 10 7.5"><polygon points="0,0 10,0 5.0,7.5" fill="#111"/></svg>
<div style="left:1657.3px;top:302px;width:109.6px;height:19.7px;background:#e2e2e2;border:2px solid #383838;"></div>
<svg style="position:absolute;left:1660px;top:304.5px;" width="10" height="15" viewBox="0 0 10 15"><rect x="2" y="1" width="3.8" height="13" rx="1.8" fill="#111"/></svg>
<div class="t" style="left:1674px;top:304.22px;width:600px;font-size:15.45px;line-height:15.45px;color:#111;font-weight:400;text-align:left;transform:scaleX(1.13);transform-origin:left 50%;width:82px;overflow:hidden;white-space:nowrap;">All Channe</div>
<svg style="position:absolute;left:1752.0px;top:308.25px;" width="10" height="7.5" viewBox="0 0 10 7.5"><polygon points="0,0 10,0 5.0,7.5" fill="#111"/></svg>
<div style="left:1657.3px;top:328.8px;width:25.9px;height:20.0px;background:#d8d8d8;border:2px solid #383838;"></div>
<div class="t" style="left:1370.2px;top:331.22px;width:600px;font-size:15.45px;line-height:15.45px;color:#111;font-weight:400;text-align:center;transform:scaleX(1.13);transform-origin:center 50%;">In</div>
<div style="left:1688.4px;top:328.8px;width:42.1px;height:20.0px;background:#ffad2a;border:2px solid #383838;"></div>
<div class="t" style="left:1409.5px;top:331.22px;width:600px;font-size:15.45px;line-height:15.45px;color:#111;font-weight:400;text-align:center;transform:scaleX(1.13);transform-origin:center 50%;">Auto</div>
<div style="left:1736.2px;top:328.8px;width:30.7px;height:20.0px;background:#d8d8d8;border:2px solid #383838;"></div>
<div class="t" style="left:1451.5px;top:331.22px;width:600px;font-size:15.45px;line-height:15.45px;color:#111;font-weight:400;text-align:center;transform:scaleX(1.13);transform-origin:center 50%;">Off</div>
<div style="left:1657.3px;top:355.4px;width:109.6px;height:19.9px;background:#e2e2e2;border:2px solid #383838;"></div>
<div class="t" style="left:1661.3px;top:357.72px;width:600px;font-size:15.45px;line-height:15.45px;color:#111;font-weight:400;text-align:left;transform:scaleX(1.13);transform-origin:left 50%;white-space:nowrap;">Main</div>
<svg style="position:absolute;left:1751.9px;top:361.9px;" width="10" height="7.5" viewBox="0 0 10 7.5"><polygon points="0,0 10,0 5.0,7.5" fill="#111"/></svg>
<div style="left:1657.3px;top:382.4px;width:109.6px;height:19.6px;background:#a2a2a2;border:2px solid #4e4e4e;"></div>
<div style="left:1777px;top:302px;width:72px;height:19.7px;background:#e2e2e2;border:2px solid #383838;"></div>
<div style="left:1779px;top:304px;width:50px;height:15.7px;background:#00bfd8;"></div>
<div class="t" style="left:1513.0px;top:304.22px;width:600px;font-size:15.45px;line-height:15.45px;color:#111;font-weight:400;text-align:center;transform:scaleX(1.13);transform-origin:center 50%;">-5.0</div>
<div style="left:1856.2px;top:302px;width:72.0px;height:19.7px;background:#e2e2e2;border:2px solid #383838;"></div>
<div class="t" style="left:1592.2px;top:304.22px;width:600px;font-size:15.45px;line-height:15.45px;color:#111;font-weight:400;text-align:center;transform:scaleX(1.13);transform-origin:center 50%;">C</div>
<div style="left:1777px;top:328.8px;width:46.6px;height:20.0px;background:#e2e2e2;border:2px solid #383838;"></div>
<svg style="position:absolute;left:1789.5px;top:333.3px;" width="24" height="11" viewBox="0 0 24 11"><path d="M0,5.5 H6.6" stroke="#111" stroke-width="1.6"/><ellipse cx="12.4" cy="5.5" rx="3.4" ry="2.9" stroke="#111" stroke-width="1.6" fill="none"/><ellipse cx="19.4" cy="5.5" rx="3.4" ry="2.9" stroke="#111" stroke-width="1.6" fill="none"/></svg>
<div style="left:1829.5px;top:328.8px;width:46.8px;height:20.0px;background:#e2e2e2;border:2px solid #383838;"></div>
<svg style="position:absolute;left:1842px;top:333.3px;" width="24" height="11" viewBox="0 0 24 11"><path d="M0,5.5 H6.6" stroke="#111" stroke-width="1.6"/><ellipse cx="12.4" cy="5.5" rx="3.4" ry="2.9" stroke="#111" stroke-width="1.6" fill="none"/><ellipse cx="19.4" cy="5.5" rx="3.4" ry="2.9" stroke="#111" stroke-width="1.6" fill="none"/></svg>
<div style="left:1503.2px;top:590px;width:147.8px;height:5.5px;background:#809aff;"></div>
<div style="left:1654px;top:590px;width:117px;height:5.5px;background:#a5a5a5;"></div>
<div style="left:1774px;top:590px;width:187.5px;height:5.5px;background:#a5a5a5;"></div>
<svg style="position:absolute;left:1507px;top:592px;" width="20" height="3.5" viewBox="0 0 20 3.5"><circle cx="10" cy="12" r="8.9" stroke="#1c2440" stroke-width="1.4" fill="none"/></svg>
<div style="left:1657px;top:593.6px;width:110px;height:1.9px;background:#4e4e4e;"></div>
<div style="left:1777px;top:593.6px;width:72px;height:1.9px;background:#5a4a30;"></div>
<div style="left:1856.2px;top:593.6px;width:32.6px;height:1.9px;background:#4a4a4a;"></div>
<div style="left:1895.9px;top:593.6px;width:32.3px;height:1.9px;background:#4a4a4a;"></div>
<div style="left:1935px;top:593.6px;width:4.8px;height:1.9px;background:#111;"></div>
<div style="left:1941.2px;top:593.6px;width:4.8px;height:1.9px;background:#111;"></div>
<div style="left:1503.2px;top:595.5px;width:458.3px;height:4.5px;background:#555;"></div>
<div style="left:1503.9px;top:697px;width:22.8px;height:19.5px;background:#ffad2a;border:1.5px solid #4a4a4a;"></div>
<svg style="position:absolute;left:1503.9px;top:697px;" width="23" height="19.5" viewBox="0 0 23 19.5"><path d="M5.5,8 V12 M8.5,5 V15 M11.5,3 V17 M14.5,6 V14 M17.5,8.5 V11.5" stroke="#111" stroke-width="1.5"/></svg>
<div style="left:1532.4px;top:697px;width:54.0px;height:19.5px;background:#e2e2e2;border:1.5px solid #4a4a4a;"></div>
<div style="left:1533.9px;top:698.5px;width:14.7px;height:16.5px;background:#00bcd6;"></div>
<div class="t" style="left:1259.4px;top:698.92px;width:600px;font-size:15.45px;line-height:15.45px;color:#111;font-weight:400;text-align:center;transform:scaleX(1.13);transform-origin:center 50%;">1.00x</div>
<div style="left:1597.5px;top:697px;width:21.8px;height:19.5px;background:#d8d8d8;border:1.5px solid #4a4a4a;"></div>
<div class="t" style="left:1308.4px;top:698.92px;width:600px;font-size:15.45px;line-height:15.45px;color:#111;font-weight:400;text-align:center;transform:scaleX(1.13);transform-origin:center 50%;">H</div>
<div style="left:1625.5px;top:697px;width:22.5px;height:19.5px;background:#d8d8d8;border:1.5px solid #4a4a4a;"></div>
<div class="t" style="left:1336.8px;top:698.92px;width:600px;font-size:15.45px;line-height:15.45px;color:#111;font-weight:400;text-align:center;transform:scaleX(1.13);transform-origin:center 50%;">W</div>
<svg style="position:absolute;left:60.3px;top:806px;" width="6" height="170" viewBox="0 0 6 170"><circle cx="3" cy="5.0" r="2.3" fill="#121212"/><circle cx="3" cy="12.9" r="2.3" fill="#121212"/><circle cx="3" cy="20.8" r="2.3" fill="#121212"/><circle cx="3" cy="28.7" r="2.3" fill="#121212"/><circle cx="3" cy="36.6" r="2.3" fill="#121212"/><circle cx="3" cy="44.5" r="2.3" fill="#121212"/><circle cx="3" cy="52.4" r="2.3" fill="#121212"/><circle cx="3" cy="60.3" r="2.3" fill="#121212"/><circle cx="3" cy="68.2" r="2.3" fill="#121212"/><circle cx="3" cy="76.1" r="2.3" fill="#121212"/><circle cx="3" cy="84.0" r="2.3" fill="#121212"/><circle cx="3" cy="91.9" r="2.3" fill="#121212"/><circle cx="3" cy="99.8" r="2.3" fill="#121212"/><circle cx="3" cy="107.7" r="2.3" fill="#121212"/><circle cx="3" cy="115.6" r="2.3" fill="#121212"/><circle cx="3" cy="123.5" r="2.3" fill="#121212"/><circle cx="3" cy="131.4" r="2.3" fill="#121212"/><circle cx="3" cy="139.3" r="2.3" fill="#121212"/><circle cx="3" cy="147.2" r="2.3" fill="#121212"/><circle cx="3" cy="155.1" r="2.3" fill="#121212"/><circle cx="3" cy="163.0" r="2.3" fill="#121212"/></svg>
<div style="left:70px;top:738px;width:370px;height:297px;background:#bdbdbd;border-radius:6px;"></div>
<div style="left:70px;top:738px;width:370px;height:26px;background:#c5c5c5;border-radius:6px 6px 0 0;"></div>
<svg style="position:absolute;left:74.2px;top:740px;" width="22" height="22" viewBox="0 0 22 22"><circle cx="11" cy="11" r="9.6" fill="#ffad2a" stroke="#3a3a3a" stroke-width="1"/></svg>
<div class="t" style="left:102.7px;top:743.36px;width:600px;font-size:14.94px;line-height:14.94px;color:#0c0c0c;font-weight:700;text-align:left;transform:scaleX(1.06);transform-origin:left 50%;">Future Bounce</div>
<div class="t" style="left:308px;top:743.09px;width:600px;font-size:15.96px;line-height:15.96px;color:#111;font-weight:400;text-align:left;transform:scaleX(0.99);transform-origin:left 50%;">MPE</div>
<svg style="position:absolute;left:344.5px;top:743px;" width="16" height="16" viewBox="0 0 16 16"><rect x="1.1" y="2.6" width="14" height="10.7" rx="1.6" fill="#4a4a4a"/><rect x="2.6" y="6" width="11" height="5.8" fill="#c4c4c4"/><rect x="4.2" y="1" width="1.6" height="2" fill="#4a4a4a"/><rect x="10.4" y="1" width="1.6" height="2" fill="#4a4a4a"/><rect x="4.2" y="13" width="1.6" height="1.8" fill="#4a4a4a"/><rect x="10.4" y="13" width="1.6" height="1.8" fill="#4a4a4a"/></svg>
<svg style="position:absolute;left:364.5px;top:741px;" width="20" height="20" viewBox="0 0 20 20"><circle cx="10" cy="10" r="9.2" fill="#d3d3d3" stroke="#3a3a3a" stroke-width="1.3"/><path d="M13.2,5.9 A4.7,4.7 0 0 0 5.5,9.4" stroke="#111" stroke-width="1.9" fill="none"/><polygon points="3.2,8.6 8.2,8.8 5.4,12.4" fill="#111"/><path d="M6.8,14.1 A4.7,4.7 0 0 0 14.5,10.6" stroke="#111" stroke-width="1.9" fill="none"/><polygon points="16.8,11.4 11.8,11.2 14.6,7.6" fill="#111"/></svg>
<svg style="position:absolute;left:389.4px;top:741px;" width="20" height="20" viewBox="0 0 20 20"><circle cx="10" cy="10" r="9.2" fill="#d3d3d3" stroke="#3a3a3a" stroke-width="1.3"/><rect x="5" y="5" width="10" height="10" rx="1" fill="#111"/><rect x="7.5" y="5.5" width="5" height="3" fill="#d6d6d6"/></svg>
<svg style="position:absolute;left:414.6px;top:741px;" width="20" height="20" viewBox="0 0 20 20"><circle cx="10" cy="10" r="9.2" fill="#d3d3d3" stroke="#3a3a3a" stroke-width="1.3"/><circle cx="5.8" cy="10" r="1.5" fill="#111"/><circle cx="10" cy="10" r="1.5" fill="#111"/><circle cx="14.2" cy="10" r="1.5" fill="#111"/></svg>
<div style="left:73px;top:764px;width:363px;height:173.3px;background:#0f0f0f;border-radius:3px;"></div>
<div class="t" style="left:81px;top:775.72px;width:600px;font-size:15.45px;line-height:15.45px;color:#b8862c;font-weight:400;text-align:left;transform:scaleX(1.13);transform-origin:left 50%;">G Minor 11</div>
<div class="t" style="left:259.5px;top:775.42px;width:600px;font-size:15.45px;line-height:15.45px;color:#c5c5c5;font-weight:400;text-align:left;transform:scaleX(1.13);transform-origin:left 50%;">Tr.</div>
<div class="t" style="left:289px;top:775.42px;width:600px;font-size:15.45px;line-height:15.45px;color:#ffad2a;font-weight:400;text-align:left;transform:scaleX(1.02);transform-origin:left 50%;-webkit-text-stroke:0.25px currentColor;">0 st</div>
<svg style="position:absolute;left:347.9px;top:770.7px;" width="24" height="23" viewBox="0 0 24 23"><rect x="0" y="0" width="24" height="23" fill="#ffad2a"/><rect x="3.1" y="3.2" width="17.8" height="16.6" fill="#111"/><rect x="4.4" y="4.5" width="15.2" height="14" fill="#ffad2a"/><rect x="6" y="6.1" width="4.9" height="4.6" fill="#111"/><rect x="12.8" y="6.1" width="4.9" height="4.6" fill="#111"/><rect x="6" y="12.3" width="4.9" height="4.6" fill="#111"/><rect x="12.8" y="12.3" width="4.9" height="4.6" fill="#111"/></svg>
<svg style="position:absolute;left:380.8px;top:773.5px;" width="18.5" height="18.5" viewBox="0 0 18.5 18.5"><rect x="0" y="0" width="18.5" height="18.5" fill="#ffad2a"/><rect x="1.6" y="1.6" width="15.3" height="15.3" fill="#111"/><rect x="2.6" y="2.6" width="3.6" height="13.3" fill="#ffad2a"/><rect x="7.45" y="2.6" width="3.6" height="13.3" fill="#ffad2a"/><rect x="12.3" y="2.6" width="3.6" height="13.3" fill="#ffad2a"/><rect x="5.2" y="2" width="2.6" height="9.5" fill="#111"/><rect x="10.6" y="2" width="2.6" height="9.5" fill="#111"/><rect x="5.9" y="2.6" width="1.2" height="8.6" fill="#ffad2a"/><rect x="11.3" y="2.6" width="1.2" height="8.6" fill="#ffad2a"/></svg>
<svg style="position:absolute;left:409.7px;top:772.5px;" width="20" height="20" viewBox="0 0 20 20"><circle cx="10" cy="10" r="8.8" stroke="#00d4f0" stroke-width="1.8" fill="none"/><polygon points="5,7.3 15,7.3 10,15" fill="#00d4f0"/></svg>
<div style="left:79.8px;top:801.9px;width:40.7px;height:18.6px;background:#2c2411;"></div>
<div style="left:124px;top:801.9px;width:40.7px;height:18.6px;background:#2c2411;"></div>
<div style="left:168px;top:801.9px;width:40.7px;height:18.6px;background:#2c2411;"></div>
<div style="left:212px;top:801.9px;width:40.7px;height:18.6px;background:#2c2411;"></div>
<div style="left:256.4px;top:801.9px;width:40.7px;height:18.6px;background:#2c2411;"></div>
<div style="left:300.9px;top:801.9px;width:40.7px;height:18.6px;background:#2c2411;"></div>
<div style="left:345px;top:801.9px;width:40.7px;height:18.6px;background:#2c2411;"></div>
<div style="left:389px;top:801.9px;width:40.7px;height:18.6px;background:#2c2411;"></div>
<div style="left:79.8px;top:824px;width:40.7px;height:18.6px;background:#2c2411;"></div>
<div style="left:124px;top:824px;width:40.7px;height:18.6px;background:#2c2411;"></div>
<div style="left:168px;top:824px;width:40.7px;height:18.6px;background:#2c2411;"></div>
<div style="left:212px;top:824px;width:40.7px;height:18.6px;background:#2c2411;"></div>
<div style="left:256.4px;top:824px;width:40.7px;height:18.6px;background:#2c2411;"></div>
<div style="left:300.9px;top:824px;width:40.7px;height:18.6px;background:#2c2411;"></div>
<div style="left:345px;top:824px;width:40.7px;height:18.6px;background:#2c2411;"></div>
<div style="left:389px;top:824px;width:40.7px;height:18.6px;background:#2c2411;"></div>
<div style="left:79.8px;top:846px;width:40.7px;height:18.6px;background:#2c2411;"></div>
<div style="left:124px;top:846px;width:40.7px;height:18.6px;background:#2c2411;"></div>
<div style="left:168px;top:846px;width:40.7px;height:18.6px;background:#2c2411;"></div>
<div style="left:212px;top:846px;width:40.7px;height:18.6px;background:#2c2411;"></div>
<div style="left:256.4px;top:846px;width:40.7px;height:18.6px;background:#2c2411;"></div>
<div style="left:300.9px;top:846px;width:40.7px;height:18.6px;background:#2c2411;"></div>
<div style="left:345px;top:846px;width:40.7px;height:18.6px;background:#2c2411;"></div>
<div style="left:389px;top:846px;width:40.7px;height:18.6px;background:#2c2411;"></div>
<div style="left:79.8px;top:868px;width:40.7px;height:18.6px;background:#2c2411;"></div>
<div style="left:124px;top:868px;width:40.7px;height:18.6px;background:#2c2411;"></div>
<div style="left:168px;top:868px;width:40.7px;height:18.6px;background:#2c2411;"></div>
<div style="left:212px;top:868px;width:40.7px;height:18.6px;background:#2c2411;"></div>
<div style="left:256.4px;top:868px;width:40.7px;height:18.6px;background:#2c2411;"></div>
<div style="left:300.9px;top:868px;width:40.7px;height:18.6px;background:#2c2411;"></div>
<div style="left:345px;top:868px;width:40.7px;height:18.6px;background:#2c2411;"></div>
<div style="left:389px;top:868px;width:40.7px;height:18.6px;background:#2c2411;"></div>
<div style="left:79.8px;top:890px;width:40.7px;height:18.6px;background:#2c2411;"></div>
<div style="left:124px;top:890px;width:40.7px;height:18.6px;background:#2c2411;"></div>
<div style="left:168px;top:890px;width:40.7px;height:18.6px;background:#2c2411;"></div>
<div style="left:212px;top:890px;width:40.7px;height:18.6px;background:#2c2411;"></div>
<div style="left:256.4px;top:890px;width:40.7px;height:18.6px;background:#2c2411;"></div>
<div style="left:300.9px;top:890px;width:40.7px;height:18.6px;background:#2c2411;"></div>
<div style="left:345px;top:890px;width:40.7px;height:18.6px;background:#2c2411;"></div>
<div style="left:389px;top:890px;width:40.7px;height:18.6px;background:#2c2411;"></div>
<div style="left:79.8px;top:912.3px;width:40.7px;height:18.6px;background:#2c2411;"></div>
<div style="left:124px;top:912.3px;width:40.7px;height:18.6px;background:#2c2411;"></div>
<div style="left:168px;top:912.3px;width:40.7px;height:18.6px;background:#936818;"></div>
<div style="left:212px;top:912.3px;width:40.7px;height:18.6px;background:#2c2411;"></div>
<div style="left:256.4px;top:912.3px;width:40.7px;height:18.6px;background:#2c2411;"></div>
<div style="left:300.9px;top:912.3px;width:40.7px;height:18.6px;background:#2c2411;"></div>
<div style="left:345px;top:912.3px;width:40.7px;height:18.6px;background:#2c2411;"></div>
<div style="left:389px;top:912.3px;width:40.7px;height:18.6px;background:#2c2411;"></div>
<div style="left:73px;top:940.6px;width:363px;height:89.4px;background:#a6a6a6;border:1.5px solid #c2c2c2;border-radius:3px;"></div>
<div class="t" style="left:-181.5px;top:948.62px;width:600px;font-size:15.45px;line-height:15.45px;color:#111;font-weight:400;text-align:center;transform:scaleX(1.13);transform-origin:center 50%;">Tilt</div>
<div class="t" style="left:-181.5px;top:1008.62px;width:600px;font-size:15.45px;line-height:15.45px;color:#111;font-weight:400;text-align:center;transform:scaleX(1.13);transform-origin:center 50%;">-20.0 %</div>
<svg style="position:absolute;left:95.9px;top:964.7px;" width="45.2" height="45.2" viewBox="0 0 45.2 45.2"><path d="M12.74,38.37 A18.6,18.6 0 0 1 13.3,6.49" stroke="#00e5ff" stroke-width="3.9" fill="none"/><path d="M15.93,5.24 A18.6,18.6 0 0 1 32.46,38.37" stroke="#161616" stroke-width="3.9" fill="none"/><path d="M22.45,22.34 L12.7,5.45" stroke="#161616" stroke-width="4" stroke-linecap="round"/></svg>
<div class="t" style="left:-101.0px;top:948.62px;width:600px;font-size:15.45px;line-height:15.45px;color:#111;font-weight:400;text-align:center;transform:scaleX(1.13);transform-origin:center 50%;">Invert</div>
<div class="t" style="left:-101.0px;top:1008.62px;width:600px;font-size:15.45px;line-height:15.45px;color:#111;font-weight:400;text-align:center;transform:scaleX(1.13);transform-origin:center 50%;">0</div>
<svg style="position:absolute;left:176.4px;top:964.7px;" width="45.2" height="45.2" viewBox="0 0 45.2 45.2"><path d="M12.74,38.37 A18.6,18.6 0 0 1 22.6,4.0" stroke="#00e5ff" stroke-width="3.9" fill="none"/><path d="M25.51,4.23 A18.6,18.6 0 0 1 32.46,38.37" stroke="#161616" stroke-width="3.9" fill="none"/><path d="M22.6,22.3 L22.6,2.8" stroke="#161616" stroke-width="4" stroke-linecap="round"/></svg>
<div class="t" style="left:-20.2px;top:948.62px;width:600px;font-size:15.45px;line-height:15.45px;color:#111;font-weight:400;text-align:center;transform:scaleX(1.13);transform-origin:center 50%;">Strum</div>
<div class="t" style="left:-20.2px;top:1008.62px;width:600px;font-size:15.45px;line-height:15.45px;color:#111;font-weight:400;text-align:center;transform:scaleX(1.13);transform-origin:center 50%;">0.00 %</div>
<svg style="position:absolute;left:257.2px;top:964.7px;" width="45.2" height="45.2" viewBox="0 0 45.2 45.2"><path d="M10.89,37.05 A18.6,18.6 0 1 1 32.46,38.37" stroke="#161616" stroke-width="3.9" fill="none"/><path d="M22.45,22.86 L12.7,39.75" stroke="#161616" stroke-width="4" stroke-linecap="round"/></svg>
<div class="t" style="left:60.4px;top:948.62px;width:600px;font-size:15.45px;line-height:15.45px;color:#111;font-weight:400;text-align:center;transform:scaleX(1.13);transform-origin:center 50%;">Articulate</div>
<div class="t" style="left:60.4px;top:1008.62px;width:600px;font-size:15.45px;line-height:15.45px;color:#111;font-weight:400;text-align:center;transform:scaleX(1.13);transform-origin:center 50%;">1</div>
<svg style="position:absolute;left:337.8px;top:964.7px;" width="45.2" height="45.2" viewBox="0 0 45.2 45.2"><path d="M10.89,37.05 A18.6,18.6 0 1 1 32.46,38.37" stroke="#6c6c6c" stroke-width="3.9" fill="none"/><path d="M22.45,22.86 L12.7,39.75" stroke="#6c6c6c" stroke-width="4" stroke-linecap="round"/></svg>
<div style="left:389.2px;top:984.2px;width:8.8px;height:1.7px;background:#6a6a6a;"></div>
<div style="left:405px;top:962px;width:20px;height:20px;background:#d6d6d6;border:1.5px solid #555;"></div>
<svg style="position:absolute;left:405px;top:962px;" width="20" height="20" viewBox="0 0 20 20"><path d="M6.6,16 V5 M13.4,4.5 V15.5" stroke="#111" stroke-width="1.3"/><path d="M4.2,7.6 L6.6,4.6 L9,7.6 M11,12.8 L13.4,15.8 L15.8,12.8" stroke="#111" stroke-width="1.3" fill="none"/></svg>
<div style="left:405px;top:989px;width:20px;height:20px;background:#d6d6d6;border:1.5px solid #555;"></div>
<svg style="position:absolute;left:405px;top:989px;" width="20" height="20" viewBox="0 0 20 20"><path d="M3.9,15.7 L7.2,7.2 M3.9,15.7 H15.9 L13.5,9.2 M8.9,11.6 L12.4,3.6" stroke="#111" stroke-width="1.5" fill="none" stroke-linecap="round"/></svg>
<svg style="position:absolute;left:444.2px;top:806px;" width="6" height="170" viewBox="0 0 6 170"><circle cx="3" cy="5.0" r="2.3" fill="#121212"/><circle cx="3" cy="12.9" r="2.3" fill="#121212"/><circle cx="3" cy="20.8" r="2.3" fill="#121212"/><circle cx="3" cy="28.7" r="2.3" fill="#121212"/><circle cx="3" cy="36.6" r="2.3" fill="#121212"/><circle cx="3" cy="44.5" r="2.3" fill="#121212"/><circle cx="3" cy="52.4" r="2.3" fill="#121212"/><circle cx="3" cy="60.3" r="2.3" fill="#121212"/><circle cx="3" cy="68.2" r="2.3" fill="#121212"/><circle cx="3" cy="76.1" r="2.3" fill="#121212"/><circle cx="3" cy="84.0" r="2.3" fill="#121212"/><circle cx="3" cy="91.9" r="2.3" fill="#121212"/><circle cx="3" cy="99.8" r="2.3" fill="#121212"/><circle cx="3" cy="107.7" r="2.3" fill="#121212"/><circle cx="3" cy="115.6" r="2.3" fill="#121212"/><circle cx="3" cy="123.5" r="2.3" fill="#121212"/><circle cx="3" cy="131.4" r="2.3" fill="#121212"/><circle cx="3" cy="139.3" r="2.3" fill="#121212"/><circle cx="3" cy="147.2" r="2.3" fill="#121212"/><circle cx="3" cy="155.1" r="2.3" fill="#121212"/><circle cx="3" cy="163.0" r="2.3" fill="#121212"/></svg>
<div style="left:454.2px;top:738px;width:191.1px;height:297px;background:#111111;border-radius:6px;border:1px solid #2a2a2a;"></div>
<div style="left:454.2px;top:738px;width:191.1px;height:26px;background:#a4c2c7;border-radius:6px 6px 0 0;"></div>
<svg style="position:absolute;left:458px;top:740px;" width="22" height="22" viewBox="0 0 22 22"><circle cx="11" cy="11" r="9.6" fill="#ffad2a" stroke="#3a3a3a" stroke-width="1"/></svg>
<div class="t" style="left:486.6px;top:743.36px;width:600px;font-size:14.94px;line-height:14.94px;color:#0c0c0c;font-weight:700;text-align:left;transform:scaleX(1.06);transform-origin:left 50%;">MI...</div>
<svg style="position:absolute;left:525px;top:738px;" width="26" height="26" viewBox="0 0 26 26"><g stroke="#2b2be8" stroke-width="2.7" stroke-linecap="round"><path d="M7.6,12 L11.5,15.5 M10.4,6 L12.6,12 M14.9,4.6 L15,12 M18.4,5.6 L17.6,12 M21.8,8.6 L19.8,13"/></g><polygon points="11,11.5 20.6,11.5 20.2,16.5 18.6,20.9 13.4,20.9 9.6,15.6" fill="#2b2be8"/></svg>
<svg style="position:absolute;left:549.0px;top:743px;" width="16" height="16" viewBox="0 0 16 16"><rect x="1.1" y="2.6" width="14" height="10.7" rx="1.6" fill="#4a4a4a"/><rect x="2.6" y="6" width="11" height="5.8" fill="#a4c2c7"/><rect x="4.2" y="1" width="1.6" height="2" fill="#4a4a4a"/><rect x="10.4" y="1" width="1.6" height="2" fill="#4a4a4a"/><rect x="4.2" y="13" width="1.6" height="1.8" fill="#4a4a4a"/><rect x="10.4" y="13" width="1.6" height="1.8" fill="#4a4a4a"/></svg>
<svg style="position:absolute;left:569.9px;top:741px;" width="20" height="20" viewBox="0 0 20 20"><circle cx="10" cy="10" r="9.2" fill="#d3d3d3" stroke="#3a3a3a" stroke-width="1.3"/><path d="M13.2,5.9 A4.7,4.7 0 0 0 5.5,9.4" stroke="#111" stroke-width="1.9" fill="none"/><polygon points="3.2,8.6 8.2,8.8 5.4,12.4" fill="#111"/><path d="M6.8,14.1 A4.7,4.7 0 0 0 14.5,10.6" stroke="#111" stroke-width="1.9" fill="none"/><polygon points="16.8,11.4 11.8,11.2 14.6,7.6" fill="#111"/></svg>
<svg style="position:absolute;left:595px;top:741px;" width="20" height="20" viewBox="0 0 20 20"><circle cx="10" cy="10" r="9.2" fill="#d3d3d3" stroke="#3a3a3a" stroke-width="1.3"/><rect x="5" y="5" width="10" height="10" rx="1" fill="#111"/><rect x="7.5" y="5.5" width="5" height="3" fill="#d6d6d6"/></svg>
<svg style="position:absolute;left:620.3px;top:741px;" width="20" height="20" viewBox="0 0 20 20"><circle cx="10" cy="10" r="9.2" fill="#d3d3d3" stroke="#3a3a3a" stroke-width="1.3"/><circle cx="5.8" cy="10" r="1.5" fill="#111"/><circle cx="10" cy="10" r="1.5" fill="#111"/><circle cx="14.2" cy="10" r="1.5" fill="#111"/></svg>
<svg style="position:absolute;left:474.8px;top:801px;" width="142" height="53" viewBox="0 0 142 53"><g fill="#ffffff"><path d="M0,0 H46.9 A5.5,5.5 0 0 1 52.4,5.5 V52.4 H39.8 V13 H32.3 V52.4 H20.3 V13 H13.2 V52.4 H0 Z"/><rect x="59.1" y="0" width="13" height="52.4"/><path d="M78,0 H116.8 A5.5,5.5 0 0 1 122.3,5.5 V46.9 A5.5,5.5 0 0 1 116.8,52.4 H78 V18.9 H91.2 V39.8 H109.1 V12 H78 Z"/><rect x="128.2" y="0" width="13" height="52.4"/></g></svg>
<div style="left:501.7px;top:885.9px;width:84.2px;height:41.7px;background:transparent;border:1.8px solid #ffad2a;border-radius:21px;"></div>
<div class="t" style="left:243.8px;top:898.91px;width:600px;font-size:17.0px;line-height:17.0px;color:#ffad2a;font-weight:700;text-align:center;transform:scaleX(1.06);transform-origin:center 50%;">Bounce</div>
<div style="left:477px;top:957.7px;width:18.7px;height:18.1px;background:#d0d0d0;border:1px solid #3a3a3a;"></div>
<div class="t" style="left:505.8px;top:958.62px;width:600px;font-size:15.45px;line-height:15.45px;color:#d8d8d8;font-weight:700;text-align:left;transform:scaleX(1.06);transform-origin:left 50%;">Delete Temp?</div>
<svg style="position:absolute;left:649.4px;top:806px;" width="6" height="170" viewBox="0 0 6 170"><circle cx="3" cy="5.0" r="2.3" fill="#121212"/><circle cx="3" cy="12.9" r="2.3" fill="#121212"/><circle cx="3" cy="20.8" r="2.3" fill="#121212"/><circle cx="3" cy="28.7" r="2.3" fill="#121212"/><circle cx="3" cy="36.6" r="2.3" fill="#121212"/><circle cx="3" cy="44.5" r="2.3" fill="#121212"/><circle cx="3" cy="52.4" r="2.3" fill="#121212"/><circle cx="3" cy="60.3" r="2.3" fill="#121212"/><circle cx="3" cy="68.2" r="2.3" fill="#121212"/><circle cx="3" cy="76.1" r="2.3" fill="#121212"/><circle cx="3" cy="84.0" r="2.3" fill="#121212"/><circle cx="3" cy="91.9" r="2.3" fill="#121212"/><circle cx="3" cy="99.8" r="2.3" fill="#121212"/><circle cx="3" cy="107.7" r="2.3" fill="#121212"/><circle cx="3" cy="115.6" r="2.3" fill="#121212"/><circle cx="3" cy="123.5" r="2.3" fill="#121212"/><circle cx="3" cy="131.4" r="2.3" fill="#121212"/><circle cx="3" cy="139.3" r="2.3" fill="#121212"/><circle cx="3" cy="147.2" r="2.3" fill="#121212"/><circle cx="3" cy="155.1" r="2.3" fill="#121212"/><circle cx="3" cy="163.0" r="2.3" fill="#121212"/></svg>
<div style="left:660px;top:738px;width:801px;height:297px;background:#bdbdbd;border-radius:6px;"></div>
<div style="left:660px;top:738px;width:801px;height:26px;background:#c5c5c5;border-radius:6px 6px 0 0;"></div>
<svg style="position:absolute;left:663.5px;top:740px;" width="22" height="22" viewBox="0 0 22 22"><circle cx="11" cy="11" r="9.6" fill="#ffad2a" stroke="#3a3a3a" stroke-width="1"/></svg>
<div class="t" style="left:691px;top:743.36px;width:600px;font-size:14.94px;line-height:14.94px;color:#0c0c0c;font-weight:700;text-align:left;transform:scaleX(1.06);transform-origin:left 50%;">Step Arp</div>
<div class="t" style="left:1328.4px;top:743.09px;width:600px;font-size:15.96px;line-height:15.96px;color:#111;font-weight:400;text-align:left;transform:scaleX(0.99);transform-origin:left 50%;">MPE</div>
<svg style="position:absolute;left:1365.0px;top:743px;" width="16" height="16" viewBox="0 0 16 16"><rect x="1.1" y="2.6" width="14" height="10.7" rx="1.6" fill="#4a4a4a"/><rect x="2.6" y="6" width="11" height="5.8" fill="#c4c4c4"/><rect x="4.2" y="1" width="1.6" height="2" fill="#4a4a4a"/><rect x="10.4" y="1" width="1.6" height="2" fill="#4a4a4a"/><rect x="4.2" y="13" width="1.6" height="1.8" fill="#4a4a4a"/><rect x="10.4" y="13" width="1.6" height="1.8" fill="#4a4a4a"/></svg>
<svg style="position:absolute;left:1385.3px;top:741px;" width="20" height="20" viewBox="0 0 20 20"><circle cx="10" cy="10" r="9.2" fill="#d3d3d3" stroke="#3a3a3a" stroke-width="1.3"/><path d="M13.2,5.9 A4.7,4.7 0 0 0 5.5,9.4" stroke="#111" stroke-width="1.9" fill="none"/><polygon points="3.2,8.6 8.2,8.8 5.4,12.4" fill="#111"/><path d="M6.8,14.1 A4.7,4.7 0 0 0 14.5,10.6" stroke="#111" stroke-width="1.9" fill="none"/><polygon points="16.8,11.4 11.8,11.2 14.6,7.6" fill="#111"/></svg>
<svg style="position:absolute;left:1410.5px;top:741px;" width="20" height="20" viewBox="0 0 20 20"><circle cx="10" cy="10" r="9.2" fill="#d3d3d3" stroke="#3a3a3a" stroke-width="1.3"/><rect x="5" y="5" width="10" height="10" rx="1" fill="#111"/><rect x="7.5" y="5.5" width="5" height="3" fill="#d6d6d6"/></svg>
<svg style="position:absolute;left:1435.7px;top:741px;" width="20" height="20" viewBox="0 0 20 20"><circle cx="10" cy="10" r="9.2" fill="#d3d3d3" stroke="#3a3a3a" stroke-width="1.3"/><circle cx="5.8" cy="10" r="1.5" fill="#111"/><circle cx="10" cy="10" r="1.5" fill="#111"/><circle cx="14.2" cy="10" r="1.5" fill="#111"/></svg>
<div style="left:663.4px;top:764.3px;width:89.4px;height:266.2px;background:#a4a4a4;border-radius:4px;"></div>
<div class="t" style="left:408.0px;top:775.22px;width:600px;font-size:15.45px;line-height:15.45px;color:#111;font-weight:400;text-align:center;transform:scaleX(1.13);transform-origin:center 50%;">Division</div>
<svg style="position:absolute;left:685.2px;top:790.2px;" width="45.6" height="45.6" viewBox="0 0 45.6 45.6"><path d="M12.84,38.74 A18.8,18.8 0 1 1 37.2,10.72" stroke="#00e5ff" stroke-width="3.4" fill="none"/><path d="M38.91,13.12 A18.8,18.8 0 0 1 32.76,38.74" stroke="#161616" stroke-width="3.4" fill="none"/><path d="M23.03,22.61 L38.12,9.94" stroke="#161616" stroke-width="4" stroke-linecap="round"/></svg>
<div class="t" style="left:408.0px;top:832.42px;width:600px;font-size:15.45px;line-height:15.45px;color:#111;font-weight:400;text-align:center;transform:scaleX(1.13);transform-origin:center 50%;">1/16</div>
<div style="left:669.8px;top:860.9px;width:35.4px;height:19.3px;background:#d8d8d8;border:1.5px solid #4a4a4a;"></div>
<div class="t" style="left:387.5px;top:863.22px;width:600px;font-size:15.45px;line-height:15.45px;color:#111;font-weight:400;text-align:center;transform:scaleX(1.13);transform-origin:center 50%;">3</div>
<div style="left:711px;top:860.9px;width:35.7px;height:19.3px;background:#d8d8d8;border:1.5px solid #4a4a4a;"></div>
<svg style="position:absolute;left:711px;top:860.9px;" width="35.7" height="19.3" viewBox="0 0 35.7 19.3"><circle cx="17.8" cy="9.7" r="2" fill="#111"/></svg>
<div style="left:669.5px;top:903.3px;width:77.0px;height:19.9px;background:#ffad2a;border:1.5px solid #4a4a4a;"></div>
<div class="t" style="left:408.0px;top:905.72px;width:600px;font-size:15.45px;line-height:15.45px;color:#111;font-weight:400;text-align:center;transform:scaleX(1.13);transform-origin:center 50%;">Sync</div>
<div class="t" style="left:408.0px;top:935.62px;width:600px;font-size:15.45px;line-height:15.45px;color:#111;font-weight:400;text-align:center;transform:scaleX(1.13);transform-origin:center 50%;">BPM</div>
<div style="left:669.5px;top:954px;width:77.0px;height:19.5px;background:#a6a6a6;border:1.5px solid #4a4a4a;"></div>
<div class="t" style="left:408.0px;top:956.22px;width:600px;font-size:15.45px;line-height:15.45px;color:#111;font-weight:400;text-align:center;transform:scaleX(1.13);transform-origin:center 50%;">120</div>
<div class="t" style="left:408.0px;top:986.62px;width:600px;font-size:15.45px;line-height:15.45px;color:#111;font-weight:400;text-align:center;transform:scaleX(1.13);transform-origin:center 50%;">Swing</div>
<div style="left:669.5px;top:1004.7px;width:77.0px;height:19.5px;background:#e4e4e4;border:1.5px solid #4a4a4a;"></div>
<div class="t" style="left:408.0px;top:1006.92px;width:600px;font-size:15.45px;line-height:15.45px;color:#111;font-weight:400;text-align:center;transform:scaleX(1.13);transform-origin:center 50%;">0 %</div>
<div style="left:756.5px;top:764.3px;width:700.5px;height:266.2px;background:#0f0f0f;border-radius:4px;"></div>
<div style="left:756.5px;top:803.6px;width:700.5px;height:1.4px;background:#343434;"></div>
<div class="t" style="left:768.7px;top:776.86px;width:600px;font-size:14.94px;line-height:14.94px;color:#dcdcdc;font-weight:400;text-align:left;transform:scaleX(1.02);transform-origin:left 50%;-webkit-text-stroke:0.25px currentColor;">Octaves</div>
<div class="t" style="left:836.3px;top:776.86px;width:600px;font-size:14.94px;line-height:14.94px;color:#ffad2a;font-weight:400;text-align:left;transform:scaleX(1.02);transform-origin:left 50%;-webkit-text-stroke:0.25px currentColor;">1</div>
<div style="left:864.8px;top:772px;width:23.9px;height:23px;background:#ffad2a;"></div>
<svg style="position:absolute;left:864.8px;top:772px;" width="23.9" height="23" viewBox="0 0 23.9 23"><path d="M12,19 V6 M6.5,11.5 L12,6 L17.5,11.5" stroke="#111" stroke-width="1.7" fill="none"/></svg>
<div style="left:893.5px;top:772px;width:23.6px;height:23px;background:transparent;border:1.6px solid #ffad2a;"></div>
<svg style="position:absolute;left:893.5px;top:772px;" width="23.6" height="23" viewBox="0 0 23.6 23"><path d="M12,4 V17 M6.5,11.5 L12,17 L17.5,11.5" stroke="#ffad2a" stroke-width="1.7" fill="none"/></svg>
<div style="left:921.9px;top:772px;width:23.9px;height:23px;background:transparent;border:1.6px solid #ffad2a;"></div>
<svg style="position:absolute;left:921.9px;top:772px;" width="23.9" height="23" viewBox="0 0 23.9 23"><path d="M12,6 V17 M8,9.5 L12,5.5 L16,9.5 M8,13.5 L12,17.5 L16,13.5" stroke="#ffad2a" stroke-width="1.7" fill="none"/></svg>
<div style="left:950.3px;top:772px;width:23.9px;height:23px;background:transparent;border:1.6px solid #ffad2a;"></div>
<svg style="position:absolute;left:950.3px;top:772px;" width="23.9" height="23" viewBox="0 0 23.9 23"><circle cx="7.5" cy="7" r="1.9" fill="#ffad2a"/><circle cx="16.5" cy="7" r="1.9" fill="#ffad2a"/><circle cx="12" cy="11.5" r="1.9" fill="#ffad2a"/><circle cx="7.5" cy="16" r="1.9" fill="#ffad2a"/><circle cx="16.5" cy="16" r="1.9" fill="#ffad2a"/></svg>
<div class="t" style="left:999.7px;top:776.86px;width:600px;font-size:14.94px;line-height:14.94px;color:#dcdcdc;font-weight:400;text-align:left;transform:scaleX(1.02);transform-origin:left 50%;-webkit-text-stroke:0.25px currentColor;">Notes</div>
<div style="left:1051.5px;top:772px;width:23.6px;height:23px;background:transparent;border:1.6px solid #ffad2a;"></div>
<svg style="position:absolute;left:1051.5px;top:772px;" width="23.6" height="23" viewBox="0 0 23.6 23"><path d="M6,11.5 H18" stroke="#ffad2a" stroke-width="1.7"/></svg>
<div style="left:1079.9px;top:772px;width:23.3px;height:23px;background:#ffad2a;"></div>
<svg style="position:absolute;left:1079.9px;top:772px;" width="23.3" height="23" viewBox="0 0 23.3 23"><path d="M12,19 V6 M6.5,11.5 L12,6 L17.5,11.5" stroke="#111" stroke-width="1.7" fill="none"/></svg>
<div style="left:1108.8px;top:772px;width:23.1px;height:23px;background:transparent;border:1.6px solid #ffad2a;"></div>
<svg style="position:absolute;left:1108.8px;top:772px;" width="23.1" height="23" viewBox="0 0 23.1 23"><path d="M12,4 V17 M6.5,11.5 L12,17 L17.5,11.5" stroke="#ffad2a" stroke-width="1.7" fill="none"/></svg>
<div style="left:1137px;top:772px;width:23.5px;height:23px;background:transparent;border:1.6px solid #ffad2a;"></div>
<svg style="position:absolute;left:1137px;top:772px;" width="23.5" height="23" viewBox="0 0 23.5 23"><rect x="4.5" y="4.5" width="14.5" height="14" stroke="#ffad2a" stroke-width="1.4" fill="none"/><rect x="7" y="5" width="2.2" height="8" fill="#ffad2a"/><rect x="10.7" y="5" width="2.2" height="8" fill="#ffad2a"/><rect x="14.4" y="5" width="2.2" height="8" fill="#ffad2a"/><path d="M8,13 V18.5 M11.8,13 V18.5 M15.5,13 V18.5" stroke="#ffad2a" stroke-width="1"/></svg>
<div style="left:1165.6px;top:772px;width:23.4px;height:23px;background:transparent;border:1.6px solid #ffad2a;"></div>
<svg style="position:absolute;left:1165.6px;top:772px;" width="23.4" height="23" viewBox="0 0 23.4 23"><circle cx="7.5" cy="7" r="1.9" fill="#ffad2a"/><circle cx="16.5" cy="7" r="1.9" fill="#ffad2a"/><circle cx="12" cy="11.5" r="1.9" fill="#ffad2a"/><circle cx="7.5" cy="16" r="1.9" fill="#ffad2a"/><circle cx="16.5" cy="16" r="1.9" fill="#ffad2a"/></svg>
<div style="left:1194.3px;top:772px;width:23.3px;height:23px;background:transparent;border:1.6px solid #ffad2a;"></div>
<svg style="position:absolute;left:1194.3px;top:772px;" width="23.3" height="23" viewBox="0 0 23.3 23"><path d="M5.5,11.5 H18 M12.5,6 L18,11.5 L12.5,17" stroke="#ffad2a" stroke-width="1.7" fill="none"/></svg>
<div style="left:1238px;top:773.8px;width:48.7px;height:19.9px;background:transparent;border:1.8px solid #ffad2a;"></div>
<div class="t" style="left:962.3px;top:776.66px;width:600px;font-size:14.94px;line-height:14.94px;color:#ffad2a;font-weight:400;text-align:center;transform:scaleX(1.02);transform-origin:center 50%;-webkit-text-stroke:0.25px currentColor;">Hold</div>
<div style="left:1305.8px;top:777.3px;width:14.1px;height:13.7px;background:#ffad2a;"></div>
<div class="t" style="left:1328.4px;top:776.86px;width:600px;font-size:14.94px;line-height:14.94px;color:#cfcfcf;font-weight:400;text-align:left;transform:scaleX(1.02);transform-origin:left 50%;-webkit-text-stroke:0.25px currentColor;">Key Retrig.</div>
<div style="left:1428px;top:773.8px;width:19.8px;height:19.9px;background:transparent;border:1.6px solid #a48cf0;"></div>
<div class="t" style="left:1431.5px;top:780.54px;width:600px;font-size:12.36px;line-height:12.36px;color:#a48cf0;font-weight:700;text-align:left;transform:scaleX(1.06);transform-origin:left 50%;">&#9837;</div>
<div class="t" style="left:1438.5px;top:775.78px;width:600px;font-size:10.3px;line-height:10.3px;color:#a48cf0;font-weight:700;text-align:left;transform:scaleX(1.06);transform-origin:left 50%;">#</div>
<div style="left:756.5px;top:804.3px;width:124.0px;height:37.5px;background:#141414;border-bottom:1.5px solid #303030;border-right:1.5px solid #303030;"></div>
<div class="t" style="left:766.3px;top:814.86px;width:600px;font-size:14.94px;line-height:14.94px;color:#b4b4b4;font-weight:400;text-align:left;transform:scaleX(1.02);transform-origin:left 50%;-webkit-text-stroke:0.25px currentColor;">Velocity</div>
<div style="left:756.5px;top:841.8px;width:124.0px;height:38.4px;background:#0d0d0d;border-bottom:1.5px solid #303030;border-right:1.5px solid #303030;"></div>
<div class="t" style="left:766.3px;top:852.36px;width:600px;font-size:14.94px;line-height:14.94px;color:#ffad2a;font-weight:400;text-align:left;transform:scaleX(1.02);transform-origin:left 50%;-webkit-text-stroke:0.25px currentColor;">Length</div>
<div style="left:756.5px;top:880.2px;width:124.0px;height:38.1px;background:#141414;border-bottom:1.5px solid #303030;border-right:1.5px solid #303030;"></div>
<div class="t" style="left:766.3px;top:890.76px;width:600px;font-size:14.94px;line-height:14.94px;color:#bdbdbd;font-weight:400;text-align:left;transform:scaleX(1.02);transform-origin:left 50%;-webkit-text-stroke:0.25px currentColor;">Chance</div>
<div style="left:854.2px;top:892.2px;width:14.1px;height:13.8px;background:transparent;border:1.6px solid #ffad2a;"></div>
<div style="left:756.5px;top:918.3px;width:124.0px;height:37.5px;background:#141414;border-bottom:1.5px solid #303030;border-right:1.5px solid #303030;"></div>
<div class="t" style="left:766.3px;top:928.86px;width:600px;font-size:14.94px;line-height:14.94px;color:#bdbdbd;font-weight:400;text-align:left;transform:scaleX(1.02);transform-origin:left 50%;-webkit-text-stroke:0.25px currentColor;">Ratchet</div>
<div style="left:854.2px;top:930.3px;width:14.1px;height:13.8px;background:transparent;border:1.6px solid #ffad2a;"></div>
<div style="left:756.5px;top:955.8px;width:124.0px;height:37.9px;background:#141414;border-bottom:1.5px solid #303030;border-right:1.5px solid #303030;"></div>
<div class="t" style="left:766.3px;top:966.36px;width:600px;font-size:14.94px;line-height:14.94px;color:#bdbdbd;font-weight:400;text-align:left;transform:scaleX(1.02);transform-origin:left 50%;-webkit-text-stroke:0.25px currentColor;">Transpose</div>
<div style="left:854.2px;top:967.8px;width:14.1px;height:13.8px;background:transparent;border:1.6px solid #ffad2a;"></div>
<div style="left:756.5px;top:993.7px;width:124.0px;height:36.8px;background:#141414;border-bottom:1.5px solid #303030;border-right:1.5px solid #303030;"></div>
<div class="t" style="left:766.3px;top:1004.26px;width:600px;font-size:14.94px;line-height:14.94px;color:#bdbdbd;font-weight:400;text-align:left;transform:scaleX(1.02);transform-origin:left 50%;-webkit-text-stroke:0.25px currentColor;">Map/CC</div>
<div class="t" style="left:894.1px;top:816.56px;width:600px;font-size:14.94px;line-height:14.94px;color:#bdbdbd;font-weight:400;text-align:left;transform:scaleX(1.02);transform-origin:left 50%;-webkit-text-stroke:0.25px currentColor;">Loop</div>
<div class="t" style="left:940.4px;top:816.56px;width:600px;font-size:14.94px;line-height:14.94px;color:#ffad2a;font-weight:400;text-align:left;transform:scaleX(1.02);transform-origin:left 50%;-webkit-text-stroke:0.25px currentColor;">16</div>
<div class="t" style="left:980.7px;top:816.56px;width:600px;font-size:14.94px;line-height:14.94px;color:#ffad2a;font-weight:400;text-align:left;transform:scaleX(1.02);transform-origin:left 50%;-webkit-text-stroke:0.25px currentColor;">Forwards</div>
<svg style="position:absolute;left:1055.75px;top:819.5px;" width="10.5" height="8" viewBox="0 0 10.5 8"><polygon points="0,0 10.5,0 5.25,8" fill="#ffad2a"/></svg>
<div class="t" style="left:1215.5px;top:816.96px;width:600px;font-size:14.94px;line-height:14.94px;color:#bdbdbd;font-weight:400;text-align:left;transform:scaleX(1.02);transform-origin:left 50%;-webkit-text-stroke:0.25px currentColor;">Step</div>
<div class="t" style="left:1260.6px;top:816.96px;width:600px;font-size:14.94px;line-height:14.94px;color:#f0f0f0;font-weight:400;text-align:left;transform:scaleX(1.02);transform-origin:left 50%;-webkit-text-stroke:0.25px currentColor;">1</div>
<div class="t" style="left:1308.4px;top:816.96px;width:600px;font-size:14.94px;line-height:14.94px;color:#bdbdbd;font-weight:400;text-align:left;transform:scaleX(1.02);transform-origin:left 50%;-webkit-text-stroke:0.25px currentColor;">Length</div>
<div class="t" style="left:1373.5px;top:816.96px;width:600px;font-size:14.94px;line-height:14.94px;color:#f0f0f0;font-weight:400;text-align:left;transform:scaleX(1.02);transform-origin:left 50%;-webkit-text-stroke:0.25px currentColor;">0 %</div>
<div style="left:889.7px;top:839.7px;width:30.1px;height:156.0px;background:#372812;"></div>
<div style="left:889.7px;top:839.7px;width:30.1px;height:156.0px;background:#ffad2a;"></div>
<div style="left:889.7px;top:1000.3px;width:30.1px;height:20.6px;background:#ffad2a;border:1px solid #c98a20;box-shadow:inset 0 0 0 1px #f0a828;"></div>
<div style="left:922.87px;top:839.7px;width:30.1px;height:156.0px;background:#372812;"></div>
<div style="left:922.87px;top:839.7px;width:30.1px;height:156.0px;background:#ffad2a;"></div>
<div style="left:922.87px;top:1000.3px;width:30.1px;height:20.6px;background:#ffad2a;border:1px solid #c98a20;box-shadow:inset 0 0 0 1px #f0a828;"></div>
<div style="left:956.04px;top:839.7px;width:30.1px;height:156.0px;background:#372812;"></div>
<div style="left:956.04px;top:917.4px;width:30.1px;height:78.3px;background:#ffad2a;"></div>
<div style="left:956.04px;top:1000.3px;width:30.1px;height:20.6px;background:#ffad2a;border:1px solid #c98a20;box-shadow:inset 0 0 0 1px #f0a828;"></div>
<div style="left:989.21px;top:839.7px;width:30.1px;height:156.0px;background:#372812;"></div>
<div style="left:989.21px;top:839.7px;width:30.1px;height:156.0px;background:#ffad2a;"></div>
<div style="left:989.21px;top:1000.3px;width:30.1px;height:20.6px;background:#ffad2a;border:1px solid #c98a20;box-shadow:inset 0 0 0 1px #f0a828;"></div>
<div style="left:1022.38px;top:839.7px;width:30.1px;height:156.0px;background:#372812;"></div>
<div style="left:1022.38px;top:917.4px;width:30.1px;height:78.3px;background:#ffad2a;"></div>
<div style="left:1022.38px;top:1000.3px;width:30.1px;height:20.6px;background:#ffad2a;border:1px solid #c98a20;box-shadow:inset 0 0 0 1px #f0a828;"></div>
<div style="left:1055.55px;top:839.7px;width:30.1px;height:156.0px;background:#372812;"></div>
<div style="left:1055.55px;top:917.4px;width:30.1px;height:78.3px;background:#ffad2a;"></div>
<div style="left:1055.55px;top:1000.3px;width:30.1px;height:20.6px;background:#ffad2a;border:1px solid #c98a20;box-shadow:inset 0 0 0 1px #f0a828;"></div>
<div style="left:1088.72px;top:839.7px;width:30.1px;height:156.0px;background:#372812;"></div>
<div style="left:1088.72px;top:917.4px;width:30.1px;height:78.3px;background:#ffad2a;"></div>
<div style="left:1088.72px;top:1000.3px;width:30.1px;height:20.6px;background:#ffad2a;border:1px solid #c98a20;box-shadow:inset 0 0 0 1px #f0a828;"></div>
<div style="left:1121.89px;top:839.7px;width:30.1px;height:156.0px;background:#372812;"></div>
<div style="left:1121.89px;top:917.4px;width:30.1px;height:78.3px;background:#ffad2a;"></div>
<div style="left:1121.89px;top:1000.3px;width:30.1px;height:20.6px;background:#ffad2a;border:1px solid #c98a20;box-shadow:inset 0 0 0 1px #f0a828;"></div>
<div style="left:1155.06px;top:839.7px;width:30.1px;height:156.0px;background:#372812;"></div>
<div style="left:1155.06px;top:839.7px;width:30.1px;height:156.0px;background:#ffad2a;"></div>
<div style="left:1155.06px;top:1000.3px;width:30.1px;height:20.6px;background:#ffad2a;border:1px solid #c98a20;box-shadow:inset 0 0 0 1px #f0a828;"></div>
<div style="left:1188.23px;top:839.7px;width:30.1px;height:156.0px;background:#372812;"></div>
<div style="left:1188.23px;top:879px;width:30.1px;height:116.7px;background:#ffad2a;"></div>
<div style="left:1188.23px;top:1000.3px;width:30.1px;height:20.6px;background:#ffad2a;border:1px solid #c98a20;box-shadow:inset 0 0 0 1px #f0a828;"></div>
<div style="left:1221.4px;top:839.7px;width:30.1px;height:156.0px;background:#372812;"></div>
<div style="left:1221.4px;top:917.4px;width:30.1px;height:78.3px;background:#ffad2a;"></div>
<div style="left:1221.4px;top:1000.3px;width:30.1px;height:20.6px;background:#ffad2a;border:1px solid #c98a20;box-shadow:inset 0 0 0 1px #f0a828;"></div>
<div style="left:1254.57px;top:839.7px;width:30.1px;height:156.0px;background:#372812;"></div>
<div style="left:1254.57px;top:917.4px;width:30.1px;height:78.3px;background:#ffad2a;"></div>
<div style="left:1254.57px;top:1000.3px;width:30.1px;height:20.6px;background:#ffad2a;border:1px solid #c98a20;box-shadow:inset 0 0 0 1px #f0a828;"></div>
<div style="left:1287.74px;top:839.7px;width:30.1px;height:156.0px;background:#372812;"></div>
<div style="left:1287.74px;top:839.7px;width:30.1px;height:156.0px;background:#ffad2a;"></div>
<div style="left:1287.74px;top:1000.3px;width:30.1px;height:20.6px;background:#ffad2a;border:1px solid #c98a20;box-shadow:inset 0 0 0 1px #f0a828;"></div>
<div style="left:1320.91px;top:839.7px;width:30.1px;height:156.0px;background:#372812;"></div>
<div style="left:1320.91px;top:917.4px;width:30.1px;height:78.3px;background:#ffad2a;"></div>
<div style="left:1320.91px;top:1000.3px;width:30.1px;height:20.6px;background:#ffad2a;border:1px solid #c98a20;box-shadow:inset 0 0 0 1px #f0a828;"></div>
<div style="left:1354.08px;top:839.7px;width:30.1px;height:156.0px;background:#372812;"></div>
<div style="left:1354.08px;top:839.7px;width:30.1px;height:156.0px;background:#ffad2a;"></div>
<div style="left:1354.08px;top:1000.3px;width:30.1px;height:20.6px;background:#ffad2a;border:1px solid #c98a20;box-shadow:inset 0 0 0 1px #f0a828;"></div>
<div style="left:1387.25px;top:839.7px;width:30.1px;height:156.0px;background:#372812;"></div>
<div style="left:1387.25px;top:917.4px;width:30.1px;height:78.3px;background:#ffad2a;"></div>
<div style="left:1387.25px;top:1000.3px;width:30.1px;height:20.6px;background:#ffad2a;border:1px solid #c98a20;box-shadow:inset 0 0 0 1px #f0a828;"></div>
<div style="left:1436.3px;top:840px;width:1.5px;height:155.5px;background:#3c3c3c;"></div>
<div style="left:1428px;top:873.4px;width:18.5px;height:89.5px;background:#ffad2a;"></div>
<div style="left:1428px;top:999.5px;width:19px;height:19.9px;background:transparent;border:1.6px solid #ffad2a;"></div>
<svg style="position:absolute;left:1428px;top:999.5px;" width="19" height="19.9" viewBox="0 0 19 19.9"><circle cx="5.5" cy="5.5" r="1.8" fill="#ffad2a"/><circle cx="13.5" cy="5.5" r="1.8" fill="#ffad2a"/><circle cx="9.5" cy="10" r="1.8" fill="#ffad2a"/><circle cx="5.5" cy="14.5" r="1.8" fill="#ffad2a"/><circle cx="13.5" cy="14.5" r="1.8" fill="#ffad2a"/></svg>
<svg style="position:absolute;left:1465px;top:806px;" width="6" height="170" viewBox="0 0 6 170"><circle cx="3" cy="5.0" r="2.3" fill="#121212"/><circle cx="3" cy="12.9" r="2.3" fill="#121212"/><circle cx="3" cy="20.8" r="2.3" fill="#121212"/><circle cx="3" cy="28.7" r="2.3" fill="#121212"/><circle cx="3" cy="36.6" r="2.3" fill="#121212"/><circle cx="3" cy="44.5" r="2.3" fill="#121212"/><circle cx="3" cy="52.4" r="2.3" fill="#121212"/><circle cx="3" cy="60.3" r="2.3" fill="#121212"/><circle cx="3" cy="68.2" r="2.3" fill="#121212"/><circle cx="3" cy="76.1" r="2.3" fill="#121212"/><circle cx="3" cy="84.0" r="2.3" fill="#121212"/><circle cx="3" cy="91.9" r="2.3" fill="#121212"/><circle cx="3" cy="99.8" r="2.3" fill="#121212"/><circle cx="3" cy="107.7" r="2.3" fill="#121212"/><circle cx="3" cy="115.6" r="2.3" fill="#121212"/><circle cx="3" cy="123.5" r="2.3" fill="#121212"/><circle cx="3" cy="131.4" r="2.3" fill="#121212"/><circle cx="3" cy="139.3" r="2.3" fill="#121212"/><circle cx="3" cy="147.2" r="2.3" fill="#121212"/><circle cx="3" cy="155.1" r="2.3" fill="#121212"/><circle cx="3" cy="163.0" r="2.3" fill="#121212"/></svg>
<div style="left:1475px;top:738px;width:487px;height:297px;background:#a8a8a8;border-radius:6px;"></div>
<div class="t" style="left:1418.0px;top:877.42px;width:600px;font-size:15.45px;line-height:15.45px;color:#161616;font-weight:400;text-align:center;transform:scaleX(1.13);transform-origin:center 50%;">Drop an Instrument or Sample Here</div>
<svg style="position:absolute;left:73px;top:1052px;" width="24" height="24" viewBox="0 0 24 24"><circle cx="12" cy="11.8" r="11.8" fill="#a0a0a0"/><rect x="10.3" y="9.5" width="3.4" height="9" fill="#6e6e6e"/><circle cx="12" cy="6" r="1.9" fill="#6e6e6e"/></svg>
<div style="left:122.4px;top:1049.6px;width:1140.9px;height:28.9px;background:#a4a4a4;border-radius:4px;"></div>
<div class="t" style="left:132.3px;top:1055.62px;width:600px;font-size:15.45px;line-height:15.45px;color:#111;font-weight:400;text-align:left;letter-spacing:0px;transform:scaleX(1.085);transform-origin:left 50%;">2-MIDI 2&nbsp; Start: 17.1.1&nbsp; End: 25.1.1&nbsp; Length: 8.0.0</div>
<div style="left:1277.7px;top:1049.4px;width:347.0px;height:29.4px;background:#cbcbcb;border-radius:4px;"></div>
<div style="left:1277.7px;top:1049.4px;width:29.8px;height:29.4px;background:#a2a2a2;border-radius:4px 0 0 4px;border-right:1.5px solid #6a6a6a;"></div>
<svg style="position:absolute;left:1277.7px;top:1049.4px;" width="30" height="29.4" viewBox="0 0 30 29.4"><polygon points="11.5,9 20,14.7 11.5,20.4" fill="#111"/></svg>
<div style="left:1639.8px;top:1049.4px;width:29.4px;height:29.4px;background:#ffad2a;border-radius:4px 0 0 4px;"></div>
<svg style="position:absolute;left:1639.8px;top:1049.4px;" width="29.4" height="29.4" viewBox="0 0 29.4 29.4"><polygon points="9,19 20.4,19 14.7,10" fill="#111"/></svg>
<div style="left:1669.2px;top:1049.4px;width:74.8px;height:29.4px;background:#a4a4a4;"></div>
<div class="t" style="left:1405.5px;top:1055.42px;width:600px;font-size:15.45px;line-height:15.45px;color:#111;font-weight:700;text-align:center;transform:scaleX(1.06);transform-origin:center 50%;">2-MIDI</div>
<div style="left:1742px;top:1047px;width:144.6px;height:34px;background:#a4a4a4;border:2.8px solid #262626;border-radius:6px;"></div>
<div style="left:1779.5px;top:1049.5px;width:3.0px;height:29.0px;background:#7d7d7d;"></div>
<div style="left:1802px;top:1049.5px;width:3px;height:29.0px;background:#7d7d7d;"></div>
<div class="t" style="left:1461.0px;top:1056.42px;width:600px;font-size:15.45px;line-height:15.45px;color:#111;font-weight:400;text-align:center;transform:scaleX(1.13);transform-origin:center 50%;">Futu</div>
<div class="t" style="left:1492.5px;top:1056.42px;width:600px;font-size:15.45px;line-height:15.45px;color:#111;font-weight:400;text-align:center;transform:scaleX(1.13);transform-origin:center 50%;">MI</div>
<div class="t" style="left:1545.0px;top:1056.42px;width:600px;font-size:15.45px;line-height:15.45px;color:#111;font-weight:400;text-align:center;transform:scaleX(1.13);transform-origin:center 50%;">Step Arp</div>
<svg style="position:absolute;left:1913px;top:1050px;" width="48" height="28" viewBox="0 0 48 28"><rect x="1.5" y="11" width="2.5" height="12" fill="#9a9a9a"/><rect x="7" y="6" width="2.5" height="17" fill="#9a9a9a"/><rect x="12.5" y="9" width="2.5" height="14" fill="#9a9a9a"/><rect x="18" y="4" width="2.5" height="19" fill="#9a9a9a"/><polygon points="34,10 44,10 39,16" fill="#9a9a9a"/></svg></body></html>
